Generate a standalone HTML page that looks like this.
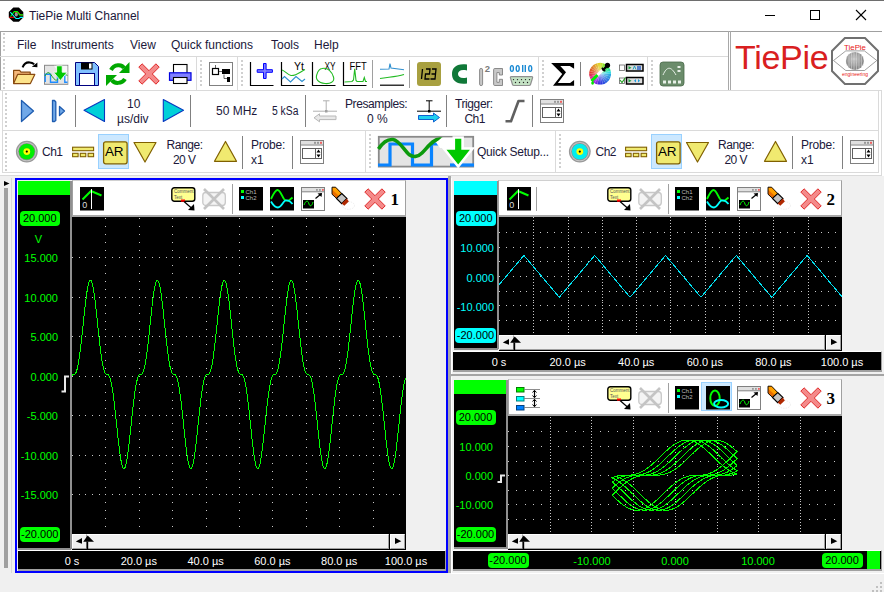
<!DOCTYPE html><html><head><meta charset="utf-8"><style>
*{margin:0;padding:0;box-sizing:border-box}
html,body{width:884px;height:592px;overflow:hidden;background:#f0f0f0;font-family:"Liberation Sans",sans-serif;position:relative}
.t{position:absolute;white-space:nowrap;line-height:1}
svg{position:absolute;overflow:visible}
</style></head><body>
<div style="position:absolute;left:0px;top:0px;width:884px;height:31px;background:#fff"></div>
<div style="position:absolute;left:0px;top:0px;width:884px;height:1px;background:#6e6e6e"></div>
<div class="t" style="left:29px;top:10px;font-size:12px;color:#20183a;">TiePie Multi Channel</div>
<svg style="left:0px;top:0px" width="884" height="592" viewBox="0 0 884 592"><polygon points="13.3,7.5 18.9,7.5 23.3,11.9 23.3,17.4 18.9,21.8 13.3,21.8 8.8,17.4 8.8,11.9" fill="#000"/><path d="M9.2,17.3 H15" stroke="#ff0000" stroke-width="1.1"/><path d="M15,12.5 H18.5 L20.5,15 H23" stroke="#ff0000" stroke-width="1.1" fill="none"/><path d="M10.5,16.5 L14.3,11.6 H17.3 L19.6,14.9 H23" stroke="#00ff00" stroke-width="1.1" fill="none"/><path d="M10.3,12.1 L16,18.5 H19 L20.5,17.4 H23" stroke="#00ffff" stroke-width="1.1" fill="none"/><ellipse cx="16.3" cy="14.5" rx="1.6" ry="2" fill="#999"/></svg>
<svg style="left:0px;top:0px" width="884" height="31" viewBox="0 0 884 31"><line x1="765" y1="15.5" x2="775" y2="15.5" stroke="#000" stroke-width="1"/><rect x="810.5" y="10.5" width="9" height="9" fill="none" stroke="#000" stroke-width="1"/><line x1="856" y1="10" x2="866" y2="20" stroke="#000" stroke-width="1.1"/><line x1="866" y1="10" x2="856" y2="20" stroke="#000" stroke-width="1.1"/></svg>
<div style="position:absolute;left:0px;top:31px;width:884px;height:145px;background:#fff"></div>
<div style="position:absolute;left:0px;top:31px;width:882px;height:1px;background:#a0a0a0"></div>
<div style="position:absolute;left:0px;top:31px;width:1px;height:59px;background:#a0a0a0"></div>
<div style="position:absolute;left:0px;top:56px;width:729px;height:1px;background:#dadada"></div>
<div style="position:absolute;left:0px;top:90px;width:882px;height:1px;background:#dadada"></div>
<div style="position:absolute;left:728px;top:31px;width:1px;height:59px;background:#a8a8a8"></div>
<div style="position:absolute;left:730px;top:31px;width:1px;height:59px;background:#a8a8a8"></div>
<div style="position:absolute;left:2px;top:90px;width:877px;height:1px;background:#dadada"></div>
<div style="position:absolute;left:2px;top:90px;width:1px;height:83px;background:#dadada"></div>
<div style="position:absolute;left:2px;top:130px;width:877px;height:1px;background:#dadada"></div>
<div style="position:absolute;left:2px;top:172px;width:877px;height:1px;background:#dadada"></div>
<div style="position:absolute;left:878px;top:90px;width:1px;height:83px;background:#dadada"></div>
<div style="position:absolute;left:0px;top:175px;width:882px;height:1px;background:#dadada"></div>
<div style="position:absolute;left:881px;top:90px;width:1px;height:86px;background:#dadada"></div>
<svg style="left:0px;top:0px" width="884" height="592" viewBox="0 0 884 592"><path d="M3,33h2v2h-2zM3,37h2v2h-2zM3,41h2v2h-2zM3,45h2v2h-2zM3,49h2v2h-2z" fill="#d0d0d0"/></svg>
<svg style="left:0px;top:0px" width="884" height="592" viewBox="0 0 884 592"><path d="M3,59h2v2h-2zM3,63h2v2h-2zM3,67h2v2h-2zM3,71h2v2h-2zM3,75h2v2h-2zM3,79h2v2h-2zM3,83h2v2h-2zM3,87h2v2h-2z" fill="#d0d0d0"/></svg>
<svg style="left:0px;top:0px" width="884" height="592" viewBox="0 0 884 592"><path d="M5,93h2v2h-2zM5,97h2v2h-2zM5,101h2v2h-2zM5,105h2v2h-2zM5,109h2v2h-2zM5,113h2v2h-2zM5,117h2v2h-2zM5,121h2v2h-2zM5,125h2v2h-2z" fill="#d0d0d0"/></svg>
<svg style="left:0px;top:0px" width="884" height="592" viewBox="0 0 884 592"><path d="M5,133h2v2h-2zM5,137h2v2h-2zM5,141h2v2h-2zM5,145h2v2h-2zM5,149h2v2h-2zM5,153h2v2h-2zM5,157h2v2h-2zM5,161h2v2h-2zM5,165h2v2h-2zM5,169h2v2h-2z" fill="#d0d0d0"/></svg>
<div style="position:absolute;left:196px;top:57px;width:1px;height:33px;background:#dadada"></div>
<div style="position:absolute;left:237px;top:57px;width:1px;height:33px;background:#dadada"></div>
<div style="position:absolute;left:538px;top:57px;width:1px;height:33px;background:#dadada"></div>
<div style="position:absolute;left:647px;top:57px;width:1px;height:33px;background:#dadada"></div>
<svg style="left:0px;top:0px" width="884" height="592" viewBox="0 0 884 592"><path d="M200,60h2v2h-2zM200,64h2v2h-2zM200,68h2v2h-2zM200,72h2v2h-2zM200,76h2v2h-2zM200,80h2v2h-2zM200,84h2v2h-2z" fill="#d0d0d0"/></svg>
<svg style="left:0px;top:0px" width="884" height="592" viewBox="0 0 884 592"><path d="M241,60h2v2h-2zM241,64h2v2h-2zM241,68h2v2h-2zM241,72h2v2h-2zM241,76h2v2h-2zM241,80h2v2h-2zM241,84h2v2h-2z" fill="#d0d0d0"/></svg>
<svg style="left:0px;top:0px" width="884" height="592" viewBox="0 0 884 592"><path d="M542,60h2v2h-2zM542,64h2v2h-2zM542,68h2v2h-2zM542,72h2v2h-2zM542,76h2v2h-2zM542,80h2v2h-2zM542,84h2v2h-2z" fill="#d0d0d0"/></svg>
<svg style="left:0px;top:0px" width="884" height="592" viewBox="0 0 884 592"><path d="M651,60h2v2h-2zM651,64h2v2h-2zM651,68h2v2h-2zM651,72h2v2h-2zM651,76h2v2h-2zM651,80h2v2h-2zM651,84h2v2h-2z" fill="#d0d0d0"/></svg>
<div style="position:absolute;left:365px;top:131px;width:1px;height:41px;background:#dadada"></div>
<svg style="left:0px;top:0px" width="884" height="592" viewBox="0 0 884 592"><path d="M369,134h2v2h-2zM369,138h2v2h-2zM369,142h2v2h-2zM369,146h2v2h-2zM369,150h2v2h-2zM369,154h2v2h-2zM369,158h2v2h-2zM369,162h2v2h-2zM369,166h2v2h-2z" fill="#d0d0d0"/></svg>
<div style="position:absolute;left:555px;top:131px;width:1px;height:41px;background:#dadada"></div>
<svg style="left:0px;top:0px" width="884" height="592" viewBox="0 0 884 592"><path d="M559,134h2v2h-2zM559,138h2v2h-2zM559,142h2v2h-2zM559,146h2v2h-2zM559,150h2v2h-2zM559,154h2v2h-2zM559,158h2v2h-2zM559,162h2v2h-2zM559,166h2v2h-2z" fill="#d0d0d0"/></svg>
<div class="t" style="left:17px;top:39px;font-size:12px;color:#20183a;">File</div>
<div class="t" style="left:51px;top:39px;font-size:12px;color:#20183a;">Instruments</div>
<div class="t" style="left:130px;top:39px;font-size:12px;color:#20183a;">View</div>
<div class="t" style="left:171px;top:39px;font-size:12px;color:#20183a;">Quick functions</div>
<div class="t" style="left:271px;top:39px;font-size:12px;color:#20183a;">Tools</div>
<div class="t" style="left:314px;top:39px;font-size:12px;color:#20183a;">Help</div>
<div class="t" style="left:735px;top:40px;font-size:34px;color:#d9201f;letter-spacing:-0.3px">TiePie</div>
<svg style="left:831px;top:37px" width="48" height="48" viewBox="0 0 48 48"><polygon points="13.9,1 34,1 47,14 47,34 34,47 13.9,47 1,34 1,14" fill="#fff" stroke="#707070" stroke-width="2"/><path d="M2.5,23.5 L14.8,13.9 H33.5 L45.8,23.5 L33.5,33.5 H14.8 Z" fill="none" stroke="#606060" stroke-width="0.6"/><defs><radialGradient id="glb" cx="0.45" cy="0.4"><stop offset="0" stop-color="#c8c8c8"/><stop offset="1" stop-color="#8a8a8a"/></radialGradient></defs><circle cx="23.9" cy="23.9" r="9" fill="url(#glb)"/><path d="M18,17v14M20.5,15.5v17M23,15v18M25.5,15v18M28,15.5v17M30.5,17v14" stroke="#e0e0e0" stroke-width="0.5"/><path d="M15.5,20h17M15,24h18M15.5,28h17" stroke="#b0b0b0" stroke-width="0.5"/><text x="24" y="12.6" font-size="8" fill="#e82020" text-anchor="middle" font-family="Liberation Sans" textLength="22" lengthAdjust="spacingAndGlyphs">TiePie</text><text x="24" y="39.4" font-size="5.5" fill="#e82020" text-anchor="middle" font-family="Liberation Sans" textLength="26" lengthAdjust="spacingAndGlyphs">engineering</text></svg>
<svg style="left:0px;top:0px" width="884" height="592" viewBox="0 0 884 592"><path d="M22.6,67.4 C24,63.5 27,62.2 29.7,62.4 C31.5,62.5 33,63.2 34.2,64.2" stroke="#000" stroke-width="2" fill="none"/><polygon points="31.8,66.8 37.4,62.4 37.4,67.2" fill="#000"/><path d="M13.6,83.6 V70.4 H19.6 L21,72.2 H30.2 V74.5" fill="#f6b87a" stroke="#8a4a10" stroke-width="1.2" stroke-linejoin="round"/><polygon points="13.6,83.6 17.6,74.4 34.8,74.4 30.4,83.6" fill="#fde48c" stroke="#8a4a10" stroke-width="1.2" stroke-linejoin="round"/></svg>
<svg style="left:0px;top:0px" width="884" height="592" viewBox="0 0 884 592"><rect x="44.5" y="65.3" width="23.3" height="19" fill="#e4e4e4" stroke="#8a8a8a" stroke-width="1"/><polygon points="54,65.8 67.3,65.8 67.3,83.8" fill="#f8f8f8"/><path d="M45.2,82 V74.2 H50.5 V82.3 H57.5 V74.2 H60 M64.8,74.2 V82.3 H67.5" stroke="#1e8cff" stroke-width="1.4" fill="none"/><path d="M45,76 C46,73.5 47.5,72.3 49,72.8 C51,73.5 53,79 55.5,80 C58,81 60,76 62,74.5 C64,73 66,74 67.5,76" stroke="#22aa22" stroke-width="1" fill="none"/><polygon points="56.6,65.8 62.2,65.8 62.2,72.2 67.2,72.2 60.4,80.5 53.6,72.2 56.6,72.2" fill="#00c800" stroke="#fff" stroke-width="0.8"/></svg>
<svg style="left:75px;top:62px" width="24" height="24" viewBox="0 0 24 24"><polygon points="0.5,0.5 19.5,0.5 23.5,4.5 23.5,23.5 0.5,23.5" fill="#80c0ff" stroke="#000080" stroke-width="1"/><rect x="6" y="0.5" width="11.5" height="7" fill="#000"/><rect x="14" y="1.5" width="2.5" height="5" fill="#fff"/><rect x="4.5" y="11.5" width="15" height="12" fill="#fff" stroke="#000080" stroke-width="1"/></svg>
<svg style="left:105px;top:62px" width="26" height="24" viewBox="0 0 26 24"><path d="M6,8 C9,2 17,2 19,6" stroke="#00a800" stroke-width="4" fill="none"/><polygon points="24.5,0 24.5,11 14,11" fill="#00a800"/><path d="M20,17 C17,22 9,22 7,18" stroke="#00a800" stroke-width="4" fill="none"/><polygon points="1,24 1,13 12,13" fill="#00a800"/></svg>
<svg style="left:138px;top:63px" width="22" height="22" viewBox="0 0 22 22"><g transform="scale(1.0)"><polygon points="0.8,4.1 4.1,0.8 11,7.7 17.9,0.8 21.2,4.1 14.3,11 21.2,17.9 17.9,21.2 11,14.3 4.1,21.2 0.8,17.9 7.7,11" fill="#f48a8a" stroke="#e02828" stroke-width="1" stroke-linejoin="round"/></g></svg>
<svg style="left:0px;top:0px" width="884" height="592" viewBox="0 0 884 592"><rect x="173.5" y="64.5" width="13.5" height="9" fill="#fff" stroke="#000" stroke-width="1.1"/><rect x="169.5" y="72.8" width="21.5" height="7.5" fill="#8080ff" stroke="#0000e0" stroke-width="1.2"/><rect x="173.5" y="77.5" width="13.5" height="6" fill="#fff" stroke="#000" stroke-width="1.1"/></svg>
<svg style="left:209px;top:62px" width="24" height="24" viewBox="0 0 24 24"><rect x="0.5" y="0.5" width="23" height="23" fill="#fff" stroke="#808080" stroke-width="1"/><path d="M6.5,3 v3.5 M10,9.5 h3 M15,12.5 v4 h3" stroke="#404040" stroke-width="0.8" fill="none"/><rect x="3.5" y="6.5" width="6" height="6" fill="#fff" stroke="#000" stroke-width="1.2"/><rect x="13" y="7" width="8" height="5" fill="#000"/><rect x="18" y="15" width="3" height="5" fill="#000"/></svg>
<svg style="left:0px;top:0px" width="884" height="592" viewBox="0 0 884 592"><path d="M250.5,62 V85.5 H273.5" stroke="#000" stroke-width="1.2" fill="none"/><path d="M263.5,63.5 h2.6 v6.2 h6.3 v2.6 h-6.3 v6.2 h-2.6 v-6.2 h-6.3 v-2.6 h6.3z" fill="#8080ff" stroke="#0000ff" stroke-width="1"/><path d="M281.5,62 V85.5 H304.5" stroke="#000" stroke-width="1.2" fill="none"/><text x="294" y="70" font-family="Liberation Sans" font-size="10.5" fill="#000">Yt</text><path d="M282,70 C285,71 288,75 291,75.5 C296,76 300,72 305,69.5" stroke="#22bb22" stroke-width="1.1" fill="none"/><path d="M282,79 L284.5,76.5 L290.5,82 L296,76.5 L302,81.5 L305,79" stroke="#3090d0" stroke-width="1.1" fill="none"/><path d="M312.5,62 V85.5 H335.5" stroke="#000" stroke-width="1.2" fill="none"/><text x="324.6" y="70" font-family="Liberation Sans" font-size="10.5" fill="#000" textLength="11" lengthAdjust="spacingAndGlyphs">XY</text><path d="M322,68.5 C328,67 332,72 333.5,77 C335,82 330,84 325,83.5 C318,83 315,79 317,74 C318,71 319,69 322,68.5z" stroke="#22bb22" stroke-width="1.1" fill="none"/><path d="M343.5,62 V85.5 H366.5" stroke="#000" stroke-width="1.2" fill="none"/><text x="349.6" y="70" font-family="Liberation Sans" font-size="10.5" fill="#000" textLength="17.2" lengthAdjust="spacingAndGlyphs">FFT</text><path d="M344.5,82 L352,81.5 L353.5,80 L354.7,68.7 L356,80.5 L357,81.5 L363,81.5 L364.3,77.5 L365.5,81.5 L367,81.5" stroke="#22bb22" stroke-width="1.1" fill="none"/><path d="M380,69.2 L389,69 L390,63.5 L391,68 L404,69.8" stroke="#3090d0" stroke-width="1.1" fill="none"/><path d="M380,78.5 C388,77 396,77 404,74.5" stroke="#22bb22" stroke-width="1.1" fill="none"/><path d="M380,85.2 H404" stroke="#000" stroke-width="1.2"/></svg>
<div style="position:absolute;left:372px;top:60px;width:1px;height:28px;background:#a0a0a0"></div>
<div style="position:absolute;left:409px;top:60px;width:1px;height:28px;background:#a0a0a0"></div>
<div style="position:absolute;left:580px;top:62px;width:1px;height:24px;background:#808080"></div>
<svg style="left:417px;top:62px" width="24" height="24" viewBox="0 0 24 24"><rect x="0" y="0" width="24" height="24" rx="3" fill="#a8a040"/><path d="M5.5,7 L4.5,17 M9,7 h4 l-0.5,5 h-4 l-0.5,5 h4.5 M15,7 h4 l-1,10 h-4.5 M14.5,12 h4" stroke="#000" stroke-width="1.3" fill="none"/></svg>
<svg style="left:451px;top:62px" width="17" height="24" viewBox="0 0 17 24"><path d="M16,2.5 C5,1 1,6 1,12 C1,18 5,23 16,21.5 V15.5 C10,17 7,15 7,12 C7,9 10,7 16,8.5 Z" fill="#107838"/></svg>
<svg style="left:0px;top:0px" width="884" height="592" viewBox="0 0 884 592"><rect x="479.6" y="68.4" width="3" height="17.2" rx="1.5" fill="#c8c8c8" stroke="#808080" stroke-width="0.9"/><text x="484.8" y="72" font-family="Liberation Sans" font-size="9.5" font-weight="bold" fill="#7a7a7a">2</text><path d="M494.8,68.5 H502.5 V75 H499.3 V72.6 H496.9 V82.3 H499.3 V79.3 H502.5 V85.5 H494.8 Q493.6,85.5 493.6,84.3 V69.7 Q493.6,68.5 494.8,68.5z" fill="#c8c8c8" stroke="#808080" stroke-width="0.9" stroke-linejoin="round"/><g fill="none" stroke="#1a8ad4" stroke-width="1.4"><ellipse cx="511.9" cy="68.5" rx="1.5" ry="2.9"/><ellipse cx="517.7" cy="68.5" rx="1.5" ry="2.9"/><ellipse cx="530.2" cy="68.5" rx="1.5" ry="2.9"/><path d="M522.7,65 V72 M525.3,65 V72"/></g><path d="M511.5,76.6 H531.5 Q533,76.6 532.5,78 L530.5,84.5 Q530.2,85.5 529,85.5 H514 Q512.8,85.5 512.5,84.5 L510.5,78 Q510,76.6 511.5,76.6z" fill="#c4e2c4" stroke="#909090" stroke-width="1.2"/><g fill="#222"><circle cx="513.5" cy="79.6" r="0.7"/><circle cx="517.5" cy="79.6" r="0.7"/><circle cx="521.5" cy="79.6" r="0.7"/><circle cx="525.5" cy="79.6" r="0.7"/><circle cx="529.5" cy="79.6" r="0.7"/><circle cx="515.5" cy="82.5" r="0.7"/><circle cx="519.5" cy="82.5" r="0.7"/><circle cx="523.5" cy="82.5" r="0.7"/><circle cx="527.5" cy="82.5" r="0.7"/></g></svg>
<svg style="left:0px;top:0px" width="884" height="592" viewBox="0 0 884 592"><polygon points="551.1,63.1 574.1,63.1 574.1,68.8 569.8,66.1 560.3,66.1 566,72.2 557.9,82.9 570.1,82.9 574.1,79.9 574.1,85.8 553,85.8 562.2,74" fill="#000"/></svg>
<svg style="left:0px;top:0px" width="884" height="592" viewBox="0 0 884 592"><defs><radialGradient id="cwg"><stop offset="0" stop-color="#fff" stop-opacity="0.55"/><stop offset="1" stop-color="#fff" stop-opacity="0"/></radialGradient></defs><path d="M600.1,73.7L600.10,62.80A10.9,10.9 0 0 1 602.92,63.17z" fill="hsl(70,75%,50%)"/><path d="M600.1,73.7L602.92,63.17A10.9,10.9 0 0 1 605.55,64.26z" fill="hsl(90,75%,50%)"/><path d="M600.1,73.7L605.55,64.26A10.9,10.9 0 0 1 607.81,65.99z" fill="hsl(110,75%,50%)"/><path d="M600.1,73.7L607.81,65.99A10.9,10.9 0 0 1 609.54,68.25z" fill="hsl(132,75%,50%)"/><path d="M600.1,73.7L609.54,68.25A10.9,10.9 0 0 1 610.63,70.88z" fill="hsl(158,75%,50%)"/><path d="M600.1,73.7L610.63,70.88A10.9,10.9 0 0 1 611.00,73.70z" fill="hsl(182,75%,50%)"/><path d="M600.1,73.7L611.00,73.70A10.9,10.9 0 0 1 610.63,76.52z" fill="hsl(199,75%,50%)"/><path d="M600.1,73.7L610.63,76.52A10.9,10.9 0 0 1 609.54,79.15z" fill="hsl(206,75%,50%)"/><path d="M600.1,73.7L609.54,79.15A10.9,10.9 0 0 1 607.81,81.41z" fill="hsl(214,75%,50%)"/><path d="M600.1,73.7L607.81,81.41A10.9,10.9 0 0 1 605.55,83.14z" fill="hsl(221,75%,50%)"/><path d="M600.1,73.7L605.55,83.14A10.9,10.9 0 0 1 602.92,84.23z" fill="hsl(229,75%,50%)"/><path d="M600.1,73.7L602.92,84.23A10.9,10.9 0 0 1 600.10,84.60z" fill="hsl(236,75%,50%)"/><path d="M600.1,73.7L600.10,84.60A10.9,10.9 0 0 1 597.28,84.23z" fill="hsl(248,75%,50%)"/><path d="M600.1,73.7L597.28,84.23A10.9,10.9 0 0 1 594.65,83.14z" fill="hsl(265,75%,50%)"/><path d="M600.1,73.7L594.65,83.14A10.9,10.9 0 0 1 592.39,81.41z" fill="hsl(282,75%,50%)"/><path d="M600.1,73.7L592.39,81.41A10.9,10.9 0 0 1 590.66,79.15z" fill="hsl(302,75%,50%)"/><path d="M600.1,73.7L590.66,79.15A10.9,10.9 0 0 1 589.57,76.52z" fill="hsl(325,75%,50%)"/><path d="M600.1,73.7L589.57,76.52A10.9,10.9 0 0 1 589.20,73.70z" fill="hsl(348,75%,50%)"/><path d="M600.1,73.7L589.20,73.70A10.9,10.9 0 0 1 589.57,70.88z" fill="hsl(5,75%,50%)"/><path d="M600.1,73.7L589.57,70.88A10.9,10.9 0 0 1 590.66,68.25z" fill="hsl(15,75%,50%)"/><path d="M600.1,73.7L590.66,68.25A10.9,10.9 0 0 1 592.39,65.99z" fill="hsl(25,75%,50%)"/><path d="M600.1,73.7L592.39,65.99A10.9,10.9 0 0 1 594.65,64.26z" fill="hsl(35,75%,50%)"/><path d="M600.1,73.7L594.65,64.26A10.9,10.9 0 0 1 597.28,63.17z" fill="hsl(45,75%,50%)"/><path d="M600.1,73.7L597.28,63.17A10.9,10.9 0 0 1 600.10,62.80z" fill="hsl(55,75%,50%)"/><circle cx="600.1" cy="73.7" r="10.9" fill="url(#cwg)"/><path d="M602.5,70 L596,76.5" stroke="#fff" stroke-width="3"/><path d="M597.5,75 L591.5,81" stroke="#00f000" stroke-width="3"/><ellipse cx="592.6" cy="83" rx="1.4" ry="1.8" fill="#00e000"/><circle cx="607.5" cy="65.3" r="2.6" fill="#000"/><path d="M606.5,66.5 L602.5,70.5" stroke="#000" stroke-width="2.4"/><path d="M601.8,67.8 L605.2,71.2" stroke="#000" stroke-width="1.6"/></svg>
<svg style="left:619px;top:63px" width="25" height="23" viewBox="0 0 25 23"><rect x="0.5" y="2" width="5" height="5.5" fill="#fff" stroke="#666" stroke-width="0.8"/><rect x="7.5" y="1.5" width="16.5" height="6.5" fill="#ddd" stroke="#000" stroke-width="1.5"/><path d="M9.5,3 l3,1.8 l-3,1.8z" fill="#20a040"/><path d="M14,6.5 l1.5,-3.5 l1.5,3.5" stroke="#20a0c0" fill="none"/><path d="M19,3v4M21,3v4" stroke="#0040c0" stroke-width="1.2"/><rect x="0.5" y="15" width="5" height="5.5" fill="#fff" stroke="#666" stroke-width="0.8"/><path d="M1,17 l2,2.5 l3.5,-5" stroke="#20a020" stroke-width="1.2" fill="none"/><rect x="7.5" y="14.5" width="16.5" height="6.5" fill="#ddd" stroke="#000" stroke-width="1.5"/><path d="M9.5,16 l3,1.8 l-3,1.8z" fill="#20a040"/><path d="M17,16 l-2,1.8 l2,1.8z M19,16 l2,1.8 l-2,1.8z" fill="#20a0e0"/></svg>
<svg style="left:660px;top:62px" width="24" height="24" viewBox="0 0 24 24"><rect x="0" y="0" width="24" height="24" rx="3" fill="#6b8c6b" stroke="#4a6a4a" stroke-width="0.8"/><path d="M3,13 C7,4 11,4 16,13" stroke="#e8f0e8" stroke-width="1" fill="none"/><rect x="17.5" y="4" width="3" height="2" fill="#e8f0e8"/><rect x="17.5" y="8" width="3" height="2" fill="#e8f0e8"/><path d="M3,18.5h3v3h-3zM8,18.5h3v3h-3zM13,18.5h3v3h-3zM18,18.5h3v3h-3z" fill="#e8f0e8"/></svg>
<svg style="left:0px;top:0px" width="884" height="592" viewBox="0 0 884 592"><polygon points="21.5,100.5 33.5,111 21.5,121.5" fill="#70a8e8" stroke="#1e5cb0" stroke-width="1.3" stroke-linejoin="round"/><polygon points="52.5,100.5 54.5,100.5 55.8,102 55.8,120.5 54.5,121.5 52.5,121.5" fill="#70a8e8" stroke="#1e5cb0" stroke-width="1.3" stroke-linejoin="round"/><polygon points="59.5,106.5 64.5,111 59.5,115.5" fill="#70a8e8" stroke="#1e5cb0" stroke-width="1.3" stroke-linejoin="round"/><polygon points="84,110.3 104.5,99.5 104.5,121.5" fill="#00d0d8" stroke="#0838c0" stroke-width="1.1" stroke-linejoin="round"/><polygon points="183.5,110.3 163.3,99.5 163.3,121.5" fill="#00d0d8" stroke="#0838c0" stroke-width="1.1" stroke-linejoin="round"/><path d="M323,100.8h6.5M326.2,100.8v10.4M313,111.2h24" stroke="#b0b0b0" stroke-width="1" fill="none"/><rect x="325" y="110" width="2.5" height="2.5" fill="#a0a0a0"/><polygon points="314,117.8 319.5,113.8 319.5,116 336,116 336,119.6 319.5,119.6 319.5,121.8" fill="#e8e8e8" stroke="#b8b8b8" stroke-width="1" stroke-linejoin="round"/><path d="M426,100.8h6.5M429.2,100.8v10.4M417,111.2h24" stroke="#000" stroke-width="1" fill="none"/><rect x="428" y="110" width="2.5" height="2.5" fill="#000"/><polygon points="439.5,117.5 433.5,113 433.5,115.5 418.5,115.5 418.5,119.5 433.5,119.5 433.5,122" fill="#20d0f0" stroke="#1060d0" stroke-width="1" stroke-linejoin="round"/><path d="M505.5,121.3 H511 L518.5,101 H524.5" stroke="#606060" stroke-width="2.6" fill="none" stroke-linejoin="round"/></svg>
<div style="position:absolute;left:75px;top:95px;width:1px;height:32px;background:#808080"></div>
<div style="position:absolute;left:190px;top:95px;width:1px;height:32px;background:#808080"></div>
<div style="position:absolute;left:305px;top:95px;width:1px;height:32px;background:#808080"></div>
<div style="position:absolute;left:446px;top:95px;width:1px;height:32px;background:#808080"></div>
<div style="position:absolute;left:532px;top:95px;width:1px;height:32px;background:#808080"></div>
<svg style="left:540px;top:99px" width="24" height="24" viewBox="0 0 24 24"><rect x="0.5" y="0.5" width="23" height="23" fill="#fff" stroke="#808080" stroke-width="1"/><rect x="1" y="1" width="22" height="3.5" fill="#e0e0e0"/><path d="M0.5,5 h23" stroke="#808080" stroke-width="1"/><rect x="14" y="1.8" width="2" height="2" fill="#999"/><rect x="17" y="1.8" width="2" height="2" fill="#999"/><rect x="20" y="1.8" width="2" height="2" fill="#f06060"/><rect x="2.5" y="8.5" width="19" height="10" fill="#fff" stroke="#606060" stroke-width="1"/><path d="M15.5,8.5 v10" stroke="#606060" stroke-width="1"/><path d="M16.5,12.5 l2,-3 l2,3z M16.5,14.5 l2,3 l2,-3z" fill="#000"/></svg>
<div class="t" style="left:127px;top:98px;font-size:12px;color:#20183a;">10</div>
<div class="t" style="left:117px;top:113px;font-size:12px;color:#20183a;">&#181;s/div</div>
<div class="t" style="left:216px;top:105px;font-size:12px;color:#20183a;">50 MHz</div>
<div class="t" style="left:272px;top:105px;font-size:12px;color:#20183a;transform:scaleX(0.86);transform-origin:0 0">5 kSa</div>
<div class="t" style="left:345px;top:98px;font-size:12px;color:#20183a;letter-spacing:-0.4px">Presamples:</div>
<div class="t" style="left:367px;top:113px;font-size:12px;color:#20183a;">0 %</div>
<div class="t" style="left:455px;top:98px;font-size:12px;color:#20183a;letter-spacing:-0.4px">Trigger:</div>
<div class="t" style="left:464.5px;top:113px;font-size:12px;color:#20183a;letter-spacing:-0.6px">Ch1</div>
<svg style="left:0px;top:0px" width="884" height="592" viewBox="0 0 884 592"><circle cx="26.8" cy="151.6" r="10.9" fill="#989898"/><circle cx="26.8" cy="151.6" r="9.6" fill="#c4c4c4"/><circle cx="26.8" cy="151.6" r="8.6" fill="#8c8c8c"/><circle cx="26.8" cy="151.6" r="7.9" fill="#00ee00"/><circle cx="26.8" cy="151.6" r="3.4" fill="#ffff00"/><circle cx="26.8" cy="151.6" r="1.1" fill="#000"/></svg>
<div class="t" style="left:42px;top:146px;font-size:12px;color:#20183a;letter-spacing:-0.5px">Ch1</div>
<svg style="left:72px;top:146px" width="23" height="12" viewBox="0 0 23 12"><rect x="0.6" y="1.2" width="21" height="3.5" fill="#f0ea70" stroke="#806000" stroke-width="1.1"/><rect x="0.6" y="7.3" width="5.5" height="3.4" fill="#f0ea70" stroke="#806000" stroke-width="1.1"/><rect x="8.3" y="7.3" width="5.5" height="3.4" fill="#f0ea70" stroke="#806000" stroke-width="1.1"/><rect x="16.1" y="7.3" width="5.5" height="3.4" fill="#f0ea70" stroke="#806000" stroke-width="1.1"/></svg>
<div style="position:absolute;left:98px;top:134px;width:31px;height:35px;background:#cce8ff;border:1px solid #99d1ff"></div>
<svg style="left:103px;top:141px" width="25" height="24" viewBox="0 0 25 24"><rect x="0.6" y="0.8" width="23.5" height="22" rx="2" fill="#f0ea70" stroke="#806000" stroke-width="1.3"/></svg>
<div class="t" style="left:105px;top:145px;font-size:13.5px;color:#000;letter-spacing:-0.3px">AR</div>
<svg style="left:0px;top:0px" width="884" height="592" viewBox="0 0 884 592"><polygon points="134.0,142.5 156.0,142.5 145.0,162" fill="#f0ea70" stroke="#806000" stroke-width="1.2" stroke-linejoin="round"/><polygon points="214.5,161.3 236.5,161.3 225.5,141.5" fill="#f0ea70" stroke="#806000" stroke-width="1.2" stroke-linejoin="round"/></svg>
<div class="t" style="left:166.5px;top:139px;font-size:12px;color:#20183a;letter-spacing:-0.4px">Range:</div>
<div class="t" style="left:173.0px;top:154px;font-size:12px;color:#20183a;letter-spacing:-0.6px">20 V</div>
<div style="position:absolute;left:242px;top:136px;width:1px;height:33px;background:#808080"></div>
<div class="t" style="left:251px;top:139px;font-size:12px;color:#20183a;letter-spacing:-0.2px">Probe:</div>
<div class="t" style="left:251px;top:154px;font-size:12px;color:#20183a;">x1</div>
<div style="position:absolute;left:292px;top:136px;width:1px;height:33px;background:#808080"></div>
<svg style="left:300px;top:140px" width="24" height="24" viewBox="0 0 24 24"><rect x="0.5" y="0.5" width="23" height="23" fill="#fff" stroke="#808080" stroke-width="1"/><rect x="1" y="1" width="22" height="3.5" fill="#e0e0e0"/><path d="M0.5,5 h23" stroke="#808080" stroke-width="1"/><rect x="14" y="1.8" width="2" height="2" fill="#999"/><rect x="17" y="1.8" width="2" height="2" fill="#999"/><rect x="20" y="1.8" width="2" height="2" fill="#f06060"/><rect x="2.5" y="8.5" width="19" height="10" fill="#fff" stroke="#606060" stroke-width="1"/><path d="M15.5,8.5 v10" stroke="#606060" stroke-width="1"/><path d="M16.5,12.5 l2,-3 l2,3z M16.5,14.5 l2,3 l2,-3z" fill="#000"/></svg>
<svg style="left:0px;top:0px" width="884" height="592" viewBox="0 0 884 592"><circle cx="579.8" cy="151.6" r="10.9" fill="#989898"/><circle cx="579.8" cy="151.6" r="9.6" fill="#c4c4c4"/><circle cx="579.8" cy="151.6" r="8.6" fill="#8c8c8c"/><circle cx="579.8" cy="151.6" r="7.9" fill="#00eeee"/><circle cx="579.8" cy="151.6" r="3.4" fill="#ffff00"/><circle cx="579.8" cy="151.6" r="1.1" fill="#000"/></svg>
<div class="t" style="left:595.5px;top:146px;font-size:12px;color:#20183a;letter-spacing:-0.5px">Ch2</div>
<svg style="left:624.5px;top:146px" width="23" height="12" viewBox="0 0 23 12"><rect x="0.6" y="1.2" width="21" height="3.5" fill="#f0ea70" stroke="#806000" stroke-width="1.1"/><rect x="0.6" y="7.3" width="5.5" height="3.4" fill="#f0ea70" stroke="#806000" stroke-width="1.1"/><rect x="8.3" y="7.3" width="5.5" height="3.4" fill="#f0ea70" stroke="#806000" stroke-width="1.1"/><rect x="16.1" y="7.3" width="5.5" height="3.4" fill="#f0ea70" stroke="#806000" stroke-width="1.1"/></svg>
<div style="position:absolute;left:651px;top:134px;width:31px;height:35px;background:#cce8ff;border:1px solid #99d1ff"></div>
<svg style="left:656px;top:141px" width="25" height="24" viewBox="0 0 25 24"><rect x="0.6" y="0.8" width="23.5" height="22" rx="2" fill="#f0ea70" stroke="#806000" stroke-width="1.3"/></svg>
<div class="t" style="left:658px;top:145px;font-size:13.5px;color:#000;letter-spacing:-0.3px">AR</div>
<svg style="left:0px;top:0px" width="884" height="592" viewBox="0 0 884 592"><polygon points="686.5,142.5 708.5,142.5 697.5,162" fill="#f0ea70" stroke="#806000" stroke-width="1.2" stroke-linejoin="round"/><polygon points="764.5,161.3 786.5,161.3 775.5,141.5" fill="#f0ea70" stroke="#806000" stroke-width="1.2" stroke-linejoin="round"/></svg>
<div class="t" style="left:718px;top:139px;font-size:12px;color:#20183a;letter-spacing:-0.4px">Range:</div>
<div class="t" style="left:724.5px;top:154px;font-size:12px;color:#20183a;letter-spacing:-0.6px">20 V</div>
<div style="position:absolute;left:792px;top:136px;width:1px;height:33px;background:#808080"></div>
<div class="t" style="left:801px;top:139px;font-size:12px;color:#20183a;letter-spacing:-0.2px">Probe:</div>
<div class="t" style="left:801px;top:154px;font-size:12px;color:#20183a;">x1</div>
<div style="position:absolute;left:842px;top:136px;width:1px;height:33px;background:#808080"></div>
<svg style="left:849.5px;top:140px" width="24" height="24" viewBox="0 0 24 24"><rect x="0.5" y="0.5" width="23" height="23" fill="#fff" stroke="#808080" stroke-width="1"/><rect x="1" y="1" width="22" height="3.5" fill="#e0e0e0"/><path d="M0.5,5 h23" stroke="#808080" stroke-width="1"/><rect x="14" y="1.8" width="2" height="2" fill="#999"/><rect x="17" y="1.8" width="2" height="2" fill="#999"/><rect x="20" y="1.8" width="2" height="2" fill="#f06060"/><rect x="2.5" y="8.5" width="19" height="10" fill="#fff" stroke="#606060" stroke-width="1"/><path d="M15.5,8.5 v10" stroke="#606060" stroke-width="1"/><path d="M16.5,12.5 l2,-3 l2,3z M16.5,14.5 l2,3 l2,-3z" fill="#000"/></svg>
<svg style="left:0px;top:0px" width="884" height="592" viewBox="0 0 884 592"><rect x="378.8" y="136.8" width="94.4" height="29.8" fill="#e4e4e4" stroke="#8a8a8a" stroke-width="1.8"/><path d="M378,165 H390 V144 H412.5 V165 H431.5 V144 H445" stroke="#0a84ff" stroke-width="3.2" fill="none"/><path d="M450,165 H474" stroke="#0a84ff" stroke-width="3.2"/><path d="M378.5,149 C383,142 388,139 393,139.5 C399,140 404,150 409,154.5 C413,157.5 418,157 422,153 C428,147 433,139 440,139 C444,139 447,142 449,144" stroke="#0c9a0c" stroke-width="3.6" fill="none"/><polygon points="436,142.5 442,137.6 454,137.6 454,148 440,148" fill="#fff"/><polygon points="453.8,137.5 462.6,137.5 462.6,148.5 472.5,148.5 458.2,166.5 443.9,148.5 453.8,148.5" fill="#00c800" stroke="#fff" stroke-width="2.6" stroke-linejoin="miter"/></svg>
<div class="t" style="left:477px;top:146px;font-size:12px;color:#20183a;letter-spacing:-0.25px">Quick Setup...</div>
<div style="position:absolute;left:0px;top:176px;width:884px;height:416px;background:#f0f0f0"></div>
<div style="position:absolute;left:4px;top:188px;width:4px;height:380px;background:#a0a0a0"></div>
<svg style="left:0px;top:0px" width="884" height="592" viewBox="0 0 884 592"><polygon points="4,181 9.5,183.5 4,186" fill="#000"/></svg>
<div style="position:absolute;left:11px;top:178px;width:1px;height:395px;background:#d8d8d8"></div>
<div style="position:absolute;left:15px;top:178px;width:433px;height:395px;border:2px solid #0000ff;background:#f0f0f0"></div>
<div style="position:absolute;left:18px;top:181px;width:52px;height:367px;background:#000"></div>
<div style="position:absolute;left:18px;top:181px;width:52px;height:14px;background:#00ff00"></div>
<div style="position:absolute;left:70px;top:181px;width:2px;height:368px;background:#909090"></div>
<div style="position:absolute;left:18px;top:548px;width:53px;height:2px;background:#909090"></div>
<div class="t" style="left:19.5px;top:210.5px;width:40.5px;height:15px;background:#00ff00;border-radius:4px;color:#000;font-size:11px;line-height:15px;text-align:center">20.000</div>
<div class="t" style="left:19.5px;top:526.5px;width:40.5px;height:15px;background:#00ff00;border-radius:4px;color:#000;font-size:11px;line-height:15px;text-align:center">-20.000</div>
<div class="t" style="left:-1.5px;top:233.5px;width:80px;text-align:center;font-size:11px;color:#00ff00">V</div>
<div class="t" style="left:-2px;top:253.0px;width:60px;text-align:right;font-size:11px;color:#00ff00">15.000</div>
<div class="t" style="left:-2px;top:292.5px;width:60px;text-align:right;font-size:11px;color:#00ff00">10.000</div>
<div class="t" style="left:-2px;top:332.0px;width:60px;text-align:right;font-size:11px;color:#00ff00">5.000</div>
<div class="t" style="left:-2px;top:371.5px;width:60px;text-align:right;font-size:11px;color:#00ff00">0.000</div>
<div class="t" style="left:-2px;top:411.0px;width:60px;text-align:right;font-size:11px;color:#00ff00">-5.000</div>
<div class="t" style="left:-2px;top:450.5px;width:60px;text-align:right;font-size:11px;color:#00ff00">-10.000</div>
<div class="t" style="left:-2px;top:490.0px;width:60px;text-align:right;font-size:11px;color:#00ff00">-15.000</div>
<div style="position:absolute;left:72px;top:180px;width:334px;height:37px;background:#fff;border-top:1px solid #d0d0d0;border-left:1px solid #a0a0a0;border-right:1px solid #a0a0a0;border-bottom:2px solid #a8a8a8"></div>
<svg style="left:80px;top:187px" width="24" height="24" viewBox="0 0 24 24"><rect x="0" y="0" width="24" height="23.5" fill="#000"/><path d="M2.5,12.5 L11,4 L21.5,8.5" stroke="#00ff00" stroke-width="2" fill="none"/><path d="M11.5,2 V22" stroke="#fff" stroke-width="1"/><text x="2.3" y="21" font-family="Liberation Sans" font-size="9" fill="#ddd">0</text></svg>
<svg style="left:171px;top:187px" width="25" height="24" viewBox="0 0 25 24"><rect x="0.8" y="0.8" width="23" height="13.5" rx="2.5" fill="#ffff90" stroke="#000" stroke-width="1.4"/><text x="3" y="6" font-family="Liberation Sans" font-size="4.5" fill="#555">Comment</text><text x="3" y="11.5" font-family="Liberation Sans" font-size="4.5" fill="#555">Text</text><rect x="10" y="12.5" width="4" height="2.2" fill="#ff0000"/><path d="M13,14.5 L21,21.5" stroke="#000" stroke-width="1.2"/><polygon points="23.5,23.5 17,23 23,17" fill="#000"/></svg>
<svg style="left:202px;top:188px" width="24" height="22" viewBox="0 0 24 22"><rect x="0.8" y="4.5" width="22.5" height="13" rx="3" fill="#f4f4f4" stroke="#c8c8c8" stroke-width="1.3"/><path d="M2,1 L22,21 M22,1 L2,21" stroke="#c4c4c4" stroke-width="2.6"/></svg>
<div style="position:absolute;left:231.5px;top:184px;width:1px;height:30px;background:#a0a0a0"></div>
<svg style="left:239px;top:187px" width="24" height="24" viewBox="0 0 24 24"><rect x="0" y="0" width="24" height="23.5" fill="#000"/><rect x="2" y="3" width="3" height="3" fill="#00ff00"/><rect x="2" y="9" width="3" height="3" fill="#00ffff"/><text x="6.5" y="7" font-family="Liberation Sans" font-size="6" fill="#bbb">Ch1</text><text x="6.5" y="12.8" font-family="Liberation Sans" font-size="6" fill="#bbb">Ch2</text></svg>
<svg style="left:270px;top:187px" width="24" height="24" viewBox="0 0 24 24"><rect x="0" y="0" width="24" height="23.5" fill="#000"/><path d="M1,12 C3,8 5,3 7.5,3 C10,3 12,9 14,12 C15.5,14 18,14 19.5,13 L22.5,10.5" stroke="#00ff00" stroke-width="1.8" fill="none"/><path d="M1,14.5 C3,18 5,20.5 8,20.5 C11,20.5 13,15 15,13.8 C17,12.8 20,14 22.5,17" stroke="#00ffff" stroke-width="1.8" fill="none"/></svg>
<svg style="left:301px;top:187px" width="24" height="24" viewBox="0 0 24 24"><rect x="0.5" y="0.5" width="23" height="23" fill="#fff" stroke="#808080" stroke-width="1"/><rect x="1" y="1" width="22" height="3.5" fill="#e0e0e0"/><path d="M0.5,4.8 h23" stroke="#808080" stroke-width="1"/><rect x="15" y="2" width="1.8" height="1.8" fill="#999"/><rect x="18" y="2" width="1.8" height="1.8" fill="#999"/><rect x="21" y="2" width="1.8" height="1.8" fill="#f06060"/><rect x="2" y="13" width="11" height="8.5" fill="#000"/><path d="M3,18 C5,13 7,13 8,17 C9,20 11,19 12,15" stroke="#00ff00" stroke-width="1" fill="none"/><path d="M14.5,11.5 L20,7" stroke="#000" stroke-width="1.2"/><polygon points="21,6 16.5,6.5 20.5,10" fill="#000"/></svg>
<svg style="left:332px;top:187px" width="24" height="24" viewBox="0 0 24 24"><ellipse cx="16.5" cy="18.5" rx="6" ry="3.8" fill="none" stroke="#e8e8e8" stroke-width="0.8" stroke-dasharray="1.5 1"/><polygon points="0,0.2 3.6,0.2 9.7,6.5 4.5,11.4 0,7.2" fill="#e86c00"/><polygon points="0,0.2 3.6,0.2 9.7,6.5 7,9 0.5,3" fill="#ffa000"/><polygon points="0,0.2 3.6,0.2 9.7,6.5 4.5,11.4 0,7.2" fill="none" stroke="#000" stroke-width="0.9"/><polygon points="9.7,6.5 14.9,11.4 9.7,16.6 4.5,11.4" fill="#c4c4c4" stroke="#000" stroke-width="1.2"/><polygon points="14.9,11.4 16.8,14.5 12.3,18.8 9.7,16.6" fill="#b02800"/></svg>
<svg style="left:364px;top:188px" width="22" height="22" viewBox="0 0 22 22"><polygon points="0.8,4.1 4.1,0.8 11,7.7 17.9,0.8 21.2,4.1 14.3,11 21.2,17.9 17.9,21.2 11,14.3 4.1,21.2 0.8,17.9 7.7,11" fill="#f48a8a" stroke="#e02828" stroke-width="1" stroke-linejoin="round"/></svg>
<div class="t" style="left:390.5px;top:191px;font-family:'Liberation Serif',serif;font-weight:bold;font-size:17px;color:#000">1</div>
<div style="position:absolute;left:72px;top:217px;width:334px;height:317px;background:#000"></div>
<svg style="left:0px;top:0px" width="884" height="592" viewBox="0 0 884 592"><path d="M72,257h1v1h-1zM79,257h1v1h-1zM85,257h1v1h-1zM92,257h1v1h-1zM99,257h1v1h-1zM105,257h1v1h-1zM112,257h1v1h-1zM119,257h1v1h-1zM125,257h1v1h-1zM132,257h1v1h-1zM139,257h1v1h-1zM145,257h1v1h-1zM152,257h1v1h-1zM159,257h1v1h-1zM166,257h1v1h-1zM172,257h1v1h-1zM179,257h1v1h-1zM186,257h1v1h-1zM192,257h1v1h-1zM199,257h1v1h-1zM206,257h1v1h-1zM212,257h1v1h-1zM219,257h1v1h-1zM226,257h1v1h-1zM232,257h1v1h-1zM239,257h1v1h-1zM246,257h1v1h-1zM252,257h1v1h-1zM259,257h1v1h-1zM266,257h1v1h-1zM272,257h1v1h-1zM279,257h1v1h-1zM286,257h1v1h-1zM292,257h1v1h-1zM299,257h1v1h-1zM306,257h1v1h-1zM312,257h1v1h-1zM319,257h1v1h-1zM326,257h1v1h-1zM333,257h1v1h-1zM339,257h1v1h-1zM346,257h1v1h-1zM353,257h1v1h-1zM359,257h1v1h-1zM366,257h1v1h-1zM373,257h1v1h-1zM379,257h1v1h-1zM386,257h1v1h-1zM393,257h1v1h-1zM399,257h1v1h-1zM72,297h1v1h-1zM79,297h1v1h-1zM85,297h1v1h-1zM92,297h1v1h-1zM99,297h1v1h-1zM105,297h1v1h-1zM112,297h1v1h-1zM119,297h1v1h-1zM125,297h1v1h-1zM132,297h1v1h-1zM139,297h1v1h-1zM145,297h1v1h-1zM152,297h1v1h-1zM159,297h1v1h-1zM166,297h1v1h-1zM172,297h1v1h-1zM179,297h1v1h-1zM186,297h1v1h-1zM192,297h1v1h-1zM199,297h1v1h-1zM206,297h1v1h-1zM212,297h1v1h-1zM219,297h1v1h-1zM226,297h1v1h-1zM232,297h1v1h-1zM239,297h1v1h-1zM246,297h1v1h-1zM252,297h1v1h-1zM259,297h1v1h-1zM266,297h1v1h-1zM272,297h1v1h-1zM279,297h1v1h-1zM286,297h1v1h-1zM292,297h1v1h-1zM299,297h1v1h-1zM306,297h1v1h-1zM312,297h1v1h-1zM319,297h1v1h-1zM326,297h1v1h-1zM333,297h1v1h-1zM339,297h1v1h-1zM346,297h1v1h-1zM353,297h1v1h-1zM359,297h1v1h-1zM366,297h1v1h-1zM373,297h1v1h-1zM379,297h1v1h-1zM386,297h1v1h-1zM393,297h1v1h-1zM399,297h1v1h-1zM72,336h1v1h-1zM79,336h1v1h-1zM85,336h1v1h-1zM92,336h1v1h-1zM99,336h1v1h-1zM105,336h1v1h-1zM112,336h1v1h-1zM119,336h1v1h-1zM125,336h1v1h-1zM132,336h1v1h-1zM139,336h1v1h-1zM145,336h1v1h-1zM152,336h1v1h-1zM159,336h1v1h-1zM166,336h1v1h-1zM172,336h1v1h-1zM179,336h1v1h-1zM186,336h1v1h-1zM192,336h1v1h-1zM199,336h1v1h-1zM206,336h1v1h-1zM212,336h1v1h-1zM219,336h1v1h-1zM226,336h1v1h-1zM232,336h1v1h-1zM239,336h1v1h-1zM246,336h1v1h-1zM252,336h1v1h-1zM259,336h1v1h-1zM266,336h1v1h-1zM272,336h1v1h-1zM279,336h1v1h-1zM286,336h1v1h-1zM292,336h1v1h-1zM299,336h1v1h-1zM306,336h1v1h-1zM312,336h1v1h-1zM319,336h1v1h-1zM326,336h1v1h-1zM333,336h1v1h-1zM339,336h1v1h-1zM346,336h1v1h-1zM353,336h1v1h-1zM359,336h1v1h-1zM366,336h1v1h-1zM373,336h1v1h-1zM379,336h1v1h-1zM386,336h1v1h-1zM393,336h1v1h-1zM399,336h1v1h-1zM72,376h1v1h-1zM79,376h1v1h-1zM85,376h1v1h-1zM92,376h1v1h-1zM99,376h1v1h-1zM105,376h1v1h-1zM112,376h1v1h-1zM119,376h1v1h-1zM125,376h1v1h-1zM132,376h1v1h-1zM139,376h1v1h-1zM145,376h1v1h-1zM152,376h1v1h-1zM159,376h1v1h-1zM166,376h1v1h-1zM172,376h1v1h-1zM179,376h1v1h-1zM186,376h1v1h-1zM192,376h1v1h-1zM199,376h1v1h-1zM206,376h1v1h-1zM212,376h1v1h-1zM219,376h1v1h-1zM226,376h1v1h-1zM232,376h1v1h-1zM239,376h1v1h-1zM246,376h1v1h-1zM252,376h1v1h-1zM259,376h1v1h-1zM266,376h1v1h-1zM272,376h1v1h-1zM279,376h1v1h-1zM286,376h1v1h-1zM292,376h1v1h-1zM299,376h1v1h-1zM306,376h1v1h-1zM312,376h1v1h-1zM319,376h1v1h-1zM326,376h1v1h-1zM333,376h1v1h-1zM339,376h1v1h-1zM346,376h1v1h-1zM353,376h1v1h-1zM359,376h1v1h-1zM366,376h1v1h-1zM373,376h1v1h-1zM379,376h1v1h-1zM386,376h1v1h-1zM393,376h1v1h-1zM399,376h1v1h-1zM72,415h1v1h-1zM79,415h1v1h-1zM85,415h1v1h-1zM92,415h1v1h-1zM99,415h1v1h-1zM105,415h1v1h-1zM112,415h1v1h-1zM119,415h1v1h-1zM125,415h1v1h-1zM132,415h1v1h-1zM139,415h1v1h-1zM145,415h1v1h-1zM152,415h1v1h-1zM159,415h1v1h-1zM166,415h1v1h-1zM172,415h1v1h-1zM179,415h1v1h-1zM186,415h1v1h-1zM192,415h1v1h-1zM199,415h1v1h-1zM206,415h1v1h-1zM212,415h1v1h-1zM219,415h1v1h-1zM226,415h1v1h-1zM232,415h1v1h-1zM239,415h1v1h-1zM246,415h1v1h-1zM252,415h1v1h-1zM259,415h1v1h-1zM266,415h1v1h-1zM272,415h1v1h-1zM279,415h1v1h-1zM286,415h1v1h-1zM292,415h1v1h-1zM299,415h1v1h-1zM306,415h1v1h-1zM312,415h1v1h-1zM319,415h1v1h-1zM326,415h1v1h-1zM333,415h1v1h-1zM339,415h1v1h-1zM346,415h1v1h-1zM353,415h1v1h-1zM359,415h1v1h-1zM366,415h1v1h-1zM373,415h1v1h-1zM379,415h1v1h-1zM386,415h1v1h-1zM393,415h1v1h-1zM399,415h1v1h-1zM72,455h1v1h-1zM79,455h1v1h-1zM85,455h1v1h-1zM92,455h1v1h-1zM99,455h1v1h-1zM105,455h1v1h-1zM112,455h1v1h-1zM119,455h1v1h-1zM125,455h1v1h-1zM132,455h1v1h-1zM139,455h1v1h-1zM145,455h1v1h-1zM152,455h1v1h-1zM159,455h1v1h-1zM166,455h1v1h-1zM172,455h1v1h-1zM179,455h1v1h-1zM186,455h1v1h-1zM192,455h1v1h-1zM199,455h1v1h-1zM206,455h1v1h-1zM212,455h1v1h-1zM219,455h1v1h-1zM226,455h1v1h-1zM232,455h1v1h-1zM239,455h1v1h-1zM246,455h1v1h-1zM252,455h1v1h-1zM259,455h1v1h-1zM266,455h1v1h-1zM272,455h1v1h-1zM279,455h1v1h-1zM286,455h1v1h-1zM292,455h1v1h-1zM299,455h1v1h-1zM306,455h1v1h-1zM312,455h1v1h-1zM319,455h1v1h-1zM326,455h1v1h-1zM333,455h1v1h-1zM339,455h1v1h-1zM346,455h1v1h-1zM353,455h1v1h-1zM359,455h1v1h-1zM366,455h1v1h-1zM373,455h1v1h-1zM379,455h1v1h-1zM386,455h1v1h-1zM393,455h1v1h-1zM399,455h1v1h-1zM72,494h1v1h-1zM79,494h1v1h-1zM85,494h1v1h-1zM92,494h1v1h-1zM99,494h1v1h-1zM105,494h1v1h-1zM112,494h1v1h-1zM119,494h1v1h-1zM125,494h1v1h-1zM132,494h1v1h-1zM139,494h1v1h-1zM145,494h1v1h-1zM152,494h1v1h-1zM159,494h1v1h-1zM166,494h1v1h-1zM172,494h1v1h-1zM179,494h1v1h-1zM186,494h1v1h-1zM192,494h1v1h-1zM199,494h1v1h-1zM206,494h1v1h-1zM212,494h1v1h-1zM219,494h1v1h-1zM226,494h1v1h-1zM232,494h1v1h-1zM239,494h1v1h-1zM246,494h1v1h-1zM252,494h1v1h-1zM259,494h1v1h-1zM266,494h1v1h-1zM272,494h1v1h-1zM279,494h1v1h-1zM286,494h1v1h-1zM292,494h1v1h-1zM299,494h1v1h-1zM306,494h1v1h-1zM312,494h1v1h-1zM319,494h1v1h-1zM326,494h1v1h-1zM333,494h1v1h-1zM339,494h1v1h-1zM346,494h1v1h-1zM353,494h1v1h-1zM359,494h1v1h-1zM366,494h1v1h-1zM373,494h1v1h-1zM379,494h1v1h-1zM386,494h1v1h-1zM393,494h1v1h-1zM399,494h1v1h-1zM105,218h1v1h-1zM105,226h1v1h-1zM105,234h1v1h-1zM105,242h1v1h-1zM105,250h1v1h-1zM105,257h1v1h-1zM105,265h1v1h-1zM105,273h1v1h-1zM105,281h1v1h-1zM105,289h1v1h-1zM105,297h1v1h-1zM105,305h1v1h-1zM105,313h1v1h-1zM105,321h1v1h-1zM105,329h1v1h-1zM105,336h1v1h-1zM105,344h1v1h-1zM105,352h1v1h-1zM105,360h1v1h-1zM105,368h1v1h-1zM105,376h1v1h-1zM105,384h1v1h-1zM105,392h1v1h-1zM105,400h1v1h-1zM105,408h1v1h-1zM105,415h1v1h-1zM105,423h1v1h-1zM105,431h1v1h-1zM105,439h1v1h-1zM105,447h1v1h-1zM105,455h1v1h-1zM105,463h1v1h-1zM105,471h1v1h-1zM105,479h1v1h-1zM105,487h1v1h-1zM105,494h1v1h-1zM105,502h1v1h-1zM105,510h1v1h-1zM105,518h1v1h-1zM105,526h1v1h-1zM139,218h1v1h-1zM139,226h1v1h-1zM139,234h1v1h-1zM139,242h1v1h-1zM139,250h1v1h-1zM139,257h1v1h-1zM139,265h1v1h-1zM139,273h1v1h-1zM139,281h1v1h-1zM139,289h1v1h-1zM139,297h1v1h-1zM139,305h1v1h-1zM139,313h1v1h-1zM139,321h1v1h-1zM139,329h1v1h-1zM139,336h1v1h-1zM139,344h1v1h-1zM139,352h1v1h-1zM139,360h1v1h-1zM139,368h1v1h-1zM139,376h1v1h-1zM139,384h1v1h-1zM139,392h1v1h-1zM139,400h1v1h-1zM139,408h1v1h-1zM139,415h1v1h-1zM139,423h1v1h-1zM139,431h1v1h-1zM139,439h1v1h-1zM139,447h1v1h-1zM139,455h1v1h-1zM139,463h1v1h-1zM139,471h1v1h-1zM139,479h1v1h-1zM139,487h1v1h-1zM139,494h1v1h-1zM139,502h1v1h-1zM139,510h1v1h-1zM139,518h1v1h-1zM139,526h1v1h-1zM172,218h1v1h-1zM172,226h1v1h-1zM172,234h1v1h-1zM172,242h1v1h-1zM172,250h1v1h-1zM172,257h1v1h-1zM172,265h1v1h-1zM172,273h1v1h-1zM172,281h1v1h-1zM172,289h1v1h-1zM172,297h1v1h-1zM172,305h1v1h-1zM172,313h1v1h-1zM172,321h1v1h-1zM172,329h1v1h-1zM172,336h1v1h-1zM172,344h1v1h-1zM172,352h1v1h-1zM172,360h1v1h-1zM172,368h1v1h-1zM172,376h1v1h-1zM172,384h1v1h-1zM172,392h1v1h-1zM172,400h1v1h-1zM172,408h1v1h-1zM172,415h1v1h-1zM172,423h1v1h-1zM172,431h1v1h-1zM172,439h1v1h-1zM172,447h1v1h-1zM172,455h1v1h-1zM172,463h1v1h-1zM172,471h1v1h-1zM172,479h1v1h-1zM172,487h1v1h-1zM172,494h1v1h-1zM172,502h1v1h-1zM172,510h1v1h-1zM172,518h1v1h-1zM172,526h1v1h-1zM206,218h1v1h-1zM206,226h1v1h-1zM206,234h1v1h-1zM206,242h1v1h-1zM206,250h1v1h-1zM206,257h1v1h-1zM206,265h1v1h-1zM206,273h1v1h-1zM206,281h1v1h-1zM206,289h1v1h-1zM206,297h1v1h-1zM206,305h1v1h-1zM206,313h1v1h-1zM206,321h1v1h-1zM206,329h1v1h-1zM206,336h1v1h-1zM206,344h1v1h-1zM206,352h1v1h-1zM206,360h1v1h-1zM206,368h1v1h-1zM206,376h1v1h-1zM206,384h1v1h-1zM206,392h1v1h-1zM206,400h1v1h-1zM206,408h1v1h-1zM206,415h1v1h-1zM206,423h1v1h-1zM206,431h1v1h-1zM206,439h1v1h-1zM206,447h1v1h-1zM206,455h1v1h-1zM206,463h1v1h-1zM206,471h1v1h-1zM206,479h1v1h-1zM206,487h1v1h-1zM206,494h1v1h-1zM206,502h1v1h-1zM206,510h1v1h-1zM206,518h1v1h-1zM206,526h1v1h-1zM239,218h1v1h-1zM239,226h1v1h-1zM239,234h1v1h-1zM239,242h1v1h-1zM239,250h1v1h-1zM239,257h1v1h-1zM239,265h1v1h-1zM239,273h1v1h-1zM239,281h1v1h-1zM239,289h1v1h-1zM239,297h1v1h-1zM239,305h1v1h-1zM239,313h1v1h-1zM239,321h1v1h-1zM239,329h1v1h-1zM239,336h1v1h-1zM239,344h1v1h-1zM239,352h1v1h-1zM239,360h1v1h-1zM239,368h1v1h-1zM239,376h1v1h-1zM239,384h1v1h-1zM239,392h1v1h-1zM239,400h1v1h-1zM239,408h1v1h-1zM239,415h1v1h-1zM239,423h1v1h-1zM239,431h1v1h-1zM239,439h1v1h-1zM239,447h1v1h-1zM239,455h1v1h-1zM239,463h1v1h-1zM239,471h1v1h-1zM239,479h1v1h-1zM239,487h1v1h-1zM239,494h1v1h-1zM239,502h1v1h-1zM239,510h1v1h-1zM239,518h1v1h-1zM239,526h1v1h-1zM272,218h1v1h-1zM272,226h1v1h-1zM272,234h1v1h-1zM272,242h1v1h-1zM272,250h1v1h-1zM272,257h1v1h-1zM272,265h1v1h-1zM272,273h1v1h-1zM272,281h1v1h-1zM272,289h1v1h-1zM272,297h1v1h-1zM272,305h1v1h-1zM272,313h1v1h-1zM272,321h1v1h-1zM272,329h1v1h-1zM272,336h1v1h-1zM272,344h1v1h-1zM272,352h1v1h-1zM272,360h1v1h-1zM272,368h1v1h-1zM272,376h1v1h-1zM272,384h1v1h-1zM272,392h1v1h-1zM272,400h1v1h-1zM272,408h1v1h-1zM272,415h1v1h-1zM272,423h1v1h-1zM272,431h1v1h-1zM272,439h1v1h-1zM272,447h1v1h-1zM272,455h1v1h-1zM272,463h1v1h-1zM272,471h1v1h-1zM272,479h1v1h-1zM272,487h1v1h-1zM272,494h1v1h-1zM272,502h1v1h-1zM272,510h1v1h-1zM272,518h1v1h-1zM272,526h1v1h-1zM306,218h1v1h-1zM306,226h1v1h-1zM306,234h1v1h-1zM306,242h1v1h-1zM306,250h1v1h-1zM306,257h1v1h-1zM306,265h1v1h-1zM306,273h1v1h-1zM306,281h1v1h-1zM306,289h1v1h-1zM306,297h1v1h-1zM306,305h1v1h-1zM306,313h1v1h-1zM306,321h1v1h-1zM306,329h1v1h-1zM306,336h1v1h-1zM306,344h1v1h-1zM306,352h1v1h-1zM306,360h1v1h-1zM306,368h1v1h-1zM306,376h1v1h-1zM306,384h1v1h-1zM306,392h1v1h-1zM306,400h1v1h-1zM306,408h1v1h-1zM306,415h1v1h-1zM306,423h1v1h-1zM306,431h1v1h-1zM306,439h1v1h-1zM306,447h1v1h-1zM306,455h1v1h-1zM306,463h1v1h-1zM306,471h1v1h-1zM306,479h1v1h-1zM306,487h1v1h-1zM306,494h1v1h-1zM306,502h1v1h-1zM306,510h1v1h-1zM306,518h1v1h-1zM306,526h1v1h-1zM339,218h1v1h-1zM339,226h1v1h-1zM339,234h1v1h-1zM339,242h1v1h-1zM339,250h1v1h-1zM339,257h1v1h-1zM339,265h1v1h-1zM339,273h1v1h-1zM339,281h1v1h-1zM339,289h1v1h-1zM339,297h1v1h-1zM339,305h1v1h-1zM339,313h1v1h-1zM339,321h1v1h-1zM339,329h1v1h-1zM339,336h1v1h-1zM339,344h1v1h-1zM339,352h1v1h-1zM339,360h1v1h-1zM339,368h1v1h-1zM339,376h1v1h-1zM339,384h1v1h-1zM339,392h1v1h-1zM339,400h1v1h-1zM339,408h1v1h-1zM339,415h1v1h-1zM339,423h1v1h-1zM339,431h1v1h-1zM339,439h1v1h-1zM339,447h1v1h-1zM339,455h1v1h-1zM339,463h1v1h-1zM339,471h1v1h-1zM339,479h1v1h-1zM339,487h1v1h-1zM339,494h1v1h-1zM339,502h1v1h-1zM339,510h1v1h-1zM339,518h1v1h-1zM339,526h1v1h-1zM373,218h1v1h-1zM373,226h1v1h-1zM373,234h1v1h-1zM373,242h1v1h-1zM373,250h1v1h-1zM373,257h1v1h-1zM373,265h1v1h-1zM373,273h1v1h-1zM373,281h1v1h-1zM373,289h1v1h-1zM373,297h1v1h-1zM373,305h1v1h-1zM373,313h1v1h-1zM373,321h1v1h-1zM373,329h1v1h-1zM373,336h1v1h-1zM373,344h1v1h-1zM373,352h1v1h-1zM373,360h1v1h-1zM373,368h1v1h-1zM373,376h1v1h-1zM373,384h1v1h-1zM373,392h1v1h-1zM373,400h1v1h-1zM373,408h1v1h-1zM373,415h1v1h-1zM373,423h1v1h-1zM373,431h1v1h-1zM373,439h1v1h-1zM373,447h1v1h-1zM373,455h1v1h-1zM373,463h1v1h-1zM373,471h1v1h-1zM373,479h1v1h-1zM373,487h1v1h-1zM373,494h1v1h-1zM373,502h1v1h-1zM373,510h1v1h-1zM373,518h1v1h-1zM373,526h1v1h-1z" fill="#c8c8c8"/><polyline points="72.00,375.40 72.25,375.10 72.50,374.87 72.75,374.70 73.00,374.59 73.25,374.53 73.50,374.50 73.75,374.50 74.00,374.48 74.25,374.43 74.50,374.34 74.75,374.19 75.00,373.98 75.25,373.70 75.50,373.35 75.75,372.92 76.00,372.42 76.25,371.83 76.50,371.15 76.75,370.39 77.00,369.53 77.25,368.58 77.50,367.55 77.75,366.42 78.00,365.20 78.25,363.89 78.50,362.49 78.75,361.00 79.00,359.43 79.25,357.77 79.50,356.04 79.75,354.22 80.00,352.34 80.25,350.38 80.50,348.36 80.75,346.28 81.00,344.14 81.25,341.96 81.50,339.72 81.75,337.45 82.00,335.14 82.25,332.81 82.50,330.45 82.75,328.08 83.00,325.70 83.25,323.31 83.50,320.93 83.75,318.56 84.00,316.21 84.25,313.88 84.50,311.58 84.75,309.32 85.00,307.10 85.25,304.93 85.50,302.82 85.75,300.77 86.00,298.78 86.25,296.88 86.50,295.05 86.75,293.31 87.00,291.65 87.25,290.10 87.50,288.64 87.75,287.29 88.00,286.04 88.25,284.91 88.50,283.89 88.75,283.00 89.00,282.22 89.25,281.57 89.50,281.04 89.75,280.64 90.00,280.37 90.25,280.22 90.50,280.21 90.75,280.33 91.00,280.57 91.25,280.95 91.50,281.45 91.75,282.08 92.00,282.83 92.25,283.70 92.50,284.70 92.75,285.81 93.00,287.03 93.25,288.36 93.50,289.80 93.75,291.33 94.00,292.97 94.25,294.69 94.50,296.50 94.75,298.40 95.00,300.36 95.25,302.40 95.50,304.50 95.75,306.66 96.00,308.87 96.25,311.12 96.50,313.41 96.75,315.74 97.00,318.09 97.25,320.46 97.50,322.83 97.75,325.22 98.00,327.60 98.25,329.98 98.50,332.34 98.75,334.68 99.00,336.99 99.25,339.27 99.50,341.51 99.75,343.71 100.00,345.86 100.25,347.95 100.50,349.98 100.75,351.95 101.00,353.85 101.25,355.68 101.50,357.43 101.75,359.10 102.00,360.69 102.25,362.20 102.50,363.62 102.75,364.94 103.00,366.18 103.25,367.33 103.50,368.38 103.75,369.35 104.00,370.22 104.25,371.00 104.50,371.70 104.75,372.31 105.00,372.83 105.25,373.27 105.50,373.64 105.75,373.93 106.00,374.15 106.25,374.31 106.50,374.42 106.75,374.48 107.00,374.50 107.25,374.50 107.50,374.52 107.75,374.57 108.00,374.68 108.25,374.83 108.50,375.05 108.75,375.33 109.00,375.69 109.25,376.12 109.50,376.64 109.75,377.24 110.00,377.92 110.25,378.70 110.50,379.56 110.75,380.51 111.00,381.56 111.25,382.70 111.50,383.93 111.75,385.25 112.00,386.66 112.25,388.15 112.50,389.73 112.75,391.40 113.00,393.14 113.25,394.96 113.50,396.85 113.75,398.82 114.00,400.84 114.25,402.93 114.50,405.07 114.75,407.27 115.00,409.50 115.25,411.78 115.50,414.09 115.75,416.43 116.00,418.79 116.25,421.16 116.50,423.54 116.75,425.93 117.00,428.31 117.25,430.68 117.50,433.03 117.75,435.35 118.00,437.65 118.25,439.91 118.50,442.12 118.75,444.29 119.00,446.39 119.25,448.44 119.50,450.41 119.75,452.31 120.00,454.13 120.25,455.86 120.50,457.51 120.75,459.05 121.00,460.50 121.25,461.84 121.50,463.08 121.75,464.20 122.00,465.20 122.25,466.09 122.50,466.85 122.75,467.49 123.00,468.01 123.25,468.40 123.50,468.65 123.75,468.78 124.00,468.78 124.25,468.65 124.50,468.40 124.75,468.01 125.00,467.49 125.25,466.85 125.50,466.09 125.75,465.20 126.00,464.20 126.25,463.08 126.50,461.84 126.75,460.50 127.00,459.05 127.25,457.51 127.50,455.86 127.75,454.13 128.00,452.31 128.25,450.41 128.50,448.44 128.75,446.39 129.00,444.29 129.25,442.12 129.50,439.91 129.75,437.65 130.00,435.35 130.25,433.03 130.50,430.68 130.75,428.31 131.00,425.93 131.25,423.54 131.50,421.16 131.75,418.79 132.00,416.43 132.25,414.09 132.50,411.78 132.75,409.50 133.00,407.27 133.25,405.07 133.50,402.93 133.75,400.84 134.00,398.82 134.25,396.85 134.50,394.96 134.75,393.14 135.00,391.40 135.25,389.73 135.50,388.15 135.75,386.66 136.00,385.25 136.25,383.93 136.50,382.70 136.75,381.56 137.00,380.51 137.25,379.56 137.50,378.70 137.75,377.92 138.00,377.24 138.25,376.64 138.50,376.12 138.75,375.69 139.00,375.33 139.25,375.05 139.50,374.83 139.75,374.68 140.00,374.57 140.25,374.52 140.50,374.50 140.75,374.50 141.00,374.48 141.25,374.42 141.50,374.31 141.75,374.15 142.00,373.93 142.25,373.64 142.50,373.27 142.75,372.83 143.00,372.31 143.25,371.70 143.50,371.00 143.75,370.22 144.00,369.35 144.25,368.38 144.50,367.33 144.75,366.18 145.00,364.94 145.25,363.62 145.50,362.20 145.75,360.69 146.00,359.10 146.25,357.43 146.50,355.68 146.75,353.85 147.00,351.95 147.25,349.98 147.50,347.95 147.75,345.86 148.00,343.71 148.25,341.51 148.50,339.27 148.75,336.99 149.00,334.68 149.25,332.34 149.50,329.98 149.75,327.60 150.00,325.22 150.25,322.83 150.50,320.46 150.75,318.09 151.00,315.74 151.25,313.41 151.50,311.12 151.75,308.87 152.00,306.66 152.25,304.50 152.50,302.40 152.75,300.36 153.00,298.40 153.25,296.50 153.50,294.69 153.75,292.97 154.00,291.33 154.25,289.80 154.50,288.36 154.75,287.03 155.00,285.81 155.25,284.70 155.50,283.70 155.75,282.83 156.00,282.08 156.25,281.45 156.50,280.95 156.75,280.57 157.00,280.33 157.25,280.21 157.50,280.22 157.75,280.37 158.00,280.64 158.25,281.04 158.50,281.57 158.75,282.22 159.00,283.00 159.25,283.89 159.50,284.91 159.75,286.04 160.00,287.29 160.25,288.64 160.50,290.10 160.75,291.65 161.00,293.31 161.25,295.05 161.50,296.88 161.75,298.78 162.00,300.77 162.25,302.82 162.50,304.93 162.75,307.10 163.00,309.32 163.25,311.58 163.50,313.88 163.75,316.21 164.00,318.56 164.25,320.93 164.50,323.31 164.75,325.70 165.00,328.08 165.25,330.45 165.50,332.81 165.75,335.14 166.00,337.45 166.25,339.72 166.50,341.96 166.75,344.14 167.00,346.28 167.25,348.36 167.50,350.38 167.75,352.34 168.00,354.22 168.25,356.04 168.50,357.77 168.75,359.43 169.00,361.00 169.25,362.49 169.50,363.89 169.75,365.20 170.00,366.42 170.25,367.55 170.50,368.58 170.75,369.53 171.00,370.39 171.25,371.15 171.50,371.83 171.75,372.42 172.00,372.92 172.25,373.35 172.50,373.70 172.75,373.98 173.00,374.19 173.25,374.34 173.50,374.43 173.75,374.48 174.00,374.50 174.25,374.50 174.50,374.53 174.75,374.59 175.00,374.70 175.25,374.87 175.50,375.10 175.75,375.40 176.00,375.77 176.25,376.22 176.50,376.75 176.75,377.37 177.00,378.07 177.25,378.86 177.50,379.74 177.75,380.72 178.00,381.78 178.25,382.94 178.50,384.18 178.75,385.52 179.00,386.95 179.25,388.46 179.50,390.06 179.75,391.74 180.00,393.50 180.25,395.33 180.50,397.24 180.75,399.22 181.00,401.26 181.25,403.35 181.50,405.51 181.75,407.71 182.00,409.96 182.25,412.24 182.50,414.56 182.75,416.90 183.00,419.26 183.25,421.64 183.50,424.02 183.75,426.40 184.00,428.78 184.25,431.15 184.50,433.49 184.75,435.82 185.00,438.10 185.25,440.35 185.50,442.56 185.75,444.71 186.00,446.81 186.25,448.84 186.50,450.80 186.75,452.68 187.00,454.48 187.25,456.20 187.50,457.82 187.75,459.35 188.00,460.78 188.25,462.10 188.50,463.31 188.75,464.41 189.00,465.39 189.25,466.25 189.50,466.99 189.75,467.61 190.00,468.10 190.25,468.46 190.50,468.69 190.75,468.79 191.00,468.77 191.25,468.61 191.50,468.33 191.75,467.91 192.00,467.37 192.25,466.71 192.50,465.92 192.75,465.01 193.00,463.98 193.25,462.84 193.50,461.58 193.75,460.22 194.00,458.75 194.25,457.19 194.50,455.52 194.75,453.77 195.00,451.94 195.25,450.02 195.50,448.03 195.75,445.98 196.00,443.86 196.25,441.68 196.50,439.46 196.75,437.19 197.00,434.89 197.25,432.56 197.50,430.20 197.75,427.83 198.00,425.45 198.25,423.07 198.50,420.68 198.75,418.31 199.00,415.96 199.25,413.63 199.50,411.32 199.75,409.05 200.00,406.82 200.25,404.64 200.50,402.51 200.75,400.43 201.00,398.42 201.25,396.47 201.50,394.59 201.75,392.79 202.00,391.06 202.25,389.41 202.50,387.85 202.75,386.37 203.00,384.98 203.25,383.67 203.50,382.46 203.75,381.34 204.00,380.32 204.25,379.38 204.50,378.53 204.75,377.78 205.00,377.11 205.25,376.53 205.50,376.03 205.75,375.61 206.00,375.27 206.25,375.00 206.50,374.79 206.75,374.65 207.00,374.56 207.25,374.51 207.50,374.50 207.75,374.50 208.00,374.47 208.25,374.40 208.50,374.28 208.75,374.11 209.00,373.87 209.25,373.57 209.50,373.19 209.75,372.73 210.00,372.19 210.25,371.57 210.50,370.85 210.75,370.05 211.00,369.16 211.25,368.18 211.50,367.11 211.75,365.94 212.00,364.69 212.25,363.34 212.50,361.90 212.75,360.38 213.00,358.78 213.25,357.09 213.50,355.32 213.75,353.48 214.00,351.56 214.25,349.58 214.50,347.54 214.75,345.43 215.00,343.27 215.25,341.07 215.50,338.82 215.75,336.53 216.00,334.21 216.25,331.87 216.50,329.50 216.75,327.13 217.00,324.74 217.25,322.36 217.50,319.98 217.75,317.62 218.00,315.27 218.25,312.95 218.50,310.67 218.75,308.42 219.00,306.22 219.25,304.08 219.50,301.99 219.75,299.96 220.00,298.01 220.25,296.14 220.50,294.34 220.75,292.63 221.00,291.02 221.25,289.50 221.50,288.09 221.75,286.78 222.00,285.58 222.25,284.49 222.50,283.52 222.75,282.67 223.00,281.94 223.25,281.34 223.50,280.86 223.75,280.51 224.00,280.29 224.25,280.20 224.50,280.24 224.75,280.41 225.00,280.71 225.25,281.13 225.50,281.69 225.75,282.36 226.00,283.17 226.25,284.09 226.50,285.13 226.75,286.28 227.00,287.55 227.25,288.92 227.50,290.40 227.75,291.98 228.00,293.65 228.25,295.41 228.50,297.25 228.75,299.17 229.00,301.17 229.25,303.23 229.50,305.36 229.75,307.54 230.00,309.77 230.25,312.04 230.50,314.34 230.75,316.68 231.00,319.03 231.25,321.41 231.50,323.79 231.75,326.17 232.00,328.55 232.25,330.92 232.50,333.28 232.75,335.61 233.00,337.91 233.25,340.17 233.50,342.40 233.75,344.58 234.00,346.70 234.25,348.77 234.50,350.78 234.75,352.72 235.00,354.59 235.25,356.39 235.50,358.11 235.75,359.75 236.00,361.31 236.25,362.78 236.50,364.16 236.75,365.45 237.00,366.65 237.25,367.76 237.50,368.78 237.75,369.71 238.00,370.55 238.25,371.29 238.50,371.95 238.75,372.52 239.00,373.02 239.25,373.43 239.50,373.76 239.75,374.02 240.00,374.22 240.25,374.36 240.50,374.45 240.75,374.49 241.00,374.50 241.25,374.51 241.50,374.54 241.75,374.61 242.00,374.73 242.25,374.91 242.50,375.15 242.75,375.47 243.00,375.85 243.25,376.32 243.50,376.87 243.75,377.50 244.00,378.22 244.25,379.03 244.50,379.93 244.75,380.92 245.00,382.01 245.25,383.18 245.50,384.44 245.75,385.80 246.00,387.24 246.25,388.77 246.50,390.39 246.75,392.08 247.00,393.86 247.25,395.71 247.50,397.63 247.75,399.62 248.00,401.67 248.25,403.78 248.50,405.94 248.75,408.16 249.00,410.41 249.25,412.70 249.50,415.02 249.75,417.37 250.00,419.73 250.25,422.11 250.50,424.50 250.75,426.88 251.00,429.26 251.25,431.62 251.50,433.96 251.75,436.28 252.00,438.56 252.25,440.80 252.50,442.99 252.75,445.13 253.00,447.22 253.25,449.23 253.50,451.18 253.75,453.05 254.00,454.83 254.25,456.53 254.50,458.14 254.75,459.64 255.00,461.05 255.25,462.35 255.50,463.54 255.75,464.61 256.00,465.57 256.25,466.41 256.50,467.12 256.75,467.71 257.00,468.18 257.25,468.51 257.50,468.72 257.75,468.80 258.00,468.75 258.25,468.57 258.50,468.26 258.75,467.82 259.00,467.25 259.25,466.56 259.50,465.75 259.75,464.81 260.00,463.76 260.25,462.60 260.50,461.32 260.75,459.93 261.00,458.45 261.25,456.86 261.50,455.18 261.75,453.41 262.00,451.56 262.25,449.63 262.50,447.63 262.75,445.56 263.00,443.43 263.25,441.24 263.50,439.01 263.75,436.74 264.00,434.43 264.25,432.09 264.50,429.73 264.75,427.36 265.00,424.97 265.25,422.59 265.50,420.21 265.75,417.84 266.00,415.49 266.25,413.16 266.50,410.86 266.75,408.60 267.00,406.38 267.25,404.21 267.50,402.09 267.75,400.02 268.00,398.02 268.25,396.09 268.50,394.22 268.75,392.43 269.00,390.72 269.25,389.09 269.50,387.54 269.75,386.08 270.00,384.71 270.25,383.43 270.50,382.23 270.75,381.13 271.00,380.12 271.25,379.20 271.50,378.38 271.75,377.64 272.00,376.99 272.25,376.42 272.50,375.94 272.75,375.54 273.00,375.21 273.25,374.95 273.50,374.76 273.75,374.63 274.00,374.55 274.25,374.51 274.50,374.50 274.75,374.49 275.00,374.46 275.25,374.38 275.50,374.25 275.75,374.07 276.00,373.82 276.25,373.50 276.50,373.10 276.75,372.63 277.00,372.07 277.25,371.43 277.50,370.70 277.75,369.88 278.00,368.97 278.25,367.97 278.50,366.88 278.75,365.70 279.00,364.42 279.25,363.06 279.50,361.61 279.75,360.07 280.00,358.45 280.25,356.74 280.50,354.96 280.75,353.10 281.00,351.17 281.25,349.18 281.50,347.12 281.75,345.00 282.00,342.84 282.25,340.62 282.50,338.36 282.75,336.07 283.00,333.74 283.25,331.40 283.50,329.03 283.75,326.65 284.00,324.26 284.25,321.88 284.50,319.51 284.75,317.15 285.00,314.81 285.25,312.49 285.50,310.22 285.75,307.98 286.00,305.79 286.25,303.65 286.50,301.58 286.75,299.57 287.00,297.63 287.25,295.77 287.50,293.99 287.75,292.30 288.00,290.71 288.25,289.21 288.50,287.82 288.75,286.53 289.00,285.35 289.25,284.29 289.50,283.34 289.75,282.51 290.00,281.81 290.25,281.23 290.50,280.78 290.75,280.46 291.00,280.26 291.25,280.20 291.50,280.26 291.75,280.46 292.00,280.78 292.25,281.23 292.50,281.81 292.75,282.51 293.00,283.34 293.25,284.29 293.50,285.35 293.75,286.53 294.00,287.82 294.25,289.21 294.50,290.71 294.75,292.30 295.00,293.99 295.25,295.77 295.50,297.63 295.75,299.57 296.00,301.58 296.25,303.65 296.50,305.79 296.75,307.98 297.00,310.22 297.25,312.49 297.50,314.81 297.75,317.15 298.00,319.51 298.25,321.88 298.50,324.26 298.75,326.65 299.00,329.03 299.25,331.40 299.50,333.74 299.75,336.07 300.00,338.36 300.25,340.62 300.50,342.84 300.75,345.00 301.00,347.12 301.25,349.18 301.50,351.17 301.75,353.10 302.00,354.96 302.25,356.74 302.50,358.45 302.75,360.07 303.00,361.61 303.25,363.06 303.50,364.42 303.75,365.70 304.00,366.88 304.25,367.97 304.50,368.97 304.75,369.88 305.00,370.70 305.25,371.43 305.50,372.07 305.75,372.63 306.00,373.10 306.25,373.50 306.50,373.82 306.75,374.07 307.00,374.25 307.25,374.38 307.50,374.46 307.75,374.49 308.00,374.50 308.25,374.51 308.50,374.55 308.75,374.63 309.00,374.76 309.25,374.95 309.50,375.21 309.75,375.54 310.00,375.94 310.25,376.42 310.50,376.99 310.75,377.64 311.00,378.38 311.25,379.20 311.50,380.12 311.75,381.13 312.00,382.23 312.25,383.43 312.50,384.71 312.75,386.08 313.00,387.54 313.25,389.09 313.50,390.72 313.75,392.43 314.00,394.22 314.25,396.09 314.50,398.02 314.75,400.02 315.00,402.09 315.25,404.21 315.50,406.38 315.75,408.60 316.00,410.86 316.25,413.16 316.50,415.49 316.75,417.84 317.00,420.21 317.25,422.59 317.50,424.97 317.75,427.36 318.00,429.73 318.25,432.09 318.50,434.43 318.75,436.74 319.00,439.01 319.25,441.24 319.50,443.43 319.75,445.56 320.00,447.63 320.25,449.63 320.50,451.56 320.75,453.41 321.00,455.18 321.25,456.86 321.50,458.45 321.75,459.93 322.00,461.32 322.25,462.60 322.50,463.76 322.75,464.81 323.00,465.75 323.25,466.56 323.50,467.25 323.75,467.82 324.00,468.26 324.25,468.57 324.50,468.75 324.75,468.80 325.00,468.72 325.25,468.51 325.50,468.18 325.75,467.71 326.00,467.12 326.25,466.41 326.50,465.57 326.75,464.61 327.00,463.54 327.25,462.35 327.50,461.05 327.75,459.64 328.00,458.14 328.25,456.53 328.50,454.83 328.75,453.05 329.00,451.18 329.25,449.23 329.50,447.22 329.75,445.13 330.00,442.99 330.25,440.80 330.50,438.56 330.75,436.28 331.00,433.96 331.25,431.62 331.50,429.26 331.75,426.88 332.00,424.50 332.25,422.11 332.50,419.73 332.75,417.37 333.00,415.02 333.25,412.70 333.50,410.41 333.75,408.16 334.00,405.94 334.25,403.78 334.50,401.67 334.75,399.62 335.00,397.63 335.25,395.71 335.50,393.86 335.75,392.08 336.00,390.39 336.25,388.77 336.50,387.24 336.75,385.80 337.00,384.44 337.25,383.18 337.50,382.01 337.75,380.92 338.00,379.93 338.25,379.03 338.50,378.22 338.75,377.50 339.00,376.87 339.25,376.32 339.50,375.85 339.75,375.47 340.00,375.15 340.25,374.91 340.50,374.73 340.75,374.61 341.00,374.54 341.25,374.51 341.50,374.50 341.75,374.49 342.00,374.45 342.25,374.36 342.50,374.22 342.75,374.02 343.00,373.76 343.25,373.43 343.50,373.02 343.75,372.52 344.00,371.95 344.25,371.29 344.50,370.55 344.75,369.71 345.00,368.78 345.25,367.76 345.50,366.65 345.75,365.45 346.00,364.16 346.25,362.78 346.50,361.31 346.75,359.75 347.00,358.11 347.25,356.39 347.50,354.59 347.75,352.72 348.00,350.78 348.25,348.77 348.50,346.70 348.75,344.58 349.00,342.40 349.25,340.17 349.50,337.91 349.75,335.61 350.00,333.28 350.25,330.92 350.50,328.55 350.75,326.17 351.00,323.79 351.25,321.41 351.50,319.03 351.75,316.68 352.00,314.34 352.25,312.04 352.50,309.77 352.75,307.54 353.00,305.36 353.25,303.23 353.50,301.17 353.75,299.17 354.00,297.25 354.25,295.41 354.50,293.65 354.75,291.98 355.00,290.40 355.25,288.92 355.50,287.55 355.75,286.28 356.00,285.13 356.25,284.09 356.50,283.17 356.75,282.36 357.00,281.69 357.25,281.13 357.50,280.71 357.75,280.41 358.00,280.24 358.25,280.20 358.50,280.29 358.75,280.51 359.00,280.86 359.25,281.34 359.50,281.94 359.75,282.67 360.00,283.52 360.25,284.49 360.50,285.58 360.75,286.78 361.00,288.09 361.25,289.50 361.50,291.02 361.75,292.63 362.00,294.34 362.25,296.14 362.50,298.01 362.75,299.96 363.00,301.99 363.25,304.08 363.50,306.22 363.75,308.42 364.00,310.67 364.25,312.95 364.50,315.27 364.75,317.62 365.00,319.98 365.25,322.36 365.50,324.74 365.75,327.13 366.00,329.50 366.25,331.87 366.50,334.21 366.75,336.53 367.00,338.82 367.25,341.07 367.50,343.27 367.75,345.43 368.00,347.54 368.25,349.58 368.50,351.56 368.75,353.48 369.00,355.32 369.25,357.09 369.50,358.78 369.75,360.38 370.00,361.90 370.25,363.34 370.50,364.69 370.75,365.94 371.00,367.11 371.25,368.18 371.50,369.16 371.75,370.05 372.00,370.85 372.25,371.57 372.50,372.19 372.75,372.73 373.00,373.19 373.25,373.57 373.50,373.87 373.75,374.11 374.00,374.28 374.25,374.40 374.50,374.47 374.75,374.50 375.00,374.50 375.25,374.51 375.50,374.56 375.75,374.65 376.00,374.79 376.25,375.00 376.50,375.27 376.75,375.61 377.00,376.03 377.25,376.53 377.50,377.11 377.75,377.78 378.00,378.53 378.25,379.38 378.50,380.32 378.75,381.34 379.00,382.46 379.25,383.67 379.50,384.98 379.75,386.37 380.00,387.85 380.25,389.41 380.50,391.06 380.75,392.79 381.00,394.59 381.25,396.47 381.50,398.42 381.75,400.43 382.00,402.51 382.25,404.64 382.50,406.82 382.75,409.05 383.00,411.32 383.25,413.63 383.50,415.96 383.75,418.31 384.00,420.68 384.25,423.07 384.50,425.45 384.75,427.83 385.00,430.20 385.25,432.56 385.50,434.89 385.75,437.19 386.00,439.46 386.25,441.68 386.50,443.86 386.75,445.98 387.00,448.03 387.25,450.02 387.50,451.94 387.75,453.77 388.00,455.52 388.25,457.19 388.50,458.75 388.75,460.22 389.00,461.58 389.25,462.84 389.50,463.98 389.75,465.01 390.00,465.92 390.25,466.71 390.50,467.37 390.75,467.91 391.00,468.33 391.25,468.61 391.50,468.77 391.75,468.79 392.00,468.69 392.25,468.46 392.50,468.10 392.75,467.61 393.00,466.99 393.25,466.25 393.50,465.39 393.75,464.41 394.00,463.31 394.25,462.10 394.50,460.78 394.75,459.35 395.00,457.82 395.25,456.20 395.50,454.48 395.75,452.68 396.00,450.80 396.25,448.84 396.50,446.81 396.75,444.71 397.00,442.56 397.25,440.35 397.50,438.10 397.75,435.82 398.00,433.49 398.25,431.15 398.50,428.78 398.75,426.40 399.00,424.02 399.25,421.64 399.50,419.26 399.75,416.90 400.00,414.56 400.25,412.24 400.50,409.96 400.75,407.71 401.00,405.51 401.25,403.35 401.50,401.26 401.75,399.22 402.00,397.24 402.25,395.33 402.50,393.50 402.75,391.74 403.00,390.06 403.25,388.46 403.50,386.95 403.75,385.52 404.00,384.18 404.25,382.94 404.50,381.78 404.75,380.72 405.00,379.74 405.25,378.86 405.50,378.07" fill="none" stroke="#00ff00" stroke-width="1" shape-rendering="crispEdges"/></svg>
<svg style="left:0px;top:0px" width="884" height="592" viewBox="0 0 884 592"><path d="M61.5,391.5 H65 V376.5 H69" stroke="#e8e8e8" stroke-width="2" fill="none"/></svg>
<div style="position:absolute;left:72px;top:534px;width:334px;height:16px;background:#000"></div>
<div style="position:absolute;left:72px;top:534px;width:15px;height:15px;background:#f0f0f0;border-top:1px solid #fff;border-left:1px solid #fff;border-right:1px solid #a0a0a0;border-bottom:1px solid #a0a0a0"></div>
<div style="position:absolute;left:87px;top:534px;width:302px;height:15px;background:#f0f0f0;border-top:1px solid #fff;border-left:1px solid #fff;border-right:1px solid #a0a0a0;border-bottom:1px solid #a0a0a0"></div>
<div style="position:absolute;left:390px;top:534px;width:15px;height:15px;background:#f0f0f0;border-top:1px solid #fff;border-left:1px solid #fff;border-right:1px solid #a0a0a0;border-bottom:1px solid #a0a0a0"></div>
<svg style="left:0px;top:0px" width="884" height="592" viewBox="0 0 884 592"><polygon points="395,537.7 401.3,541.2 395,544" fill="#000"/><polygon points="75.8,541.5 82,537.9 82,543.8" fill="#000"/><polygon points="83.2,541.7 87.65,535.6 94,541.7" fill="#000"/><rect x="86.6" y="541.5" width="1.6" height="8" fill="#000"/></svg>
<div style="position:absolute;left:18px;top:550px;width:428px;height:21px;background:#000;border-top:1px solid #fff;border-bottom:2px solid #a0a0a0;border-right:1px solid #a0a0a0"></div>
<div class="t" style="left:32.0px;top:555.5px;width:80px;text-align:center;font-size:11px;color:#fff">0 s</div>
<div class="t" style="left:98.80000000000001px;top:555.5px;width:80px;text-align:center;font-size:11px;color:#fff">20.0 &#181;s</div>
<div class="t" style="left:165.6px;top:555.5px;width:80px;text-align:center;font-size:11px;color:#fff">40.0 &#181;s</div>
<div class="t" style="left:232.39999999999998px;top:555.5px;width:80px;text-align:center;font-size:11px;color:#fff">60.0 &#181;s</div>
<div class="t" style="left:299.2px;top:555.5px;width:80px;text-align:center;font-size:11px;color:#fff">80.0 &#181;s</div>
<div class="t" style="left:366.0px;top:555.5px;width:80px;text-align:center;font-size:11px;color:#fff">100.0 &#181;s</div>
<div style="position:absolute;left:448px;top:176px;width:3px;height:397px;background:#a8a8a8"></div>
<div style="position:absolute;left:451px;top:178px;width:431px;height:196px;background:#f0f0f0;border-left:1px solid #fff"></div>
<div style="position:absolute;left:454px;top:181px;width:43px;height:167px;background:#000"></div>
<div style="position:absolute;left:454px;top:181px;width:43px;height:14px;background:#00ffff"></div>
<div style="position:absolute;left:497px;top:181px;width:2px;height:168px;background:#909090"></div>
<div style="position:absolute;left:454px;top:348px;width:44px;height:2px;background:#909090"></div>
<div class="t" style="left:455.5px;top:210.5px;width:40.5px;height:15px;background:#00ffff;border-radius:4px;color:#000;font-size:11px;line-height:15px;text-align:center">20.000</div>
<div class="t" style="left:455px;top:327.5px;width:41px;height:15px;background:#00ffff;border-radius:4px;color:#000;font-size:11px;line-height:15px;text-align:center">-20.000</div>
<div class="t" style="left:434px;top:243.0px;width:60px;text-align:right;font-size:11px;color:#00ffff">10.000</div>
<div class="t" style="left:434px;top:272.5px;width:60px;text-align:right;font-size:11px;color:#00ffff">0.000</div>
<div class="t" style="left:434px;top:302.0px;width:60px;text-align:right;font-size:11px;color:#00ffff">-10.000</div>
<div style="position:absolute;left:498px;top:180px;width:344px;height:37px;background:#fff;border-top:1px solid #d0d0d0;border-left:1px solid #a0a0a0;border-right:1px solid #a0a0a0;border-bottom:2px solid #a8a8a8"></div>
<svg style="left:507px;top:187px" width="24" height="24" viewBox="0 0 24 24"><rect x="0" y="0" width="24" height="23.5" fill="#000"/><path d="M2.5,12.5 L11,4 L21.5,8.5" stroke="#00ff00" stroke-width="2" fill="none"/><path d="M11.5,2 V22" stroke="#fff" stroke-width="1"/><text x="2.3" y="21" font-family="Liberation Sans" font-size="9" fill="#ddd">0</text></svg>
<div style="position:absolute;left:536px;top:187px;width:1px;height:24px;background:#a0a0a0"></div>
<svg style="left:607px;top:187px" width="25" height="24" viewBox="0 0 25 24"><rect x="0.8" y="0.8" width="23" height="13.5" rx="2.5" fill="#ffff90" stroke="#000" stroke-width="1.4"/><text x="3" y="6" font-family="Liberation Sans" font-size="4.5" fill="#555">Comment</text><text x="3" y="11.5" font-family="Liberation Sans" font-size="4.5" fill="#555">Text</text><rect x="10" y="12.5" width="4" height="2.2" fill="#ff0000"/><path d="M13,14.5 L21,21.5" stroke="#000" stroke-width="1.2"/><polygon points="23.5,23.5 17,23 23,17" fill="#000"/></svg>
<svg style="left:638px;top:188px" width="24" height="22" viewBox="0 0 24 22"><rect x="0.8" y="4.5" width="22.5" height="13" rx="3" fill="#f4f4f4" stroke="#c8c8c8" stroke-width="1.3"/><path d="M2,1 L22,21 M22,1 L2,21" stroke="#c4c4c4" stroke-width="2.6"/></svg>
<div style="position:absolute;left:667.5px;top:184px;width:1px;height:30px;background:#a0a0a0"></div>
<svg style="left:675px;top:187px" width="24" height="24" viewBox="0 0 24 24"><rect x="0" y="0" width="24" height="23.5" fill="#000"/><rect x="2" y="3" width="3" height="3" fill="#00ff00"/><rect x="2" y="9" width="3" height="3" fill="#00ffff"/><text x="6.5" y="7" font-family="Liberation Sans" font-size="6" fill="#bbb">Ch1</text><text x="6.5" y="12.8" font-family="Liberation Sans" font-size="6" fill="#bbb">Ch2</text></svg>
<svg style="left:706px;top:187px" width="24" height="24" viewBox="0 0 24 24"><rect x="0" y="0" width="24" height="23.5" fill="#000"/><path d="M1,12 C3,8 5,3 7.5,3 C10,3 12,9 14,12 C15.5,14 18,14 19.5,13 L22.5,10.5" stroke="#00ff00" stroke-width="1.8" fill="none"/><path d="M1,14.5 C3,18 5,20.5 8,20.5 C11,20.5 13,15 15,13.8 C17,12.8 20,14 22.5,17" stroke="#00ffff" stroke-width="1.8" fill="none"/></svg>
<svg style="left:737px;top:187px" width="24" height="24" viewBox="0 0 24 24"><rect x="0.5" y="0.5" width="23" height="23" fill="#fff" stroke="#808080" stroke-width="1"/><rect x="1" y="1" width="22" height="3.5" fill="#e0e0e0"/><path d="M0.5,4.8 h23" stroke="#808080" stroke-width="1"/><rect x="15" y="2" width="1.8" height="1.8" fill="#999"/><rect x="18" y="2" width="1.8" height="1.8" fill="#999"/><rect x="21" y="2" width="1.8" height="1.8" fill="#f06060"/><rect x="2" y="13" width="11" height="8.5" fill="#000"/><path d="M3,18 C5,13 7,13 8,17 C9,20 11,19 12,15" stroke="#00ff00" stroke-width="1" fill="none"/><path d="M14.5,11.5 L20,7" stroke="#000" stroke-width="1.2"/><polygon points="21,6 16.5,6.5 20.5,10" fill="#000"/></svg>
<svg style="left:768px;top:187px" width="24" height="24" viewBox="0 0 24 24"><ellipse cx="16.5" cy="18.5" rx="6" ry="3.8" fill="none" stroke="#e8e8e8" stroke-width="0.8" stroke-dasharray="1.5 1"/><polygon points="0,0.2 3.6,0.2 9.7,6.5 4.5,11.4 0,7.2" fill="#e86c00"/><polygon points="0,0.2 3.6,0.2 9.7,6.5 7,9 0.5,3" fill="#ffa000"/><polygon points="0,0.2 3.6,0.2 9.7,6.5 4.5,11.4 0,7.2" fill="none" stroke="#000" stroke-width="0.9"/><polygon points="9.7,6.5 14.9,11.4 9.7,16.6 4.5,11.4" fill="#c4c4c4" stroke="#000" stroke-width="1.2"/><polygon points="14.9,11.4 16.8,14.5 12.3,18.8 9.7,16.6" fill="#b02800"/></svg>
<svg style="left:800px;top:188px" width="22" height="22" viewBox="0 0 22 22"><polygon points="0.8,4.1 4.1,0.8 11,7.7 17.9,0.8 21.2,4.1 14.3,11 21.2,17.9 17.9,21.2 11,14.3 4.1,21.2 0.8,17.9 7.7,11" fill="#f48a8a" stroke="#e02828" stroke-width="1" stroke-linejoin="round"/></svg>
<div class="t" style="left:826.5px;top:191px;font-family:'Liberation Serif',serif;font-weight:bold;font-size:17px;color:#000">2</div>
<div style="position:absolute;left:499px;top:217px;width:343px;height:118px;background:#000"></div>
<svg style="left:0px;top:0px" width="884" height="592" viewBox="0 0 884 592"><path d="M499,232h1v1h-1zM506,232h1v1h-1zM513,232h1v1h-1zM520,232h1v1h-1zM526,232h1v1h-1zM533,232h1v1h-1zM540,232h1v1h-1zM547,232h1v1h-1zM554,232h1v1h-1zM561,232h1v1h-1zM568,232h1v1h-1zM574,232h1v1h-1zM581,232h1v1h-1zM588,232h1v1h-1zM595,232h1v1h-1zM602,232h1v1h-1zM609,232h1v1h-1zM616,232h1v1h-1zM622,232h1v1h-1zM629,232h1v1h-1zM636,232h1v1h-1zM643,232h1v1h-1zM650,232h1v1h-1zM657,232h1v1h-1zM664,232h1v1h-1zM670,232h1v1h-1zM677,232h1v1h-1zM684,232h1v1h-1zM691,232h1v1h-1zM698,232h1v1h-1zM705,232h1v1h-1zM712,232h1v1h-1zM719,232h1v1h-1zM725,232h1v1h-1zM732,232h1v1h-1zM739,232h1v1h-1zM746,232h1v1h-1zM753,232h1v1h-1zM760,232h1v1h-1zM767,232h1v1h-1zM773,232h1v1h-1zM780,232h1v1h-1zM787,232h1v1h-1zM794,232h1v1h-1zM801,232h1v1h-1zM808,232h1v1h-1zM815,232h1v1h-1zM821,232h1v1h-1zM828,232h1v1h-1zM835,232h1v1h-1zM499,247h1v1h-1zM506,247h1v1h-1zM513,247h1v1h-1zM520,247h1v1h-1zM526,247h1v1h-1zM533,247h1v1h-1zM540,247h1v1h-1zM547,247h1v1h-1zM554,247h1v1h-1zM561,247h1v1h-1zM568,247h1v1h-1zM574,247h1v1h-1zM581,247h1v1h-1zM588,247h1v1h-1zM595,247h1v1h-1zM602,247h1v1h-1zM609,247h1v1h-1zM616,247h1v1h-1zM622,247h1v1h-1zM629,247h1v1h-1zM636,247h1v1h-1zM643,247h1v1h-1zM650,247h1v1h-1zM657,247h1v1h-1zM664,247h1v1h-1zM670,247h1v1h-1zM677,247h1v1h-1zM684,247h1v1h-1zM691,247h1v1h-1zM698,247h1v1h-1zM705,247h1v1h-1zM712,247h1v1h-1zM719,247h1v1h-1zM725,247h1v1h-1zM732,247h1v1h-1zM739,247h1v1h-1zM746,247h1v1h-1zM753,247h1v1h-1zM760,247h1v1h-1zM767,247h1v1h-1zM773,247h1v1h-1zM780,247h1v1h-1zM787,247h1v1h-1zM794,247h1v1h-1zM801,247h1v1h-1zM808,247h1v1h-1zM815,247h1v1h-1zM821,247h1v1h-1zM828,247h1v1h-1zM835,247h1v1h-1zM499,261h1v1h-1zM506,261h1v1h-1zM513,261h1v1h-1zM520,261h1v1h-1zM526,261h1v1h-1zM533,261h1v1h-1zM540,261h1v1h-1zM547,261h1v1h-1zM554,261h1v1h-1zM561,261h1v1h-1zM568,261h1v1h-1zM574,261h1v1h-1zM581,261h1v1h-1zM588,261h1v1h-1zM595,261h1v1h-1zM602,261h1v1h-1zM609,261h1v1h-1zM616,261h1v1h-1zM622,261h1v1h-1zM629,261h1v1h-1zM636,261h1v1h-1zM643,261h1v1h-1zM650,261h1v1h-1zM657,261h1v1h-1zM664,261h1v1h-1zM670,261h1v1h-1zM677,261h1v1h-1zM684,261h1v1h-1zM691,261h1v1h-1zM698,261h1v1h-1zM705,261h1v1h-1zM712,261h1v1h-1zM719,261h1v1h-1zM725,261h1v1h-1zM732,261h1v1h-1zM739,261h1v1h-1zM746,261h1v1h-1zM753,261h1v1h-1zM760,261h1v1h-1zM767,261h1v1h-1zM773,261h1v1h-1zM780,261h1v1h-1zM787,261h1v1h-1zM794,261h1v1h-1zM801,261h1v1h-1zM808,261h1v1h-1zM815,261h1v1h-1zM821,261h1v1h-1zM828,261h1v1h-1zM835,261h1v1h-1zM499,276h1v1h-1zM506,276h1v1h-1zM513,276h1v1h-1zM520,276h1v1h-1zM526,276h1v1h-1zM533,276h1v1h-1zM540,276h1v1h-1zM547,276h1v1h-1zM554,276h1v1h-1zM561,276h1v1h-1zM568,276h1v1h-1zM574,276h1v1h-1zM581,276h1v1h-1zM588,276h1v1h-1zM595,276h1v1h-1zM602,276h1v1h-1zM609,276h1v1h-1zM616,276h1v1h-1zM622,276h1v1h-1zM629,276h1v1h-1zM636,276h1v1h-1zM643,276h1v1h-1zM650,276h1v1h-1zM657,276h1v1h-1zM664,276h1v1h-1zM670,276h1v1h-1zM677,276h1v1h-1zM684,276h1v1h-1zM691,276h1v1h-1zM698,276h1v1h-1zM705,276h1v1h-1zM712,276h1v1h-1zM719,276h1v1h-1zM725,276h1v1h-1zM732,276h1v1h-1zM739,276h1v1h-1zM746,276h1v1h-1zM753,276h1v1h-1zM760,276h1v1h-1zM767,276h1v1h-1zM773,276h1v1h-1zM780,276h1v1h-1zM787,276h1v1h-1zM794,276h1v1h-1zM801,276h1v1h-1zM808,276h1v1h-1zM815,276h1v1h-1zM821,276h1v1h-1zM828,276h1v1h-1zM835,276h1v1h-1zM499,291h1v1h-1zM506,291h1v1h-1zM513,291h1v1h-1zM520,291h1v1h-1zM526,291h1v1h-1zM533,291h1v1h-1zM540,291h1v1h-1zM547,291h1v1h-1zM554,291h1v1h-1zM561,291h1v1h-1zM568,291h1v1h-1zM574,291h1v1h-1zM581,291h1v1h-1zM588,291h1v1h-1zM595,291h1v1h-1zM602,291h1v1h-1zM609,291h1v1h-1zM616,291h1v1h-1zM622,291h1v1h-1zM629,291h1v1h-1zM636,291h1v1h-1zM643,291h1v1h-1zM650,291h1v1h-1zM657,291h1v1h-1zM664,291h1v1h-1zM670,291h1v1h-1zM677,291h1v1h-1zM684,291h1v1h-1zM691,291h1v1h-1zM698,291h1v1h-1zM705,291h1v1h-1zM712,291h1v1h-1zM719,291h1v1h-1zM725,291h1v1h-1zM732,291h1v1h-1zM739,291h1v1h-1zM746,291h1v1h-1zM753,291h1v1h-1zM760,291h1v1h-1zM767,291h1v1h-1zM773,291h1v1h-1zM780,291h1v1h-1zM787,291h1v1h-1zM794,291h1v1h-1zM801,291h1v1h-1zM808,291h1v1h-1zM815,291h1v1h-1zM821,291h1v1h-1zM828,291h1v1h-1zM835,291h1v1h-1zM499,305h1v1h-1zM506,305h1v1h-1zM513,305h1v1h-1zM520,305h1v1h-1zM526,305h1v1h-1zM533,305h1v1h-1zM540,305h1v1h-1zM547,305h1v1h-1zM554,305h1v1h-1zM561,305h1v1h-1zM568,305h1v1h-1zM574,305h1v1h-1zM581,305h1v1h-1zM588,305h1v1h-1zM595,305h1v1h-1zM602,305h1v1h-1zM609,305h1v1h-1zM616,305h1v1h-1zM622,305h1v1h-1zM629,305h1v1h-1zM636,305h1v1h-1zM643,305h1v1h-1zM650,305h1v1h-1zM657,305h1v1h-1zM664,305h1v1h-1zM670,305h1v1h-1zM677,305h1v1h-1zM684,305h1v1h-1zM691,305h1v1h-1zM698,305h1v1h-1zM705,305h1v1h-1zM712,305h1v1h-1zM719,305h1v1h-1zM725,305h1v1h-1zM732,305h1v1h-1zM739,305h1v1h-1zM746,305h1v1h-1zM753,305h1v1h-1zM760,305h1v1h-1zM767,305h1v1h-1zM773,305h1v1h-1zM780,305h1v1h-1zM787,305h1v1h-1zM794,305h1v1h-1zM801,305h1v1h-1zM808,305h1v1h-1zM815,305h1v1h-1zM821,305h1v1h-1zM828,305h1v1h-1zM835,305h1v1h-1zM499,320h1v1h-1zM506,320h1v1h-1zM513,320h1v1h-1zM520,320h1v1h-1zM526,320h1v1h-1zM533,320h1v1h-1zM540,320h1v1h-1zM547,320h1v1h-1zM554,320h1v1h-1zM561,320h1v1h-1zM568,320h1v1h-1zM574,320h1v1h-1zM581,320h1v1h-1zM588,320h1v1h-1zM595,320h1v1h-1zM602,320h1v1h-1zM609,320h1v1h-1zM616,320h1v1h-1zM622,320h1v1h-1zM629,320h1v1h-1zM636,320h1v1h-1zM643,320h1v1h-1zM650,320h1v1h-1zM657,320h1v1h-1zM664,320h1v1h-1zM670,320h1v1h-1zM677,320h1v1h-1zM684,320h1v1h-1zM691,320h1v1h-1zM698,320h1v1h-1zM705,320h1v1h-1zM712,320h1v1h-1zM719,320h1v1h-1zM725,320h1v1h-1zM732,320h1v1h-1zM739,320h1v1h-1zM746,320h1v1h-1zM753,320h1v1h-1zM760,320h1v1h-1zM767,320h1v1h-1zM773,320h1v1h-1zM780,320h1v1h-1zM787,320h1v1h-1zM794,320h1v1h-1zM801,320h1v1h-1zM808,320h1v1h-1zM815,320h1v1h-1zM821,320h1v1h-1zM828,320h1v1h-1zM835,320h1v1h-1zM533,217h1v1h-1zM533,220h1v1h-1zM533,223h1v1h-1zM533,226h1v1h-1zM533,229h1v1h-1zM533,232h1v1h-1zM533,235h1v1h-1zM533,238h1v1h-1zM533,241h1v1h-1zM533,244h1v1h-1zM533,247h1v1h-1zM533,250h1v1h-1zM533,253h1v1h-1zM533,256h1v1h-1zM533,259h1v1h-1zM533,261h1v1h-1zM533,264h1v1h-1zM533,267h1v1h-1zM533,270h1v1h-1zM533,273h1v1h-1zM533,276h1v1h-1zM533,279h1v1h-1zM533,282h1v1h-1zM533,285h1v1h-1zM533,288h1v1h-1zM533,291h1v1h-1zM533,294h1v1h-1zM533,297h1v1h-1zM533,300h1v1h-1zM533,302h1v1h-1zM533,305h1v1h-1zM533,308h1v1h-1zM533,311h1v1h-1zM533,314h1v1h-1zM533,317h1v1h-1zM533,320h1v1h-1zM533,323h1v1h-1zM533,326h1v1h-1zM533,329h1v1h-1zM533,332h1v1h-1zM568,217h1v1h-1zM568,220h1v1h-1zM568,223h1v1h-1zM568,226h1v1h-1zM568,229h1v1h-1zM568,232h1v1h-1zM568,235h1v1h-1zM568,238h1v1h-1zM568,241h1v1h-1zM568,244h1v1h-1zM568,247h1v1h-1zM568,250h1v1h-1zM568,253h1v1h-1zM568,256h1v1h-1zM568,259h1v1h-1zM568,261h1v1h-1zM568,264h1v1h-1zM568,267h1v1h-1zM568,270h1v1h-1zM568,273h1v1h-1zM568,276h1v1h-1zM568,279h1v1h-1zM568,282h1v1h-1zM568,285h1v1h-1zM568,288h1v1h-1zM568,291h1v1h-1zM568,294h1v1h-1zM568,297h1v1h-1zM568,300h1v1h-1zM568,302h1v1h-1zM568,305h1v1h-1zM568,308h1v1h-1zM568,311h1v1h-1zM568,314h1v1h-1zM568,317h1v1h-1zM568,320h1v1h-1zM568,323h1v1h-1zM568,326h1v1h-1zM568,329h1v1h-1zM568,332h1v1h-1zM602,217h1v1h-1zM602,220h1v1h-1zM602,223h1v1h-1zM602,226h1v1h-1zM602,229h1v1h-1zM602,232h1v1h-1zM602,235h1v1h-1zM602,238h1v1h-1zM602,241h1v1h-1zM602,244h1v1h-1zM602,247h1v1h-1zM602,250h1v1h-1zM602,253h1v1h-1zM602,256h1v1h-1zM602,259h1v1h-1zM602,261h1v1h-1zM602,264h1v1h-1zM602,267h1v1h-1zM602,270h1v1h-1zM602,273h1v1h-1zM602,276h1v1h-1zM602,279h1v1h-1zM602,282h1v1h-1zM602,285h1v1h-1zM602,288h1v1h-1zM602,291h1v1h-1zM602,294h1v1h-1zM602,297h1v1h-1zM602,300h1v1h-1zM602,302h1v1h-1zM602,305h1v1h-1zM602,308h1v1h-1zM602,311h1v1h-1zM602,314h1v1h-1zM602,317h1v1h-1zM602,320h1v1h-1zM602,323h1v1h-1zM602,326h1v1h-1zM602,329h1v1h-1zM602,332h1v1h-1zM636,217h1v1h-1zM636,220h1v1h-1zM636,223h1v1h-1zM636,226h1v1h-1zM636,229h1v1h-1zM636,232h1v1h-1zM636,235h1v1h-1zM636,238h1v1h-1zM636,241h1v1h-1zM636,244h1v1h-1zM636,247h1v1h-1zM636,250h1v1h-1zM636,253h1v1h-1zM636,256h1v1h-1zM636,259h1v1h-1zM636,261h1v1h-1zM636,264h1v1h-1zM636,267h1v1h-1zM636,270h1v1h-1zM636,273h1v1h-1zM636,276h1v1h-1zM636,279h1v1h-1zM636,282h1v1h-1zM636,285h1v1h-1zM636,288h1v1h-1zM636,291h1v1h-1zM636,294h1v1h-1zM636,297h1v1h-1zM636,300h1v1h-1zM636,302h1v1h-1zM636,305h1v1h-1zM636,308h1v1h-1zM636,311h1v1h-1zM636,314h1v1h-1zM636,317h1v1h-1zM636,320h1v1h-1zM636,323h1v1h-1zM636,326h1v1h-1zM636,329h1v1h-1zM636,332h1v1h-1zM670,217h1v1h-1zM670,220h1v1h-1zM670,223h1v1h-1zM670,226h1v1h-1zM670,229h1v1h-1zM670,232h1v1h-1zM670,235h1v1h-1zM670,238h1v1h-1zM670,241h1v1h-1zM670,244h1v1h-1zM670,247h1v1h-1zM670,250h1v1h-1zM670,253h1v1h-1zM670,256h1v1h-1zM670,259h1v1h-1zM670,261h1v1h-1zM670,264h1v1h-1zM670,267h1v1h-1zM670,270h1v1h-1zM670,273h1v1h-1zM670,276h1v1h-1zM670,279h1v1h-1zM670,282h1v1h-1zM670,285h1v1h-1zM670,288h1v1h-1zM670,291h1v1h-1zM670,294h1v1h-1zM670,297h1v1h-1zM670,300h1v1h-1zM670,302h1v1h-1zM670,305h1v1h-1zM670,308h1v1h-1zM670,311h1v1h-1zM670,314h1v1h-1zM670,317h1v1h-1zM670,320h1v1h-1zM670,323h1v1h-1zM670,326h1v1h-1zM670,329h1v1h-1zM670,332h1v1h-1zM705,217h1v1h-1zM705,220h1v1h-1zM705,223h1v1h-1zM705,226h1v1h-1zM705,229h1v1h-1zM705,232h1v1h-1zM705,235h1v1h-1zM705,238h1v1h-1zM705,241h1v1h-1zM705,244h1v1h-1zM705,247h1v1h-1zM705,250h1v1h-1zM705,253h1v1h-1zM705,256h1v1h-1zM705,259h1v1h-1zM705,261h1v1h-1zM705,264h1v1h-1zM705,267h1v1h-1zM705,270h1v1h-1zM705,273h1v1h-1zM705,276h1v1h-1zM705,279h1v1h-1zM705,282h1v1h-1zM705,285h1v1h-1zM705,288h1v1h-1zM705,291h1v1h-1zM705,294h1v1h-1zM705,297h1v1h-1zM705,300h1v1h-1zM705,302h1v1h-1zM705,305h1v1h-1zM705,308h1v1h-1zM705,311h1v1h-1zM705,314h1v1h-1zM705,317h1v1h-1zM705,320h1v1h-1zM705,323h1v1h-1zM705,326h1v1h-1zM705,329h1v1h-1zM705,332h1v1h-1zM739,217h1v1h-1zM739,220h1v1h-1zM739,223h1v1h-1zM739,226h1v1h-1zM739,229h1v1h-1zM739,232h1v1h-1zM739,235h1v1h-1zM739,238h1v1h-1zM739,241h1v1h-1zM739,244h1v1h-1zM739,247h1v1h-1zM739,250h1v1h-1zM739,253h1v1h-1zM739,256h1v1h-1zM739,259h1v1h-1zM739,261h1v1h-1zM739,264h1v1h-1zM739,267h1v1h-1zM739,270h1v1h-1zM739,273h1v1h-1zM739,276h1v1h-1zM739,279h1v1h-1zM739,282h1v1h-1zM739,285h1v1h-1zM739,288h1v1h-1zM739,291h1v1h-1zM739,294h1v1h-1zM739,297h1v1h-1zM739,300h1v1h-1zM739,302h1v1h-1zM739,305h1v1h-1zM739,308h1v1h-1zM739,311h1v1h-1zM739,314h1v1h-1zM739,317h1v1h-1zM739,320h1v1h-1zM739,323h1v1h-1zM739,326h1v1h-1zM739,329h1v1h-1zM739,332h1v1h-1zM773,217h1v1h-1zM773,220h1v1h-1zM773,223h1v1h-1zM773,226h1v1h-1zM773,229h1v1h-1zM773,232h1v1h-1zM773,235h1v1h-1zM773,238h1v1h-1zM773,241h1v1h-1zM773,244h1v1h-1zM773,247h1v1h-1zM773,250h1v1h-1zM773,253h1v1h-1zM773,256h1v1h-1zM773,259h1v1h-1zM773,261h1v1h-1zM773,264h1v1h-1zM773,267h1v1h-1zM773,270h1v1h-1zM773,273h1v1h-1zM773,276h1v1h-1zM773,279h1v1h-1zM773,282h1v1h-1zM773,285h1v1h-1zM773,288h1v1h-1zM773,291h1v1h-1zM773,294h1v1h-1zM773,297h1v1h-1zM773,300h1v1h-1zM773,302h1v1h-1zM773,305h1v1h-1zM773,308h1v1h-1zM773,311h1v1h-1zM773,314h1v1h-1zM773,317h1v1h-1zM773,320h1v1h-1zM773,323h1v1h-1zM773,326h1v1h-1zM773,329h1v1h-1zM773,332h1v1h-1zM808,217h1v1h-1zM808,220h1v1h-1zM808,223h1v1h-1zM808,226h1v1h-1zM808,229h1v1h-1zM808,232h1v1h-1zM808,235h1v1h-1zM808,238h1v1h-1zM808,241h1v1h-1zM808,244h1v1h-1zM808,247h1v1h-1zM808,250h1v1h-1zM808,253h1v1h-1zM808,256h1v1h-1zM808,259h1v1h-1zM808,261h1v1h-1zM808,264h1v1h-1zM808,267h1v1h-1zM808,270h1v1h-1zM808,273h1v1h-1zM808,276h1v1h-1zM808,279h1v1h-1zM808,282h1v1h-1zM808,285h1v1h-1zM808,288h1v1h-1zM808,291h1v1h-1zM808,294h1v1h-1zM808,297h1v1h-1zM808,300h1v1h-1zM808,302h1v1h-1zM808,305h1v1h-1zM808,308h1v1h-1zM808,311h1v1h-1zM808,314h1v1h-1zM808,317h1v1h-1zM808,320h1v1h-1zM808,323h1v1h-1zM808,326h1v1h-1zM808,329h1v1h-1zM808,332h1v1h-1z" fill="#c8c8c8"/><polyline points="499.0,284.87 499.5,284.28 500.0,283.69 500.5,283.10 501.0,282.50 501.5,281.91 502.0,281.32 502.5,280.73 503.0,280.14 503.5,279.55 504.0,278.95 504.5,278.36 505.0,277.77 505.5,277.18 506.0,276.59 506.5,275.99 507.0,275.40 507.5,274.81 508.0,274.22 508.5,273.63 509.0,273.04 509.5,272.44 510.0,271.85 510.5,271.26 511.0,270.67 511.5,270.08 512.0,269.49 512.5,268.89 513.0,268.30 513.5,267.71 514.0,267.12 514.5,266.53 515.0,265.93 515.5,265.34 516.0,264.75 516.5,264.16 517.0,263.57 517.5,262.98 518.0,262.38 518.5,261.79 519.0,261.20 519.5,260.61 520.0,260.02 520.5,259.42 521.0,258.83 521.5,258.24 522.0,257.65 522.5,257.06 523.0,256.47 523.5,255.87 524.0,255.52 524.5,256.11 525.0,256.70 525.5,257.29 526.0,257.89 526.5,258.48 527.0,259.07 527.5,259.66 528.0,260.25 528.5,260.84 529.0,261.44 529.5,262.03 530.0,262.62 530.5,263.21 531.0,263.80 531.5,264.40 532.0,264.99 532.5,265.58 533.0,266.17 533.5,266.76 534.0,267.35 534.5,267.95 535.0,268.54 535.5,269.13 536.0,269.72 536.5,270.31 537.0,270.91 537.5,271.50 538.0,272.09 538.5,272.68 539.0,273.27 539.5,273.86 540.0,274.46 540.5,275.05 541.0,275.64 541.5,276.23 542.0,276.82 542.5,277.42 543.0,278.01 543.5,278.60 544.0,279.19 544.5,279.78 545.0,280.37 545.5,280.97 546.0,281.56 546.5,282.15 547.0,282.74 547.5,283.33 548.0,283.93 548.5,284.52 549.0,285.11 549.5,285.70 550.0,286.29 550.5,286.88 551.0,287.48 551.5,288.07 552.0,288.66 552.5,289.25 553.0,289.84 553.5,290.44 554.0,291.03 554.5,291.62 555.0,292.21 555.5,292.80 556.0,293.39 556.5,293.99 557.0,294.58 557.5,295.17 558.0,295.76 558.5,296.35 559.0,296.94 559.5,297.06 560.0,296.47 560.5,295.88 561.0,295.29 561.5,294.70 562.0,294.10 562.5,293.51 563.0,292.92 563.5,292.33 564.0,291.74 564.5,291.15 565.0,290.55 565.5,289.96 566.0,289.37 566.5,288.78 567.0,288.19 567.5,287.59 568.0,287.00 568.5,286.41 569.0,285.82 569.5,285.23 570.0,284.64 570.5,284.04 571.0,283.45 571.5,282.86 572.0,282.27 572.5,281.68 573.0,281.08 573.5,280.49 574.0,279.90 574.5,279.31 575.0,278.72 575.5,278.13 576.0,277.53 576.5,276.94 577.0,276.35 577.5,275.76 578.0,275.17 578.5,274.57 579.0,273.98 579.5,273.39 580.0,272.80 580.5,272.21 581.0,271.62 581.5,271.02 582.0,270.43 582.5,269.84 583.0,269.25 583.5,268.66 584.0,268.06 584.5,267.47 585.0,266.88 585.5,266.29 586.0,265.70 586.5,265.11 587.0,264.51 587.5,263.92 588.0,263.33 588.5,262.74 589.0,262.15 589.5,261.55 590.0,260.96 590.5,260.37 591.0,259.78 591.5,259.19 592.0,258.60 592.5,258.00 593.0,257.41 593.5,256.82 594.0,256.23 594.5,255.64 595.0,255.76 595.5,256.35 596.0,256.94 596.5,257.53 597.0,258.12 597.5,258.71 598.0,259.31 598.5,259.90 599.0,260.49 599.5,261.08 600.0,261.67 600.5,262.26 601.0,262.86 601.5,263.45 602.0,264.04 602.5,264.63 603.0,265.22 603.5,265.82 604.0,266.41 604.5,267.00 605.0,267.59 605.5,268.18 606.0,268.77 606.5,269.37 607.0,269.96 607.5,270.55 608.0,271.14 608.5,271.73 609.0,272.33 609.5,272.92 610.0,273.51 610.5,274.10 611.0,274.69 611.5,275.28 612.0,275.88 612.5,276.47 613.0,277.06 613.5,277.65 614.0,278.24 614.5,278.84 615.0,279.43 615.5,280.02 616.0,280.61 616.5,281.20 617.0,281.79 617.5,282.39 618.0,282.98 618.5,283.57 619.0,284.16 619.5,284.75 620.0,285.35 620.5,285.94 621.0,286.53 621.5,287.12 622.0,287.71 622.5,288.30 623.0,288.90 623.5,289.49 624.0,290.08 624.5,290.67 625.0,291.26 625.5,291.86 626.0,292.45 626.5,293.04 627.0,293.63 627.5,294.22 628.0,294.81 628.5,295.41 629.0,296.00 629.5,296.59 630.0,297.18 630.5,296.83 631.0,296.23 631.5,295.64 632.0,295.05 632.5,294.46 633.0,293.87 633.5,293.28 634.0,292.68 634.5,292.09 635.0,291.50 635.5,290.91 636.0,290.32 636.5,289.72 637.0,289.13 637.5,288.54 638.0,287.95 638.5,287.36 639.0,286.77 639.5,286.17 640.0,285.58 640.5,284.99 641.0,284.40 641.5,283.81 642.0,283.21 642.5,282.62 643.0,282.03 643.5,281.44 644.0,280.85 644.5,280.26 645.0,279.66 645.5,279.07 646.0,278.48 646.5,277.89 647.0,277.30 647.5,276.71 648.0,276.11 648.5,275.52 649.0,274.93 649.5,274.34 650.0,273.75 650.5,273.15 651.0,272.56 651.5,271.97 652.0,271.38 652.5,270.79 653.0,270.20 653.5,269.60 654.0,269.01 654.5,268.42 655.0,267.83 655.5,267.24 656.0,266.64 656.5,266.05 657.0,265.46 657.5,264.87 658.0,264.28 658.5,263.69 659.0,263.09 659.5,262.50 660.0,261.91 660.5,261.32 661.0,260.73 661.5,260.13 662.0,259.54 662.5,258.95 663.0,258.36 663.5,257.77 664.0,257.18 664.5,256.58 665.0,255.99 665.5,255.40 666.0,255.99 666.5,256.58 667.0,257.18 667.5,257.77 668.0,258.36 668.5,258.95 669.0,259.54 669.5,260.13 670.0,260.73 670.5,261.32 671.0,261.91 671.5,262.50 672.0,263.09 672.5,263.69 673.0,264.28 673.5,264.87 674.0,265.46 674.5,266.05 675.0,266.64 675.5,267.24 676.0,267.83 676.5,268.42 677.0,269.01 677.5,269.60 678.0,270.20 678.5,270.79 679.0,271.38 679.5,271.97 680.0,272.56 680.5,273.15 681.0,273.75 681.5,274.34 682.0,274.93 682.5,275.52 683.0,276.11 683.5,276.71 684.0,277.30 684.5,277.89 685.0,278.48 685.5,279.07 686.0,279.66 686.5,280.26 687.0,280.85 687.5,281.44 688.0,282.03 688.5,282.62 689.0,283.21 689.5,283.81 690.0,284.40 690.5,284.99 691.0,285.58 691.5,286.17 692.0,286.77 692.5,287.36 693.0,287.95 693.5,288.54 694.0,289.13 694.5,289.72 695.0,290.32 695.5,290.91 696.0,291.50 696.5,292.09 697.0,292.68 697.5,293.28 698.0,293.87 698.5,294.46 699.0,295.05 699.5,295.64 700.0,296.23 700.5,296.83 701.0,297.18 701.5,296.59 702.0,296.00 702.5,295.41 703.0,294.81 703.5,294.22 704.0,293.63 704.5,293.04 705.0,292.45 705.5,291.86 706.0,291.26 706.5,290.67 707.0,290.08 707.5,289.49 708.0,288.90 708.5,288.30 709.0,287.71 709.5,287.12 710.0,286.53 710.5,285.94 711.0,285.35 711.5,284.75 712.0,284.16 712.5,283.57 713.0,282.98 713.5,282.39 714.0,281.79 714.5,281.20 715.0,280.61 715.5,280.02 716.0,279.43 716.5,278.84 717.0,278.24 717.5,277.65 718.0,277.06 718.5,276.47 719.0,275.88 719.5,275.28 720.0,274.69 720.5,274.10 721.0,273.51 721.5,272.92 722.0,272.33 722.5,271.73 723.0,271.14 723.5,270.55 724.0,269.96 724.5,269.37 725.0,268.77 725.5,268.18 726.0,267.59 726.5,267.00 727.0,266.41 727.5,265.82 728.0,265.22 728.5,264.63 729.0,264.04 729.5,263.45 730.0,262.86 730.5,262.26 731.0,261.67 731.5,261.08 732.0,260.49 732.5,259.90 733.0,259.31 733.5,258.71 734.0,258.12 734.5,257.53 735.0,256.94 735.5,256.35 736.0,255.76 736.5,255.64 737.0,256.23 737.5,256.82 738.0,257.41 738.5,258.00 739.0,258.60 739.5,259.19 740.0,259.78 740.5,260.37 741.0,260.96 741.5,261.55 742.0,262.15 742.5,262.74 743.0,263.33 743.5,263.92 744.0,264.51 744.5,265.11 745.0,265.70 745.5,266.29 746.0,266.88 746.5,267.47 747.0,268.06 747.5,268.66 748.0,269.25 748.5,269.84 749.0,270.43 749.5,271.02 750.0,271.62 750.5,272.21 751.0,272.80 751.5,273.39 752.0,273.98 752.5,274.57 753.0,275.17 753.5,275.76 754.0,276.35 754.5,276.94 755.0,277.53 755.5,278.13 756.0,278.72 756.5,279.31 757.0,279.90 757.5,280.49 758.0,281.08 758.5,281.68 759.0,282.27 759.5,282.86 760.0,283.45 760.5,284.04 761.0,284.64 761.5,285.23 762.0,285.82 762.5,286.41 763.0,287.00 763.5,287.59 764.0,288.19 764.5,288.78 765.0,289.37 765.5,289.96 766.0,290.55 766.5,291.15 767.0,291.74 767.5,292.33 768.0,292.92 768.5,293.51 769.0,294.10 769.5,294.70 770.0,295.29 770.5,295.88 771.0,296.47 771.5,297.06 772.0,296.94 772.5,296.35 773.0,295.76 773.5,295.17 774.0,294.58 774.5,293.99 775.0,293.39 775.5,292.80 776.0,292.21 776.5,291.62 777.0,291.03 777.5,290.44 778.0,289.84 778.5,289.25 779.0,288.66 779.5,288.07 780.0,287.48 780.5,286.88 781.0,286.29 781.5,285.70 782.0,285.11 782.5,284.52 783.0,283.93 783.5,283.33 784.0,282.74 784.5,282.15 785.0,281.56 785.5,280.97 786.0,280.37 786.5,279.78 787.0,279.19 787.5,278.60 788.0,278.01 788.5,277.42 789.0,276.82 789.5,276.23 790.0,275.64 790.5,275.05 791.0,274.46 791.5,273.86 792.0,273.27 792.5,272.68 793.0,272.09 793.5,271.50 794.0,270.91 794.5,270.31 795.0,269.72 795.5,269.13 796.0,268.54 796.5,267.95 797.0,267.35 797.5,266.76 798.0,266.17 798.5,265.58 799.0,264.99 799.5,264.40 800.0,263.80 800.5,263.21 801.0,262.62 801.5,262.03 802.0,261.44 802.5,260.84 803.0,260.25 803.5,259.66 804.0,259.07 804.5,258.48 805.0,257.89 805.5,257.29 806.0,256.70 806.5,256.11 807.0,255.52 807.5,255.87 808.0,256.47 808.5,257.06 809.0,257.65 809.5,258.24 810.0,258.83 810.5,259.42 811.0,260.02 811.5,260.61 812.0,261.20 812.5,261.79 813.0,262.38 813.5,262.98 814.0,263.57 814.5,264.16 815.0,264.75 815.5,265.34 816.0,265.93 816.5,266.53 817.0,267.12 817.5,267.71 818.0,268.30 818.5,268.89 819.0,269.49 819.5,270.08 820.0,270.67 820.5,271.26 821.0,271.85 821.5,272.44 822.0,273.04 822.5,273.63 823.0,274.22 823.5,274.81 824.0,275.40 824.5,275.99 825.0,276.59 825.5,277.18 826.0,277.77 826.5,278.36 827.0,278.95 827.5,279.55 828.0,280.14 828.5,280.73 829.0,281.32 829.5,281.91 830.0,282.50 830.5,283.10 831.0,283.69 831.5,284.28 832.0,284.87 832.5,285.46 833.0,286.06 833.5,286.65 834.0,287.24 834.5,287.83 835.0,288.42 835.5,289.01 836.0,289.61 836.5,290.20 837.0,290.79 837.5,291.38 838.0,291.97 838.5,292.57 839.0,293.16 839.5,293.75 840.0,294.34 840.5,294.93 841.0,295.52 841.5,296.12 842.0,296.71" fill="none" stroke="#00e0f0" stroke-width="1" shape-rendering="crispEdges"/></svg>
<div style="position:absolute;left:499px;top:335px;width:343px;height:16px;background:#000"></div>
<div style="position:absolute;left:499px;top:335px;width:15px;height:15px;background:#f0f0f0;border-top:1px solid #fff;border-left:1px solid #fff;border-right:1px solid #a0a0a0;border-bottom:1px solid #a0a0a0"></div>
<div style="position:absolute;left:514px;top:335px;width:311px;height:15px;background:#f0f0f0;border-top:1px solid #fff;border-left:1px solid #fff;border-right:1px solid #a0a0a0;border-bottom:1px solid #a0a0a0"></div>
<div style="position:absolute;left:826px;top:335px;width:15px;height:15px;background:#f0f0f0;border-top:1px solid #fff;border-left:1px solid #fff;border-right:1px solid #a0a0a0;border-bottom:1px solid #a0a0a0"></div>
<svg style="left:0px;top:0px" width="884" height="592" viewBox="0 0 884 592"><polygon points="831,338.7 837.3,342.2 831,345" fill="#000"/><polygon points="502.8,342.5 509,338.9 509,344.8" fill="#000"/><polygon points="510.2,342.7 514.65,336.6 521,342.7" fill="#000"/><rect x="513.6" y="342.5" width="1.6" height="8" fill="#000"/></svg>
<div style="position:absolute;left:453px;top:351px;width:429px;height:21px;background:#000;border-top:1px solid #fff;border-bottom:2px solid #a0a0a0;border-right:1px solid #a0a0a0"></div>
<div class="t" style="left:459.0px;top:356.5px;width:80px;text-align:center;font-size:11px;color:#fff">0 s</div>
<div class="t" style="left:527.6px;top:356.5px;width:80px;text-align:center;font-size:11px;color:#fff">20.0 &#181;s</div>
<div class="t" style="left:596.2px;top:356.5px;width:80px;text-align:center;font-size:11px;color:#fff">40.0 &#181;s</div>
<div class="t" style="left:664.8px;top:356.5px;width:80px;text-align:center;font-size:11px;color:#fff">60.0 &#181;s</div>
<div class="t" style="left:733.4px;top:356.5px;width:80px;text-align:center;font-size:11px;color:#fff">80.0 &#181;s</div>
<div class="t" style="left:802.0px;top:356.5px;width:80px;text-align:center;font-size:11px;color:#fff">100.0 &#181;s</div>
<div style="position:absolute;left:451px;top:374px;width:433px;height:2px;background:#a4a4a4"></div>
<div style="position:absolute;left:451px;top:377px;width:431px;height:196px;background:#f0f0f0;border-left:1px solid #fff"></div>
<div style="position:absolute;left:454px;top:380px;width:52px;height:168px;background:#000"></div>
<div style="position:absolute;left:454px;top:380px;width:52px;height:14px;background:#00ff00"></div>
<div style="position:absolute;left:506px;top:380px;width:2px;height:169px;background:#909090"></div>
<div style="position:absolute;left:454px;top:547px;width:53px;height:2px;background:#909090"></div>
<div class="t" style="left:455.5px;top:409.5px;width:40px;height:15px;background:#00ff00;border-radius:4px;color:#000;font-size:11px;line-height:15px;text-align:center">20.000</div>
<div class="t" style="left:455.5px;top:526.5px;width:40px;height:15px;background:#00ff00;border-radius:4px;color:#000;font-size:11px;line-height:15px;text-align:center">-20.000</div>
<div class="t" style="left:433px;top:441.75px;width:60px;text-align:right;font-size:11px;color:#00ff00">10.000</div>
<div class="t" style="left:433px;top:471.0px;width:60px;text-align:right;font-size:11px;color:#00ff00">0.000</div>
<div class="t" style="left:433px;top:500.25px;width:60px;text-align:right;font-size:11px;color:#00ff00">-10.000</div>
<div style="position:absolute;left:508px;top:379px;width:334px;height:37px;background:#fff;border-top:1px solid #d0d0d0;border-left:1px solid #a0a0a0;border-right:1px solid #a0a0a0;border-bottom:2px solid #a8a8a8"></div>
<svg style="left:515px;top:386px" width="26" height="25" viewBox="0 0 26 25"><rect x="1.5" y="1.5" width="7.5" height="4.5" fill="#00ff00" stroke="#008000" stroke-width="1"/><rect x="1.5" y="10.5" width="7.5" height="4.5" fill="#00ffff" stroke="#008080" stroke-width="1"/><rect x="1.5" y="19.5" width="7.5" height="4.5" fill="#0080ff" stroke="#004080" stroke-width="1"/><path d="M9,3.5 H25 M9,12.5 H25 M9,21.5 H25" stroke="#808080" stroke-width="0.9"/><path d="M19.5,4.5 V11.5 M19.5,13.5 V20.5" stroke="#000" stroke-width="1.2"/><path d="M17.5,6.5 l2,-2.2 l2,2.2 M17.5,9.5 l2,2.2 l2,-2.2 M17.5,15.5 l2,-2.2 l2,2.2 M17.5,18.5 l2,2.2 l2,-2.2" stroke="#000" stroke-width="1" fill="none"/></svg>
<svg style="left:607px;top:386px" width="25" height="24" viewBox="0 0 25 24"><rect x="0.8" y="0.8" width="23" height="13.5" rx="2.5" fill="#ffff90" stroke="#000" stroke-width="1.4"/><text x="3" y="6" font-family="Liberation Sans" font-size="4.5" fill="#555">Comment</text><text x="3" y="11.5" font-family="Liberation Sans" font-size="4.5" fill="#555">Text</text><rect x="10" y="12.5" width="4" height="2.2" fill="#ff0000"/><path d="M13,14.5 L21,21.5" stroke="#000" stroke-width="1.2"/><polygon points="23.5,23.5 17,23 23,17" fill="#000"/></svg>
<svg style="left:638px;top:387px" width="24" height="22" viewBox="0 0 24 22"><rect x="0.8" y="4.5" width="22.5" height="13" rx="3" fill="#f4f4f4" stroke="#c8c8c8" stroke-width="1.3"/><path d="M2,1 L22,21 M22,1 L2,21" stroke="#c4c4c4" stroke-width="2.6"/></svg>
<div style="position:absolute;left:667.5px;top:383px;width:1px;height:30px;background:#a0a0a0"></div>
<svg style="left:675px;top:386px" width="24" height="24" viewBox="0 0 24 24"><rect x="0" y="0" width="24" height="23.5" fill="#000"/><rect x="2" y="3" width="3" height="3" fill="#00ff00"/><rect x="2" y="9" width="3" height="3" fill="#00ffff"/><text x="6.5" y="7" font-family="Liberation Sans" font-size="6" fill="#bbb">Ch1</text><text x="6.5" y="12.8" font-family="Liberation Sans" font-size="6" fill="#bbb">Ch2</text></svg>
<div style="position:absolute;left:701px;top:382px;width:31px;height:29px;background:#cce8ff;border:1px solid #99d1ff"></div>
<svg style="left:706px;top:386px" width="24" height="24" viewBox="0 0 24 24"><rect x="0" y="0" width="24" height="23.5" fill="#000"/><ellipse cx="9" cy="12.2" rx="4.7" ry="7.8" fill="none" stroke="#00ff00" stroke-width="2"/><ellipse cx="15.1" cy="17.8" rx="7" ry="3.8" fill="none" stroke="#00ffff" stroke-width="2"/></svg>
<svg style="left:737px;top:386px" width="24" height="24" viewBox="0 0 24 24"><rect x="0.5" y="0.5" width="23" height="23" fill="#fff" stroke="#808080" stroke-width="1"/><rect x="1" y="1" width="22" height="3.5" fill="#e0e0e0"/><path d="M0.5,4.8 h23" stroke="#808080" stroke-width="1"/><rect x="15" y="2" width="1.8" height="1.8" fill="#999"/><rect x="18" y="2" width="1.8" height="1.8" fill="#999"/><rect x="21" y="2" width="1.8" height="1.8" fill="#f06060"/><rect x="2" y="13" width="11" height="8.5" fill="#000"/><path d="M3,18 C5,13 7,13 8,17 C9,20 11,19 12,15" stroke="#00ff00" stroke-width="1" fill="none"/><path d="M14.5,11.5 L20,7" stroke="#000" stroke-width="1.2"/><polygon points="21,6 16.5,6.5 20.5,10" fill="#000"/></svg>
<svg style="left:768px;top:386px" width="24" height="24" viewBox="0 0 24 24"><ellipse cx="16.5" cy="18.5" rx="6" ry="3.8" fill="none" stroke="#e8e8e8" stroke-width="0.8" stroke-dasharray="1.5 1"/><polygon points="0,0.2 3.6,0.2 9.7,6.5 4.5,11.4 0,7.2" fill="#e86c00"/><polygon points="0,0.2 3.6,0.2 9.7,6.5 7,9 0.5,3" fill="#ffa000"/><polygon points="0,0.2 3.6,0.2 9.7,6.5 4.5,11.4 0,7.2" fill="none" stroke="#000" stroke-width="0.9"/><polygon points="9.7,6.5 14.9,11.4 9.7,16.6 4.5,11.4" fill="#c4c4c4" stroke="#000" stroke-width="1.2"/><polygon points="14.9,11.4 16.8,14.5 12.3,18.8 9.7,16.6" fill="#b02800"/></svg>
<svg style="left:800px;top:387px" width="22" height="22" viewBox="0 0 22 22"><polygon points="0.8,4.1 4.1,0.8 11,7.7 17.9,0.8 21.2,4.1 14.3,11 21.2,17.9 17.9,21.2 11,14.3 4.1,21.2 0.8,17.9 7.7,11" fill="#f48a8a" stroke="#e02828" stroke-width="1" stroke-linejoin="round"/></svg>
<div class="t" style="left:826.5px;top:390px;font-family:'Liberation Serif',serif;font-weight:bold;font-size:17px;color:#000">3</div>
<div style="position:absolute;left:508px;top:416px;width:334px;height:118px;background:#000"></div>
<svg style="left:0px;top:0px" width="884" height="592" viewBox="0 0 884 592"><path d="M508,431h1v1h-1zM516,431h1v1h-1zM525,431h1v1h-1zM533,431h1v1h-1zM541,431h1v1h-1zM550,431h1v1h-1zM558,431h1v1h-1zM566,431h1v1h-1zM575,431h1v1h-1zM583,431h1v1h-1zM591,431h1v1h-1zM600,431h1v1h-1zM608,431h1v1h-1zM617,431h1v1h-1zM625,431h1v1h-1zM633,431h1v1h-1zM642,431h1v1h-1zM650,431h1v1h-1zM658,431h1v1h-1zM667,431h1v1h-1zM675,431h1v1h-1zM683,431h1v1h-1zM692,431h1v1h-1zM700,431h1v1h-1zM708,431h1v1h-1zM717,431h1v1h-1zM725,431h1v1h-1zM733,431h1v1h-1zM742,431h1v1h-1zM750,431h1v1h-1zM758,431h1v1h-1zM767,431h1v1h-1zM775,431h1v1h-1zM784,431h1v1h-1zM792,431h1v1h-1zM800,431h1v1h-1zM809,431h1v1h-1zM817,431h1v1h-1zM825,431h1v1h-1zM834,431h1v1h-1zM508,446h1v1h-1zM516,446h1v1h-1zM525,446h1v1h-1zM533,446h1v1h-1zM541,446h1v1h-1zM550,446h1v1h-1zM558,446h1v1h-1zM566,446h1v1h-1zM575,446h1v1h-1zM583,446h1v1h-1zM591,446h1v1h-1zM600,446h1v1h-1zM608,446h1v1h-1zM617,446h1v1h-1zM625,446h1v1h-1zM633,446h1v1h-1zM642,446h1v1h-1zM650,446h1v1h-1zM658,446h1v1h-1zM667,446h1v1h-1zM675,446h1v1h-1zM683,446h1v1h-1zM692,446h1v1h-1zM700,446h1v1h-1zM708,446h1v1h-1zM717,446h1v1h-1zM725,446h1v1h-1zM733,446h1v1h-1zM742,446h1v1h-1zM750,446h1v1h-1zM758,446h1v1h-1zM767,446h1v1h-1zM775,446h1v1h-1zM784,446h1v1h-1zM792,446h1v1h-1zM800,446h1v1h-1zM809,446h1v1h-1zM817,446h1v1h-1zM825,446h1v1h-1zM834,446h1v1h-1zM508,461h1v1h-1zM516,461h1v1h-1zM525,461h1v1h-1zM533,461h1v1h-1zM541,461h1v1h-1zM550,461h1v1h-1zM558,461h1v1h-1zM566,461h1v1h-1zM575,461h1v1h-1zM583,461h1v1h-1zM591,461h1v1h-1zM600,461h1v1h-1zM608,461h1v1h-1zM617,461h1v1h-1zM625,461h1v1h-1zM633,461h1v1h-1zM642,461h1v1h-1zM650,461h1v1h-1zM658,461h1v1h-1zM667,461h1v1h-1zM675,461h1v1h-1zM683,461h1v1h-1zM692,461h1v1h-1zM700,461h1v1h-1zM708,461h1v1h-1zM717,461h1v1h-1zM725,461h1v1h-1zM733,461h1v1h-1zM742,461h1v1h-1zM750,461h1v1h-1zM758,461h1v1h-1zM767,461h1v1h-1zM775,461h1v1h-1zM784,461h1v1h-1zM792,461h1v1h-1zM800,461h1v1h-1zM809,461h1v1h-1zM817,461h1v1h-1zM825,461h1v1h-1zM834,461h1v1h-1zM508,475h1v1h-1zM516,475h1v1h-1zM525,475h1v1h-1zM533,475h1v1h-1zM541,475h1v1h-1zM550,475h1v1h-1zM558,475h1v1h-1zM566,475h1v1h-1zM575,475h1v1h-1zM583,475h1v1h-1zM591,475h1v1h-1zM600,475h1v1h-1zM608,475h1v1h-1zM617,475h1v1h-1zM625,475h1v1h-1zM633,475h1v1h-1zM642,475h1v1h-1zM650,475h1v1h-1zM658,475h1v1h-1zM667,475h1v1h-1zM675,475h1v1h-1zM683,475h1v1h-1zM692,475h1v1h-1zM700,475h1v1h-1zM708,475h1v1h-1zM717,475h1v1h-1zM725,475h1v1h-1zM733,475h1v1h-1zM742,475h1v1h-1zM750,475h1v1h-1zM758,475h1v1h-1zM767,475h1v1h-1zM775,475h1v1h-1zM784,475h1v1h-1zM792,475h1v1h-1zM800,475h1v1h-1zM809,475h1v1h-1zM817,475h1v1h-1zM825,475h1v1h-1zM834,475h1v1h-1zM508,490h1v1h-1zM516,490h1v1h-1zM525,490h1v1h-1zM533,490h1v1h-1zM541,490h1v1h-1zM550,490h1v1h-1zM558,490h1v1h-1zM566,490h1v1h-1zM575,490h1v1h-1zM583,490h1v1h-1zM591,490h1v1h-1zM600,490h1v1h-1zM608,490h1v1h-1zM617,490h1v1h-1zM625,490h1v1h-1zM633,490h1v1h-1zM642,490h1v1h-1zM650,490h1v1h-1zM658,490h1v1h-1zM667,490h1v1h-1zM675,490h1v1h-1zM683,490h1v1h-1zM692,490h1v1h-1zM700,490h1v1h-1zM708,490h1v1h-1zM717,490h1v1h-1zM725,490h1v1h-1zM733,490h1v1h-1zM742,490h1v1h-1zM750,490h1v1h-1zM758,490h1v1h-1zM767,490h1v1h-1zM775,490h1v1h-1zM784,490h1v1h-1zM792,490h1v1h-1zM800,490h1v1h-1zM809,490h1v1h-1zM817,490h1v1h-1zM825,490h1v1h-1zM834,490h1v1h-1zM508,504h1v1h-1zM516,504h1v1h-1zM525,504h1v1h-1zM533,504h1v1h-1zM541,504h1v1h-1zM550,504h1v1h-1zM558,504h1v1h-1zM566,504h1v1h-1zM575,504h1v1h-1zM583,504h1v1h-1zM591,504h1v1h-1zM600,504h1v1h-1zM608,504h1v1h-1zM617,504h1v1h-1zM625,504h1v1h-1zM633,504h1v1h-1zM642,504h1v1h-1zM650,504h1v1h-1zM658,504h1v1h-1zM667,504h1v1h-1zM675,504h1v1h-1zM683,504h1v1h-1zM692,504h1v1h-1zM700,504h1v1h-1zM708,504h1v1h-1zM717,504h1v1h-1zM725,504h1v1h-1zM733,504h1v1h-1zM742,504h1v1h-1zM750,504h1v1h-1zM758,504h1v1h-1zM767,504h1v1h-1zM775,504h1v1h-1zM784,504h1v1h-1zM792,504h1v1h-1zM800,504h1v1h-1zM809,504h1v1h-1zM817,504h1v1h-1zM825,504h1v1h-1zM834,504h1v1h-1zM508,519h1v1h-1zM516,519h1v1h-1zM525,519h1v1h-1zM533,519h1v1h-1zM541,519h1v1h-1zM550,519h1v1h-1zM558,519h1v1h-1zM566,519h1v1h-1zM575,519h1v1h-1zM583,519h1v1h-1zM591,519h1v1h-1zM600,519h1v1h-1zM608,519h1v1h-1zM617,519h1v1h-1zM625,519h1v1h-1zM633,519h1v1h-1zM642,519h1v1h-1zM650,519h1v1h-1zM658,519h1v1h-1zM667,519h1v1h-1zM675,519h1v1h-1zM683,519h1v1h-1zM692,519h1v1h-1zM700,519h1v1h-1zM708,519h1v1h-1zM717,519h1v1h-1zM725,519h1v1h-1zM733,519h1v1h-1zM742,519h1v1h-1zM750,519h1v1h-1zM758,519h1v1h-1zM767,519h1v1h-1zM775,519h1v1h-1zM784,519h1v1h-1zM792,519h1v1h-1zM800,519h1v1h-1zM809,519h1v1h-1zM817,519h1v1h-1zM825,519h1v1h-1zM834,519h1v1h-1zM550,417h1v1h-1zM550,420h1v1h-1zM550,423h1v1h-1zM550,426h1v1h-1zM550,428h1v1h-1zM550,431h1v1h-1zM550,434h1v1h-1zM550,437h1v1h-1zM550,440h1v1h-1zM550,443h1v1h-1zM550,446h1v1h-1zM550,449h1v1h-1zM550,452h1v1h-1zM550,455h1v1h-1zM550,458h1v1h-1zM550,461h1v1h-1zM550,464h1v1h-1zM550,466h1v1h-1zM550,469h1v1h-1zM550,472h1v1h-1zM550,475h1v1h-1zM550,478h1v1h-1zM550,481h1v1h-1zM550,484h1v1h-1zM550,487h1v1h-1zM550,490h1v1h-1zM550,493h1v1h-1zM550,496h1v1h-1zM550,499h1v1h-1zM550,501h1v1h-1zM550,504h1v1h-1zM550,507h1v1h-1zM550,510h1v1h-1zM550,513h1v1h-1zM550,516h1v1h-1zM550,519h1v1h-1zM550,522h1v1h-1zM550,525h1v1h-1zM550,528h1v1h-1zM550,531h1v1h-1zM591,417h1v1h-1zM591,420h1v1h-1zM591,423h1v1h-1zM591,426h1v1h-1zM591,428h1v1h-1zM591,431h1v1h-1zM591,434h1v1h-1zM591,437h1v1h-1zM591,440h1v1h-1zM591,443h1v1h-1zM591,446h1v1h-1zM591,449h1v1h-1zM591,452h1v1h-1zM591,455h1v1h-1zM591,458h1v1h-1zM591,461h1v1h-1zM591,464h1v1h-1zM591,466h1v1h-1zM591,469h1v1h-1zM591,472h1v1h-1zM591,475h1v1h-1zM591,478h1v1h-1zM591,481h1v1h-1zM591,484h1v1h-1zM591,487h1v1h-1zM591,490h1v1h-1zM591,493h1v1h-1zM591,496h1v1h-1zM591,499h1v1h-1zM591,501h1v1h-1zM591,504h1v1h-1zM591,507h1v1h-1zM591,510h1v1h-1zM591,513h1v1h-1zM591,516h1v1h-1zM591,519h1v1h-1zM591,522h1v1h-1zM591,525h1v1h-1zM591,528h1v1h-1zM591,531h1v1h-1zM633,417h1v1h-1zM633,420h1v1h-1zM633,423h1v1h-1zM633,426h1v1h-1zM633,428h1v1h-1zM633,431h1v1h-1zM633,434h1v1h-1zM633,437h1v1h-1zM633,440h1v1h-1zM633,443h1v1h-1zM633,446h1v1h-1zM633,449h1v1h-1zM633,452h1v1h-1zM633,455h1v1h-1zM633,458h1v1h-1zM633,461h1v1h-1zM633,464h1v1h-1zM633,466h1v1h-1zM633,469h1v1h-1zM633,472h1v1h-1zM633,475h1v1h-1zM633,478h1v1h-1zM633,481h1v1h-1zM633,484h1v1h-1zM633,487h1v1h-1zM633,490h1v1h-1zM633,493h1v1h-1zM633,496h1v1h-1zM633,499h1v1h-1zM633,501h1v1h-1zM633,504h1v1h-1zM633,507h1v1h-1zM633,510h1v1h-1zM633,513h1v1h-1zM633,516h1v1h-1zM633,519h1v1h-1zM633,522h1v1h-1zM633,525h1v1h-1zM633,528h1v1h-1zM633,531h1v1h-1zM675,417h1v1h-1zM675,420h1v1h-1zM675,423h1v1h-1zM675,426h1v1h-1zM675,428h1v1h-1zM675,431h1v1h-1zM675,434h1v1h-1zM675,437h1v1h-1zM675,440h1v1h-1zM675,443h1v1h-1zM675,446h1v1h-1zM675,449h1v1h-1zM675,452h1v1h-1zM675,455h1v1h-1zM675,458h1v1h-1zM675,461h1v1h-1zM675,464h1v1h-1zM675,466h1v1h-1zM675,469h1v1h-1zM675,472h1v1h-1zM675,475h1v1h-1zM675,478h1v1h-1zM675,481h1v1h-1zM675,484h1v1h-1zM675,487h1v1h-1zM675,490h1v1h-1zM675,493h1v1h-1zM675,496h1v1h-1zM675,499h1v1h-1zM675,501h1v1h-1zM675,504h1v1h-1zM675,507h1v1h-1zM675,510h1v1h-1zM675,513h1v1h-1zM675,516h1v1h-1zM675,519h1v1h-1zM675,522h1v1h-1zM675,525h1v1h-1zM675,528h1v1h-1zM675,531h1v1h-1zM717,417h1v1h-1zM717,420h1v1h-1zM717,423h1v1h-1zM717,426h1v1h-1zM717,428h1v1h-1zM717,431h1v1h-1zM717,434h1v1h-1zM717,437h1v1h-1zM717,440h1v1h-1zM717,443h1v1h-1zM717,446h1v1h-1zM717,449h1v1h-1zM717,452h1v1h-1zM717,455h1v1h-1zM717,458h1v1h-1zM717,461h1v1h-1zM717,464h1v1h-1zM717,466h1v1h-1zM717,469h1v1h-1zM717,472h1v1h-1zM717,475h1v1h-1zM717,478h1v1h-1zM717,481h1v1h-1zM717,484h1v1h-1zM717,487h1v1h-1zM717,490h1v1h-1zM717,493h1v1h-1zM717,496h1v1h-1zM717,499h1v1h-1zM717,501h1v1h-1zM717,504h1v1h-1zM717,507h1v1h-1zM717,510h1v1h-1zM717,513h1v1h-1zM717,516h1v1h-1zM717,519h1v1h-1zM717,522h1v1h-1zM717,525h1v1h-1zM717,528h1v1h-1zM717,531h1v1h-1zM758,417h1v1h-1zM758,420h1v1h-1zM758,423h1v1h-1zM758,426h1v1h-1zM758,428h1v1h-1zM758,431h1v1h-1zM758,434h1v1h-1zM758,437h1v1h-1zM758,440h1v1h-1zM758,443h1v1h-1zM758,446h1v1h-1zM758,449h1v1h-1zM758,452h1v1h-1zM758,455h1v1h-1zM758,458h1v1h-1zM758,461h1v1h-1zM758,464h1v1h-1zM758,466h1v1h-1zM758,469h1v1h-1zM758,472h1v1h-1zM758,475h1v1h-1zM758,478h1v1h-1zM758,481h1v1h-1zM758,484h1v1h-1zM758,487h1v1h-1zM758,490h1v1h-1zM758,493h1v1h-1zM758,496h1v1h-1zM758,499h1v1h-1zM758,501h1v1h-1zM758,504h1v1h-1zM758,507h1v1h-1zM758,510h1v1h-1zM758,513h1v1h-1zM758,516h1v1h-1zM758,519h1v1h-1zM758,522h1v1h-1zM758,525h1v1h-1zM758,528h1v1h-1zM758,531h1v1h-1zM800,417h1v1h-1zM800,420h1v1h-1zM800,423h1v1h-1zM800,426h1v1h-1zM800,428h1v1h-1zM800,431h1v1h-1zM800,434h1v1h-1zM800,437h1v1h-1zM800,440h1v1h-1zM800,443h1v1h-1zM800,446h1v1h-1zM800,449h1v1h-1zM800,452h1v1h-1zM800,455h1v1h-1zM800,458h1v1h-1zM800,461h1v1h-1zM800,464h1v1h-1zM800,466h1v1h-1zM800,469h1v1h-1zM800,472h1v1h-1zM800,475h1v1h-1zM800,478h1v1h-1zM800,481h1v1h-1zM800,484h1v1h-1zM800,487h1v1h-1zM800,490h1v1h-1zM800,493h1v1h-1zM800,496h1v1h-1zM800,499h1v1h-1zM800,501h1v1h-1zM800,504h1v1h-1zM800,507h1v1h-1zM800,510h1v1h-1zM800,513h1v1h-1zM800,516h1v1h-1zM800,519h1v1h-1zM800,522h1v1h-1zM800,525h1v1h-1zM800,528h1v1h-1zM800,531h1v1h-1z" fill="#c8c8c8"/><polyline points="649.2,475.5 649.5,475.5 649.8,475.5 650.1,475.4 650.4,475.4 650.7,475.4 651.0,475.3 651.3,475.3 651.6,475.3 651.9,475.3 652.2,475.3 652.5,475.2 652.8,475.2 653.1,475.2 653.4,475.2 653.7,475.2 654.0,475.2 654.3,475.2 654.6,475.2 654.9,475.2 655.2,475.2 655.5,475.2 655.8,475.2 656.1,475.2 656.4,475.2 656.7,475.2 657.0,475.2 657.3,475.2 657.7,475.2 658.0,475.2 658.3,475.1 658.6,475.1 658.9,475.1 659.2,475.1 659.5,475.1 659.8,475.0 660.1,475.0 660.4,475.0 660.7,474.9 661.0,474.9 661.3,474.9 661.6,474.8 661.9,474.8 662.2,474.7 662.5,474.7 662.8,474.6 663.1,474.5 663.4,474.5 663.7,474.4 664.0,474.4 664.3,474.3 664.6,474.2 664.9,474.1 665.2,474.0 665.5,473.9 665.8,473.9 666.1,473.8 666.4,473.7 666.7,473.6 667.0,473.5 667.3,473.3 667.6,473.2 667.9,473.1 668.2,473.0 668.5,472.9 668.9,472.7 669.2,472.6 669.5,472.5 669.8,472.3 670.1,472.2 670.4,472.0 670.7,471.9 671.0,471.7 671.3,471.6 671.6,471.4 671.9,471.2 672.2,471.1 672.5,470.9 672.8,470.7 673.1,470.5 673.4,470.3 673.7,470.2 674.0,470.0 674.3,469.8 674.6,469.6 674.9,469.4 675.2,469.2 675.5,469.0 675.8,468.7 676.1,468.5 676.4,468.3 676.7,468.1 677.0,467.9 677.3,467.6 677.6,467.4 677.9,467.2 678.2,466.9 678.5,466.7 678.8,466.4 679.1,466.2 679.4,466.0 679.7,465.7 680.1,465.4 680.4,465.2 680.7,464.9 681.0,464.7 681.3,464.4 681.6,464.1 681.9,463.9 682.2,463.6 682.5,463.3 682.8,463.1 683.1,462.8 683.4,462.5 683.7,462.2 684.0,461.9 684.3,461.7 684.6,461.4 684.9,461.1 685.2,460.8 685.5,460.5 685.8,460.2 686.1,459.9 686.4,459.7 686.7,459.4 687.0,459.1 687.3,458.8 687.6,458.5 687.9,458.2 688.2,457.9 688.5,457.6 688.8,457.3 689.1,457.0 689.4,456.7 689.7,456.4 690.0,456.1 690.3,455.8 690.6,455.5 690.9,455.2 691.3,454.9 691.6,454.6 691.9,454.4 692.2,454.1 692.5,453.8 692.8,453.5 693.1,453.2 693.4,452.9 693.7,452.6 694.0,452.3 694.3,452.0 694.6,451.8 694.9,451.5 695.2,451.2 695.5,450.9 695.8,450.6 696.1,450.4 696.4,450.1 696.7,449.8 697.0,449.6 697.3,449.3 697.6,449.0 697.9,448.8 698.2,448.5 698.5,448.3 698.8,448.0 699.1,447.8 699.4,447.5 699.7,447.3 700.0,447.0 700.3,446.8 700.6,446.5 700.9,446.3 701.2,446.1 701.5,445.9 701.8,445.6 702.1,445.4 702.5,445.2 702.8,445.0 703.1,444.8 703.4,444.6 703.7,444.4 704.0,444.2 704.3,444.0 704.6,443.8 704.9,443.6 705.2,443.4 705.5,443.3 705.8,443.1 706.1,442.9 706.4,442.8 706.7,442.6 707.0,442.5 707.3,442.3 707.6,442.2 707.9,442.0 708.2,441.9 708.5,441.8 708.8,441.6 709.1,441.5 709.4,441.4 709.7,441.3 710.0,441.2 710.3,441.1 710.6,441.0 710.9,440.9 711.2,440.8 711.5,440.8 711.8,440.7 712.1,440.6 712.4,440.5 712.7,440.5 713.0,440.4 713.3,440.4 713.7,440.3 714.0,440.3 714.3,440.3 714.6,440.3 714.9,440.2 715.2,440.2 715.5,440.2 715.8,440.2 716.1,440.2 716.4,440.2 716.7,440.2 717.0,440.2 717.3,440.3 717.6,440.3 717.9,440.3 718.2,440.4 718.5,440.4 718.8,440.4 719.1,440.5 719.4,440.6 719.7,440.6 720.0,440.7 720.3,440.8 720.6,440.9 720.9,440.9 721.2,441.0 721.5,441.1 721.8,441.2 722.1,441.3 722.4,441.4 722.7,441.6 723.0,441.7 723.3,441.8 723.6,441.9 723.9,442.1 724.2,442.2 724.5,442.4 724.9,442.5 725.2,442.7 725.5,442.8 725.8,443.0 726.1,443.1 726.4,443.3 726.7,443.5 727.0,443.7 727.3,443.9 727.6,444.0 727.9,444.2 728.2,444.4 728.5,444.6 728.8,444.8 729.1,445.0 729.4,445.3 729.7,445.5 730.0,445.7 730.3,445.9 730.6,446.1 730.9,446.4 731.2,446.6 731.5,446.8 731.8,447.1 732.1,447.3 732.4,447.6 732.7,447.8 733.0,448.1 733.3,448.3 733.6,448.6 733.9,448.8 734.2,449.1 734.5,449.4 734.8,449.6 735.1,449.9 735.4,450.2 735.7,450.4 736.1,450.7 736.4,451.0 736.7,451.3 737.0,451.6 736.9,451.8 736.6,452.1 736.3,452.4 736.0,452.7 735.7,453.0 735.4,453.3 735.1,453.6 734.8,453.9 734.5,454.1 734.2,454.4 733.9,454.7 733.6,455.0 733.3,455.3 733.0,455.6 732.7,455.9 732.4,456.2 732.1,456.5 731.8,456.8 731.5,457.1 731.2,457.4 730.9,457.7 730.6,458.0 730.3,458.3 730.0,458.6 729.7,458.9 729.4,459.2 729.1,459.4 728.8,459.7 728.5,460.0 728.2,460.3 727.9,460.6 727.6,460.9 727.3,461.2 726.9,461.5 726.6,461.7 726.3,462.0 726.0,462.3 725.7,462.6 725.4,462.9 725.1,463.1 724.8,463.4 724.5,463.7 724.2,464.0 723.9,464.2 723.6,464.5 723.3,464.7 723.0,465.0 722.7,465.3 722.4,465.5 722.1,465.8 721.8,466.0 721.5,466.3 721.2,466.5 720.9,466.8 720.6,467.0 720.3,467.2 720.0,467.5 719.7,467.7 719.4,467.9 719.1,468.1 718.8,468.4 718.5,468.6 718.2,468.8 717.9,469.0 717.6,469.2 717.3,469.4 717.0,469.6 716.7,469.8 716.4,470.0 716.1,470.2 715.7,470.4 715.4,470.6 715.1,470.8 714.8,470.9 714.5,471.1 714.2,471.3 713.9,471.4 713.6,471.6 713.3,471.8 713.0,471.9 712.7,472.1 712.4,472.2 712.1,472.4 711.8,472.5 711.5,472.6 711.2,472.8 710.9,472.9 710.6,473.0 710.3,473.1 710.0,473.3 709.7,473.4 709.4,473.5 709.1,473.6 708.8,473.7 708.5,473.8 708.2,473.9 707.9,474.0 707.6,474.1 707.3,474.1 707.0,474.2 706.7,474.3 706.4,474.4 706.1,474.4 705.8,474.5 705.5,474.6 705.2,474.6 704.9,474.7 704.5,474.7 704.2,474.8 703.9,474.8 703.6,474.9 703.3,474.9 703.0,474.9 702.7,475.0 702.4,475.0 702.1,475.0 701.8,475.1 701.5,475.1 701.2,475.1 700.9,475.1 700.6,475.1 700.3,475.2 700.0,475.2 699.7,475.2 699.4,475.2 699.1,475.2 698.8,475.2 698.5,475.2 698.2,475.2 697.9,475.2 697.6,475.2 697.3,475.2 697.0,475.2 696.7,475.2 696.4,475.2 696.1,475.2 695.8,475.2 695.5,475.2 695.2,475.2 694.9,475.2 694.6,475.3 694.3,475.3 694.0,475.3 693.7,475.3 693.3,475.3 693.0,475.4 692.7,475.4 692.4,475.4 692.1,475.5 691.8,475.5 691.5,475.5 691.2,475.6 690.9,475.6 690.6,475.7 690.3,475.7 690.0,475.8 689.7,475.9 689.4,475.9 689.1,476.0 688.8,476.1 688.5,476.1 688.2,476.2 687.9,476.3 687.6,476.4 687.3,476.5 687.0,476.6 686.7,476.6 686.4,476.7 686.1,476.9 685.8,477.0 685.5,477.1 685.2,477.2 684.9,477.3 684.6,477.4 684.3,477.5 684.0,477.7 683.7,477.8 683.4,477.9 683.1,478.1 682.8,478.2 682.5,478.4 682.1,478.5 681.8,478.7 681.5,478.9 681.2,479.0 680.9,479.2 680.6,479.4 680.3,479.5 680.0,479.7 679.7,479.9 679.4,480.1 679.1,480.3 678.8,480.5 678.5,480.6 678.2,480.8 677.9,481.1 677.6,481.3 677.3,481.5 677.0,481.7 676.7,481.9 676.4,482.1 676.1,482.3 675.8,482.6 675.5,482.8 675.2,483.0 674.9,483.3 674.6,483.5 674.3,483.7 674.0,484.0 673.7,484.2 673.4,484.5 673.1,484.7 672.8,485.0 672.5,485.2 672.2,485.5 671.9,485.8 671.6,486.0 671.3,486.3 670.9,486.6 670.6,486.8 670.3,487.1 670.0,487.4 669.7,487.6 669.4,487.9 669.1,488.2 668.8,488.5 668.5,488.8 668.2,489.0 667.9,489.3 667.6,489.6 667.3,489.9 667.0,490.2 666.7,490.5 666.4,490.8 666.1,491.1 665.8,491.4 665.5,491.7 665.2,491.9 664.9,492.2 664.6,492.5 664.3,492.8 664.0,493.1 663.7,493.4 663.4,493.7 663.1,494.0 662.8,494.3 662.5,494.6 662.2,494.9 661.9,495.2 661.6,495.5 661.3,495.8 661.0,496.1 660.7,496.4 660.4,496.7 660.1,496.9 659.7,497.2 659.4,497.5 659.1,497.8 658.8,498.1 658.5,498.4 658.2,498.7 657.9,498.9 657.6,499.2 657.3,499.5 657.0,499.8 656.7,500.1 656.4,500.3 656.1,500.6 655.8,500.9 655.5,501.1 655.2,501.4 654.9,501.7 654.6,501.9 654.3,502.2 654.0,502.4 653.7,502.7 653.4,502.9 653.1,503.2 652.8,503.4 652.5,503.6 652.2,503.9 651.9,504.1 651.6,504.3 651.3,504.6 651.0,504.8 650.7,505.0 650.4,505.2 650.1,505.4 649.8,505.6 649.5,505.8 649.2,506.0 648.9,506.2 648.5,506.4 648.2,506.6 647.9,506.8 647.6,507.0 647.3,507.1 647.0,507.3 646.7,507.5 646.4,507.6 646.1,507.8 645.8,508.0 645.5,508.1 645.2,508.2 644.9,508.4 644.6,508.5 644.3,508.6 644.0,508.8 643.7,508.9 643.4,509.0 643.1,509.1 642.8,509.2 642.5,509.3 642.2,509.4 641.9,509.5 641.6,509.6 641.3,509.7 641.0,509.7 640.7,509.8 640.4,509.9 640.1,509.9 639.8,510.0 639.5,510.0 639.2,510.1 638.9,510.1 638.6,510.1 638.3,510.2 638.0,510.2 637.7,510.2 637.3,510.2 637.0,510.2 636.7,510.2 636.4,510.2 636.1,510.2 635.8,510.2 635.5,510.1 635.2,510.1 634.9,510.1 634.6,510.0 634.3,510.0 634.0,509.9 633.7,509.9 633.4,509.8 633.1,509.8 632.8,509.7 632.5,509.6 632.2,509.5 631.9,509.5 631.6,509.4 631.3,509.3 631.0,509.2 630.7,509.1 630.4,508.9 630.1,508.8 629.8,508.7 629.5,508.6 629.2,508.5 628.9,508.3 628.6,508.2 628.3,508.0 628.0,507.9 627.7,507.7 627.4,507.6 627.1,507.4 626.8,507.2 626.5,507.1 626.1,506.9 625.8,506.7 625.5,506.5 625.2,506.3 624.9,506.1 624.6,505.9 624.3,505.7 624.0,505.5 623.7,505.3 623.4,505.1 623.1,504.9 622.8,504.7 622.5,504.5 622.2,504.2 621.9,504.0 621.6,503.8 621.3,503.5 621.0,503.3 620.7,503.0 620.4,502.8 620.1,502.6 619.8,502.3 619.5,502.0 619.2,501.8 618.9,501.5 618.6,501.3 618.3,501.0 618.0,500.7 617.7,500.5 617.4,500.2 617.1,499.9 616.8,499.6 616.5,499.4 616.2,499.1 615.9,498.8 615.6,498.5 615.3,498.2 614.9,498.0 614.6,497.7 614.3,497.4 614.0,497.1 613.7,496.8 613.4,496.5 613.1,496.2 612.8,495.9 612.5,495.6 612.2,495.3 612.3,495.1 612.6,494.8 612.9,494.5 613.2,494.2 613.5,493.9 613.8,493.6 614.1,493.3 614.4,493.0 614.7,492.7 615.0,492.4 615.3,492.1 615.6,491.8 615.9,491.5 616.2,491.2 616.5,490.9 616.8,490.6 617.1,490.3 617.4,490.1 617.7,489.8 618.0,489.5 618.3,489.2 618.6,488.9 618.9,488.6 619.2,488.3 619.5,488.1 619.8,487.8 620.1,487.5 620.5,487.2 620.8,487.0 621.1,486.7 621.4,486.4 621.7,486.2 622.0,485.9 622.3,485.6 622.6,485.4 622.9,485.1 623.2,484.9 623.5,484.6 623.8,484.4 624.1,484.1 624.4,483.9 624.7,483.6 625.0,483.4 625.3,483.1 625.6,482.9 625.9,482.7 626.2,482.5 626.5,482.2 626.8,482.0 627.1,481.8 627.4,481.6 627.7,481.4 628.0,481.2 628.3,481.0 628.6,480.8 628.9,480.6 629.2,480.4 629.5,480.2 629.8,480.0 630.1,479.8 630.4,479.6 630.7,479.4 631.0,479.3 631.3,479.1 631.7,478.9 632.0,478.8 632.3,478.6 632.6,478.5 632.9,478.3 633.2,478.2 633.5,478.0 633.8,477.9 634.1,477.7 634.4,477.6 634.7,477.5 635.0,477.4 635.3,477.2 635.6,477.1 635.9,477.0 636.2,476.9 636.5,476.8 636.8,476.7 637.1,476.6 637.4,476.5 637.7,476.4 638.0,476.3 638.3,476.2 638.6,476.2 638.9,476.1 639.2,476.0 639.5,476.0 639.8,475.9 640.1,475.8 640.4,475.8 640.7,475.7 641.0,475.7 641.3,475.6 641.6,475.6 641.9,475.5 642.2,475.5 642.5,475.4 642.9,475.4 643.2,475.4 643.5,475.4 643.8,475.3 644.1,475.3 644.4,475.3 644.7,475.3 645.0,475.3 645.3,475.2 645.6,475.2 645.9,475.2 646.2,475.2 646.5,475.2 646.8,475.2 647.1,475.2 647.4,475.2 647.7,475.2 648.0,475.2 648.3,475.2 648.6,475.2 648.9,475.2 649.2,475.2 649.5,475.2 649.8,475.2 650.1,475.2 650.4,475.2 650.7,475.2 651.0,475.1 651.3,475.1 651.6,475.1 651.9,475.1 652.2,475.1 652.5,475.0 652.8,475.0 653.1,475.0 653.4,474.9 653.7,474.9 654.1,474.9 654.4,474.8 654.7,474.8 655.0,474.7 655.3,474.7 655.6,474.6 655.9,474.5 656.2,474.5 656.5,474.4 656.8,474.3 657.1,474.3 657.4,474.2 657.7,474.1 658.0,474.0 658.3,473.9 658.6,473.8 658.9,473.7 659.2,473.6 659.5,473.5 659.8,473.4 660.1,473.3 660.4,473.2 660.7,473.1 661.0,473.0 661.3,472.8 661.6,472.7 661.9,472.6 662.2,472.4 662.5,472.3 662.8,472.2 663.1,472.0 663.4,471.8 663.7,471.7 664.0,471.5 664.3,471.4 664.6,471.2 664.9,471.0 665.3,470.9 665.6,470.7 665.9,470.5 666.2,470.3 666.5,470.1 666.8,469.9 667.1,469.7 667.4,469.5 667.7,469.3 668.0,469.1 668.3,468.9 668.6,468.7 668.9,468.5 669.2,468.3 669.5,468.0 669.8,467.8 670.1,467.6 670.4,467.4 670.7,467.1 671.0,466.9 671.3,466.6 671.6,466.4 671.9,466.1 672.2,465.9 672.5,465.6 672.8,465.4 673.1,465.1 673.4,464.9 673.7,464.6 674.0,464.4 674.3,464.1 674.6,463.8 674.9,463.6 675.2,463.3 675.5,463.0 675.8,462.7 676.1,462.5 676.5,462.2 676.8,461.9 677.1,461.6 677.4,461.3 677.7,461.0 678.0,460.8 678.3,460.5 678.6,460.2 678.9,459.9 679.2,459.6 679.5,459.3 679.8,459.0 680.1,458.7 680.4,458.4 680.7,458.1 681.0,457.8 681.3,457.5 681.6,457.2 681.9,456.9 682.2,456.7 682.5,456.4 682.8,456.1 683.1,455.8 683.4,455.5 683.7,455.2 684.0,454.9 684.3,454.6 684.6,454.3 684.9,454.0 685.2,453.7 685.5,453.4 685.8,453.1 686.1,452.8 686.4,452.6 686.7,452.3 687.0,452.0 687.3,451.7 687.7,451.4 688.0,451.1 688.3,450.9 688.6,450.6 688.9,450.3 689.2,450.0 689.5,449.8 689.8,449.5 690.1,449.2 690.4,449.0 690.7,448.7 691.0,448.5 691.3,448.2 691.6,448.0 691.9,447.7 692.2,447.5 692.5,447.2 692.8,447.0 693.1,446.7 693.4,446.5 693.7,446.3 694.0,446.0 694.3,445.8 694.6,445.6 694.9,445.4 695.2,445.2 695.5,444.9 695.8,444.7 696.1,444.5 696.4,444.3 696.7,444.1 697.0,444.0 697.3,443.8 697.6,443.6 697.9,443.4 698.2,443.2 698.5,443.1 698.9,442.9 699.2,442.7 699.5,442.6 699.8,442.4 700.1,442.3 700.4,442.1 700.7,442.0 701.0,441.9 701.3,441.7 701.6,441.6 701.9,441.5 702.2,441.4 702.5,441.3 702.8,441.2 703.1,441.1 703.4,441.0 703.7,440.9 704.0,440.8 704.3,440.7 704.6,440.7 704.9,440.6 705.2,440.5 705.5,440.5 705.8,440.4 706.1,440.4 706.4,440.3 706.7,440.3 707.0,440.3 707.3,440.2 707.6,440.2 707.9,440.2 708.2,440.2 708.5,440.2 708.8,440.2 709.1,440.2 709.4,440.2 709.7,440.2 710.1,440.3 710.4,440.3 710.7,440.3 711.0,440.4 711.3,440.4 711.6,440.5 711.9,440.5 712.2,440.6 712.5,440.6 712.8,440.7 713.1,440.8 713.4,440.9 713.7,441.0 714.0,441.0 714.3,441.1 714.6,441.2 714.9,441.4 715.2,441.5 715.5,441.6 715.8,441.7 716.1,441.8 716.4,442.0 716.7,442.1 717.0,442.2 717.3,442.4 717.6,442.5 717.9,442.7 718.2,442.8 718.5,443.0 718.8,443.2 719.1,443.4 719.4,443.5 719.7,443.7 720.0,443.9 720.3,444.1 720.6,444.3 720.9,444.5 721.3,444.7 721.6,444.9 721.9,445.1 722.2,445.3 722.5,445.5 722.8,445.7 723.1,446.0 723.4,446.2 723.7,446.4 724.0,446.7 724.3,446.9 724.6,447.1 724.9,447.4 725.2,447.6 725.5,447.9 725.8,448.1 726.1,448.4 726.4,448.6 726.7,448.9 727.0,449.2 727.3,449.4 727.6,449.7 727.9,450.0 728.2,450.2 728.5,450.5 728.8,450.8 729.1,451.1 729.4,451.3 729.7,451.6 730.0,451.9 730.3,452.2 730.6,452.5 730.9,452.8 731.2,453.0 731.5,453.3 731.8,453.6 732.1,453.9 732.5,454.2 732.8,454.5 733.1,454.8 733.4,455.1 733.7,455.4 734.0,455.7 734.3,456.0 734.6,456.3 734.9,456.6 735.2,456.9 735.5,457.2 735.8,457.4 736.1,457.7 736.4,458.0 736.7,458.3 737.0,458.6 736.9,458.9 736.6,459.2 736.3,459.5 736.0,459.8 735.7,460.1 735.4,460.4 735.1,460.7 734.8,460.9 734.5,461.2 734.2,461.5 733.9,461.8 733.6,462.1 733.3,462.4 733.0,462.6 732.7,462.9 732.4,463.2 732.1,463.5 731.8,463.7 731.5,464.0 731.2,464.3 730.9,464.5 730.5,464.8 730.2,465.1 729.9,465.3 729.6,465.6 729.3,465.8 729.0,466.1 728.7,466.3 728.4,466.6 728.1,466.8 727.8,467.0 727.5,467.3 727.2,467.5 726.9,467.7 726.6,468.0 726.3,468.2 726.0,468.4 725.7,468.6 725.4,468.8 725.1,469.1 724.8,469.3 724.5,469.5 724.2,469.7 723.9,469.9 723.6,470.1 723.3,470.3 723.0,470.4 722.7,470.6 722.4,470.8 722.1,471.0 721.8,471.1 721.5,471.3 721.2,471.5 720.9,471.6 720.6,471.8 720.3,472.0 720.0,472.1 719.7,472.3 719.3,472.4 719.0,472.5 718.7,472.7 718.4,472.8 718.1,472.9 717.8,473.0 717.5,473.2 717.2,473.3 716.9,473.4 716.6,473.5 716.3,473.6 716.0,473.7 715.7,473.8 715.4,473.9 715.1,474.0 714.8,474.1 714.5,474.2 714.2,474.2 713.9,474.3 713.6,474.4 713.3,474.5 713.0,474.5 712.7,474.6 712.4,474.6 712.1,474.7 711.8,474.7 711.5,474.8 711.2,474.8 710.9,474.9 710.6,474.9 710.3,475.0 710.0,475.0 709.7,475.0 709.4,475.0 709.1,475.1 708.8,475.1 708.5,475.1 708.1,475.1 707.8,475.1 707.5,475.2 707.2,475.2 706.9,475.2 706.6,475.2 706.3,475.2 706.0,475.2 705.7,475.2 705.4,475.2 705.1,475.2 704.8,475.2 704.5,475.2 704.2,475.2 703.9,475.2 703.6,475.2 703.3,475.2 703.0,475.2 702.7,475.2 702.4,475.2 702.1,475.3 701.8,475.3 701.5,475.3 701.2,475.3 700.9,475.3 700.6,475.3 700.3,475.4 700.0,475.4 699.7,475.4 699.4,475.5 699.1,475.5 698.8,475.6 698.5,475.6 698.2,475.6 697.9,475.7 697.6,475.8 697.3,475.8 696.9,475.9 696.6,475.9 696.3,476.0 696.0,476.1 695.7,476.1 695.4,476.2 695.1,476.3 694.8,476.4 694.5,476.5 694.2,476.6 693.9,476.7 693.6,476.8 693.3,476.9 693.0,477.0 692.7,477.1 692.4,477.2 692.1,477.3 691.8,477.4 691.5,477.6 691.2,477.7 690.9,477.8 690.6,478.0 690.3,478.1 690.0,478.3 689.7,478.4 689.4,478.6 689.1,478.7 688.8,478.9 688.5,479.0 688.2,479.2 687.9,479.4 687.6,479.6 687.3,479.7 687.0,479.9 686.7,480.1 686.4,480.3 686.1,480.5 685.7,480.7 685.4,480.9 685.1,481.1 684.8,481.3 684.5,481.5 684.2,481.7 683.9,481.9 683.6,482.2 683.3,482.4 683.0,482.6 682.7,482.8 682.4,483.1 682.1,483.3 681.8,483.5 681.5,483.8 681.2,484.0 680.9,484.3 680.6,484.5 680.3,484.8 680.0,485.0 679.7,485.3 679.4,485.5 679.1,485.8 678.8,486.1 678.5,486.3 678.2,486.6 677.9,486.9 677.6,487.1 677.3,487.4 677.0,487.7 676.7,488.0 676.4,488.3 676.1,488.5 675.8,488.8 675.5,489.1 675.2,489.4 674.9,489.7 674.5,490.0 674.2,490.3 673.9,490.5 673.6,490.8 673.3,491.1 673.0,491.4 672.7,491.7 672.4,492.0 672.1,492.3 671.8,492.6 671.5,492.9 671.2,493.2 670.9,493.5 670.6,493.8 670.3,494.1 670.0,494.4 669.7,494.7 669.4,495.0 669.1,495.3 668.8,495.5 668.5,495.8 668.2,496.1 667.9,496.4 667.6,496.7 667.3,497.0 667.0,497.3 666.7,497.6 666.4,497.9 666.1,498.2 665.8,498.4 665.5,498.7 665.2,499.0 664.9,499.3 664.6,499.6 664.3,499.8 664.0,500.1 663.7,500.4 663.3,500.7 663.0,500.9 662.7,501.2 662.4,501.4 662.1,501.7 661.8,502.0 661.5,502.2 661.2,502.5 660.9,502.7 660.6,503.0 660.3,503.2 660.0,503.5 659.7,503.7 659.4,503.9 659.1,504.2 658.8,504.4 658.5,504.6 658.2,504.8 657.9,505.1 657.6,505.3 657.3,505.5 657.0,505.7 656.7,505.9 656.4,506.1 656.1,506.3 655.8,506.5 655.5,506.7 655.2,506.8 654.9,507.0 654.6,507.2 654.3,507.4 654.0,507.5 653.7,507.7 653.4,507.8 653.1,508.0 652.8,508.1 652.5,508.3 652.2,508.4 651.8,508.5 651.5,508.7 651.2,508.8 650.9,508.9 650.6,509.0 650.3,509.1 650.0,509.2 649.7,509.3 649.4,509.4 649.1,509.5 648.8,509.6 648.5,509.7 648.2,509.7 647.9,509.8 647.6,509.9 647.3,509.9 647.0,510.0 646.7,510.0 646.4,510.1 646.1,510.1 645.8,510.1 645.5,510.2 645.2,510.2 644.9,510.2 644.6,510.2 644.3,510.2 644.0,510.2 643.7,510.2 643.4,510.2 643.1,510.2 642.8,510.1 642.5,510.1 642.2,510.1 641.9,510.0 641.6,510.0 641.3,509.9 641.0,509.9 640.6,509.8 640.3,509.8 640.0,509.7 639.7,509.6 639.4,509.5 639.1,509.4 638.8,509.3 638.5,509.2 638.2,509.1 637.9,509.0 637.6,508.9 637.3,508.8 637.0,508.7 636.7,508.6 636.4,508.4 636.1,508.3 635.8,508.1 635.5,508.0 635.2,507.9 634.9,507.7 634.6,507.5 634.3,507.4 634.0,507.2 633.7,507.0 633.4,506.9 633.1,506.7 632.8,506.5 632.5,506.3 632.2,506.1 631.9,505.9 631.6,505.7 631.3,505.5 631.0,505.3 630.7,505.1 630.4,504.9 630.1,504.6 629.8,504.4 629.4,504.2 629.1,504.0 628.8,503.7 628.5,503.5 628.2,503.2 627.9,503.0 627.6,502.8 627.3,502.5 627.0,502.3 626.7,502.0 626.4,501.7 626.1,501.5 625.8,501.2 625.5,501.0 625.2,500.7 624.9,500.4 624.6,500.1 624.3,499.9 624.0,499.6 623.7,499.3 623.4,499.0 623.1,498.8 622.8,498.5 622.5,498.2 622.2,497.9 621.9,497.6 621.6,497.3 621.3,497.0 621.0,496.7 620.7,496.5 620.4,496.2 620.1,495.9 619.8,495.6 619.5,495.3 619.2,495.0 618.9,494.7 618.6,494.4 618.2,494.1 617.9,493.8 617.6,493.5 617.3,493.2 617.0,492.9 616.7,492.6 616.4,492.3 616.1,492.0 615.8,491.7 615.5,491.5 615.2,491.2 614.9,490.9 614.6,490.6 614.3,490.3 614.0,490.0 613.7,489.7 613.4,489.4 613.1,489.1 612.8,488.9 612.5,488.6 612.2,488.3 612.3,488.0 612.6,487.7 612.9,487.5 613.2,487.2 613.5,486.9 613.8,486.6 614.1,486.4 614.4,486.1 614.7,485.8 615.0,485.6 615.3,485.3 615.6,485.1 615.9,484.8 616.2,484.6 616.5,484.3 616.8,484.1 617.2,483.8 617.5,483.6 617.8,483.3 618.1,483.1 618.4,482.9 618.7,482.6 619.0,482.4 619.3,482.2 619.6,482.0 619.9,481.7 620.2,481.5 620.5,481.3 620.8,481.1 621.1,480.9 621.4,480.7 621.7,480.5 622.0,480.3 622.3,480.1 622.6,479.9 622.9,479.8 623.2,479.6 623.5,479.4 623.8,479.2 624.1,479.1 624.4,478.9 624.7,478.7 625.0,478.6 625.3,478.4 625.6,478.3 625.9,478.1 626.2,478.0 626.5,477.9 626.8,477.7 627.1,477.6 627.4,477.5 627.7,477.3 628.0,477.2 628.4,477.1 628.7,477.0 629.0,476.9 629.3,476.8 629.6,476.7 629.9,476.6 630.2,476.5 630.5,476.4 630.8,476.3 631.1,476.2 631.4,476.2 631.7,476.1 632.0,476.0 632.3,475.9 632.6,475.9 632.9,475.8 633.2,475.8 633.5,475.7 633.8,475.7 634.1,475.6 634.4,475.6 634.7,475.5 635.0,475.5 635.3,475.4 635.6,475.4 635.9,475.4 636.2,475.4 636.5,475.3 636.8,475.3 637.1,475.3 637.4,475.3 637.7,475.3 638.0,475.2 638.3,475.2 638.6,475.2 638.9,475.2 639.2,475.2 639.6,475.2 639.9,475.2 640.2,475.2 640.5,475.2 640.8,475.2 641.1,475.2 641.4,475.2 641.7,475.2 642.0,475.2 642.3,475.2 642.6,475.2 642.9,475.2 643.2,475.2 643.5,475.1 643.8,475.1 644.1,475.1 644.4,475.1 644.7,475.1 645.0,475.0 645.3,475.0 645.6,475.0 645.9,475.0 646.2,474.9 646.5,474.9 646.8,474.8 647.1,474.8 647.4,474.7 647.7,474.7 648.0,474.6 648.3,474.6 648.6,474.5 648.9,474.5 649.2,474.4 649.5,474.3 649.8,474.2 650.1,474.2 650.4,474.1 650.8,474.0 651.1,473.9 651.4,473.8 651.7,473.7 652.0,473.6 652.3,473.5 652.6,473.4 652.9,473.3 653.2,473.2 653.5,473.1 653.8,472.9 654.1,472.8 654.4,472.7 654.7,472.5 655.0,472.4 655.3,472.3 655.6,472.1 655.9,472.0 656.2,471.8 656.5,471.7 656.8,471.5 657.1,471.3 657.4,471.2 657.7,471.0 658.0,470.8 658.3,470.6 658.6,470.5 658.9,470.3 659.2,470.1 659.5,469.9 659.8,469.7 660.1,469.5 660.4,469.3 660.7,469.1 661.0,468.9 661.3,468.7 661.6,468.4 662.0,468.2 662.3,468.0 662.6,467.8 662.9,467.5 663.2,467.3 663.5,467.1 663.8,466.8 664.1,466.6 664.4,466.3 664.7,466.1 665.0,465.8 665.3,465.6 665.6,465.3 665.9,465.1 666.2,464.8 666.5,464.6 666.8,464.3 667.1,464.0 667.4,463.8 667.7,463.5 668.0,463.2 668.3,462.9 668.6,462.7 668.9,462.4 669.2,462.1 669.5,461.8 669.8,461.6 670.1,461.3 670.4,461.0 670.7,460.7 671.0,460.4 671.3,460.1 671.6,459.8 671.9,459.5 672.2,459.2 672.5,459.0 672.8,458.7 673.2,458.4 673.5,458.1 673.8,457.8 674.1,457.5 674.4,457.2 674.7,456.9 675.0,456.6 675.3,456.3 675.6,456.0 675.9,455.7 676.2,455.4 676.5,455.1 676.8,454.8 677.1,454.5 677.4,454.2 677.7,453.9 678.0,453.7 678.3,453.4 678.6,453.1 678.9,452.8 679.2,452.5 679.5,452.2 679.8,451.9 680.1,451.6 680.4,451.4 680.7,451.1 681.0,450.8 681.3,450.5 681.6,450.3 681.9,450.0 682.2,449.7 682.5,449.5 682.8,449.2 683.1,448.9 683.4,448.7 683.7,448.4 684.0,448.2 684.4,447.9 684.7,447.6 685.0,447.4 685.3,447.2 685.6,446.9 685.9,446.7 686.2,446.4 686.5,446.2 686.8,446.0 687.1,445.8 687.4,445.5 687.7,445.3 688.0,445.1 688.3,444.9 688.6,444.7 688.9,444.5 689.2,444.3 689.5,444.1 689.8,443.9 690.1,443.7 690.4,443.5 690.7,443.4 691.0,443.2 691.3,443.0 691.6,442.9 691.9,442.7 692.2,442.6 692.5,442.4 692.8,442.3 693.1,442.1 693.4,442.0 693.7,441.8 694.0,441.7 694.3,441.6 694.6,441.5 694.9,441.4 695.2,441.3 695.6,441.2 695.9,441.1 696.2,441.0 696.5,440.9 696.8,440.8 697.1,440.7 697.4,440.6 697.7,440.6 698.0,440.5 698.3,440.5 698.6,440.4 698.9,440.4 699.2,440.3 699.5,440.3 699.8,440.3 700.1,440.2 700.4,440.2 700.7,440.2 701.0,440.2 701.3,440.2 701.6,440.2 701.9,440.2 702.2,440.2 702.5,440.2 702.8,440.3 703.1,440.3 703.4,440.3 703.7,440.4 704.0,440.4 704.3,440.5 704.6,440.5 704.9,440.6 705.2,440.7 705.5,440.7 705.8,440.8 706.1,440.9 706.4,441.0 706.8,441.1 707.1,441.2 707.4,441.3 707.7,441.4 708.0,441.5 708.3,441.6 708.6,441.7 708.9,441.9 709.2,442.0 709.5,442.1 709.8,442.3 710.1,442.4 710.4,442.6 710.7,442.7 711.0,442.9 711.3,443.0 711.6,443.2 711.9,443.4 712.2,443.6 712.5,443.7 712.8,443.9 713.1,444.1 713.4,444.3 713.7,444.5 714.0,444.7 714.3,444.9 714.6,445.1 714.9,445.3 715.2,445.6 715.5,445.8 715.8,446.0 716.1,446.2 716.4,446.5 716.7,446.7 717.0,446.9 717.3,447.2 717.6,447.4 718.0,447.7 718.3,447.9 718.6,448.2 718.9,448.4 719.2,448.7 719.5,448.9 719.8,449.2 720.1,449.5 720.4,449.7 720.7,450.0 721.0,450.3 721.3,450.6 721.6,450.8 721.9,451.1 722.2,451.4 722.5,451.7 722.8,452.0 723.1,452.2 723.4,452.5 723.7,452.8 724.0,453.1 724.3,453.4 724.6,453.7 724.9,454.0 725.2,454.3 725.5,454.6 725.8,454.9 726.1,455.1 726.4,455.4 726.7,455.7 727.0,456.0 727.3,456.3 727.6,456.6 727.9,456.9 728.2,457.2 728.5,457.5 728.8,457.8 729.2,458.1 729.5,458.4 729.8,458.7 730.1,459.0 730.4,459.3 730.7,459.6 731.0,459.9 731.3,460.1 731.6,460.4 731.9,460.7 732.2,461.0 732.5,461.3 732.8,461.6 733.1,461.9 733.4,462.1 733.7,462.4 734.0,462.7 734.3,463.0 734.6,463.2 734.9,463.5 735.2,463.8 735.5,464.1 735.8,464.3 736.1,464.6 736.4,464.9 736.7,465.1 737.0,465.4 736.9,465.6 736.6,465.9 736.3,466.1 736.0,466.4 735.7,466.6 735.4,466.9 735.1,467.1 734.8,467.3 734.5,467.6 734.2,467.8 733.8,468.0 733.5,468.2 733.2,468.5 732.9,468.7 732.6,468.9 732.3,469.1 732.0,469.3 731.7,469.5 731.4,469.7 731.1,469.9 730.8,470.1 730.5,470.3 730.2,470.5 729.9,470.7 729.6,470.8 729.3,471.0 729.0,471.2 728.7,471.4 728.4,471.5 728.1,471.7 727.8,471.8 727.5,472.0 727.2,472.1 726.9,472.3 726.6,472.4 726.3,472.6 726.0,472.7 725.7,472.8 725.4,473.0 725.1,473.1 724.8,473.2 724.5,473.3 724.2,473.4 723.9,473.5 723.6,473.6 723.3,473.7 723.0,473.8 722.6,473.9 722.3,474.0 722.0,474.1 721.7,474.2 721.4,474.3 721.1,474.3 720.8,474.4 720.5,474.5 720.2,474.5 719.9,474.6 719.6,474.6 719.3,474.7 719.0,474.8 718.7,474.8 718.4,474.8 718.1,474.9 717.8,474.9 717.5,475.0 717.2,475.0 716.9,475.0 716.6,475.1 716.3,475.1 716.0,475.1 715.7,475.1 715.4,475.1 715.1,475.1 714.8,475.2 714.5,475.2 714.2,475.2 713.9,475.2 713.6,475.2 713.3,475.2 713.0,475.2 712.7,475.2 712.4,475.2 712.1,475.2 711.8,475.2 711.4,475.2 711.1,475.2 710.8,475.2 710.5,475.2 710.2,475.2 709.9,475.2 709.6,475.2 709.3,475.3 709.0,475.3 708.7,475.3 708.4,475.3 708.1,475.3 707.8,475.4 707.5,475.4 707.2,475.4 706.9,475.4 706.6,475.5 706.3,475.5 706.0,475.6 705.7,475.6 705.4,475.7 705.1,475.7 704.8,475.8 704.5,475.8 704.2,475.9 703.9,475.9 703.6,476.0 703.3,476.1 703.0,476.2 702.7,476.2 702.4,476.3 702.1,476.4 701.8,476.5 701.5,476.6 701.2,476.7 700.9,476.8 700.6,476.9 700.2,477.0 699.9,477.1 699.6,477.2 699.3,477.4 699.0,477.5 698.7,477.6 698.4,477.7 698.1,477.9 697.8,478.0 697.5,478.1 697.2,478.3 696.9,478.4 696.6,478.6 696.3,478.8 696.0,478.9 695.7,479.1 695.4,479.2 695.1,479.4 694.8,479.6 694.5,479.8 694.2,480.0 693.9,480.1 693.6,480.3 693.3,480.5 693.0,480.7 692.7,480.9 692.4,481.1 692.1,481.3 691.8,481.6 691.5,481.8 691.2,482.0 690.9,482.2 690.6,482.4 690.3,482.7 690.0,482.9 689.7,483.1 689.4,483.4 689.0,483.6 688.7,483.8 688.4,484.1 688.1,484.3 687.8,484.6 687.5,484.8 687.2,485.1 686.9,485.3 686.6,485.6 686.3,485.9 686.0,486.1 685.7,486.4 685.4,486.7 685.1,486.9 684.8,487.2 684.5,487.5 684.2,487.8 683.9,488.0 683.6,488.3 683.3,488.6 683.0,488.9 682.7,489.2 682.4,489.4 682.1,489.7 681.8,490.0 681.5,490.3 681.2,490.6 680.9,490.9 680.6,491.2 680.3,491.5 680.0,491.8 679.7,492.1 679.4,492.4 679.1,492.7 678.8,493.0 678.5,493.2 678.2,493.5 677.8,493.8 677.5,494.1 677.2,494.4 676.9,494.7 676.6,495.0 676.3,495.3 676.0,495.6 675.7,495.9 675.4,496.2 675.1,496.5 674.8,496.8 674.5,497.1 674.2,497.4 673.9,497.6 673.6,497.9 673.3,498.2 673.0,498.5 672.7,498.8 672.4,499.1 672.1,499.3 671.8,499.6 671.5,499.9 671.2,500.2 670.9,500.4 670.6,500.7 670.3,501.0 670.0,501.2 669.7,501.5 669.4,501.8 669.1,502.0 668.8,502.3 668.5,502.5 668.2,502.8 667.9,503.0 667.6,503.3 667.3,503.5 667.0,503.7 666.6,504.0 666.3,504.2 666.0,504.4 665.7,504.7 665.4,504.9 665.1,505.1 664.8,505.3 664.5,505.5 664.2,505.7 663.9,505.9 663.6,506.1 663.3,506.3 663.0,506.5 662.7,506.7 662.4,506.9 662.1,507.0 661.8,507.2 661.5,507.4 661.2,507.6 660.9,507.7 660.6,507.9 660.3,508.0 660.0,508.2 659.7,508.3 659.4,508.4 659.1,508.6 658.8,508.7 658.5,508.8 658.2,508.9 657.9,509.0 657.6,509.2 657.3,509.3 657.0,509.4 656.7,509.4 656.4,509.5 656.1,509.6 655.8,509.7 655.4,509.8 655.1,509.8 654.8,509.9 654.5,509.9 654.2,510.0 653.9,510.0 653.6,510.1 653.3,510.1 653.0,510.1 652.7,510.2 652.4,510.2 652.1,510.2 651.8,510.2 651.5,510.2 651.2,510.2 650.9,510.2 650.6,510.2 650.3,510.2 650.0,510.1 649.7,510.1 649.4,510.1 649.1,510.0 648.8,510.0 648.5,509.9 648.2,509.9 647.9,509.8 647.6,509.7 647.3,509.7 647.0,509.6 646.7,509.5 646.4,509.4 646.1,509.3 645.8,509.2 645.5,509.1 645.2,509.0 644.9,508.9 644.6,508.8 644.2,508.7 643.9,508.5 643.6,508.4 643.3,508.3 643.0,508.1 642.7,508.0 642.4,507.8 642.1,507.7 641.8,507.5 641.5,507.3 641.2,507.2 640.9,507.0 640.6,506.8 640.3,506.6 640.0,506.4 639.7,506.3 639.4,506.1 639.1,505.9 638.8,505.7 638.5,505.5 638.2,505.2 637.9,505.0 637.6,504.8 637.3,504.6 637.0,504.4 636.7,504.1 636.4,503.9 636.1,503.7 635.8,503.4 635.5,503.2 635.2,502.9 634.9,502.7 634.6,502.5 634.3,502.2 634.0,501.9 633.7,501.7 633.4,501.4 633.0,501.2 632.7,500.9 632.4,500.6 632.1,500.4 631.8,500.1 631.5,499.8 631.2,499.5 630.9,499.3 630.6,499.0 630.3,498.7 630.0,498.4 629.7,498.1 629.4,497.8 629.1,497.6 628.8,497.3 628.5,497.0 628.2,496.7 627.9,496.4 627.6,496.1 627.3,495.8 627.0,495.5 626.7,495.2 626.4,494.9 626.1,494.6 625.8,494.3 625.5,494.0 625.2,493.7 624.9,493.5 624.6,493.2 624.3,492.9 624.0,492.6 623.7,492.3 623.4,492.0 623.1,491.7 622.8,491.4 622.5,491.1 622.2,490.8 621.8,490.5 621.5,490.2 621.2,489.9 620.9,489.6 620.6,489.4 620.3,489.1 620.0,488.8 619.7,488.5 619.4,488.2 619.1,488.0 618.8,487.7 618.5,487.4 618.2,487.1 617.9,486.9 617.6,486.6 617.3,486.3 617.0,486.0 616.7,485.8 616.4,485.5 616.1,485.3 615.8,485.0 615.5,484.8 615.2,484.5 614.9,484.3 614.6,484.0 614.3,483.8 614.0,483.5 613.7,483.3 613.4,483.0 613.1,482.8 612.8,482.6 612.5,482.4 612.2,482.1 612.3,481.9 612.6,481.7 612.9,481.5 613.2,481.3 613.6,481.1 613.9,480.9 614.2,480.7 614.5,480.5 614.8,480.3 615.1,480.1 615.4,479.9 615.7,479.7 616.0,479.5 616.3,479.4 616.6,479.2 616.9,479.0 617.2,478.9 617.5,478.7 617.8,478.6 618.1,478.4 618.4,478.3 618.7,478.1 619.0,478.0 619.3,477.8 619.6,477.7 619.9,477.6 620.2,477.4 620.5,477.3 620.8,477.2 621.1,477.1 621.4,477.0 621.7,476.9 622.0,476.8 622.3,476.7 622.6,476.6 622.9,476.5 623.2,476.4 623.5,476.3 623.8,476.2 624.1,476.1 624.4,476.1 624.8,476.0 625.1,475.9 625.4,475.9 625.7,475.8 626.0,475.7 626.3,475.7 626.6,475.6 626.9,475.6 627.2,475.5 627.5,475.5 627.8,475.5 628.1,475.4 628.4,475.4 628.7,475.4 629.0,475.3 629.3,475.3 629.6,475.3 629.9,475.3 630.2,475.3 630.5,475.3 630.8,475.2 631.1,475.2 631.4,475.2 631.7,475.2 632.0,475.2 632.3,475.2 632.6,475.2 632.9,475.2 633.2,475.2 633.5,475.2 633.8,475.2 634.1,475.2 634.4,475.2 634.7,475.2 635.0,475.2 635.3,475.2 635.6,475.2 636.0,475.2 636.3,475.1 636.6,475.1 636.9,475.1 637.2,475.1 637.5,475.1 637.8,475.0 638.1,475.0 638.4,475.0 638.7,475.0 639.0,474.9 639.3,474.9 639.6,474.8 639.9,474.8 640.2,474.7 640.5,474.7 640.8,474.6 641.1,474.6 641.4,474.5 641.7,474.4 642.0,474.4 642.3,474.3 642.6,474.2 642.9,474.2 643.2,474.1 643.5,474.0 643.8,473.9 644.1,473.8 644.4,473.7 644.7,473.6 645.0,473.5 645.3,473.4 645.6,473.3 645.9,473.2 646.2,473.0 646.5,472.9 646.8,472.8 647.2,472.7 647.5,472.5 647.8,472.4 648.1,472.2 648.4,472.1 648.7,471.9 649.0,471.8 649.3,471.6 649.6,471.5 649.9,471.3 650.2,471.1 650.5,471.0 650.8,470.8 651.1,470.6 651.4,470.4 651.7,470.2 652.0,470.0 652.3,469.8 652.6,469.7 652.9,469.4 653.2,469.2 653.5,469.0 653.8,468.8 654.1,468.6 654.4,468.4 654.7,468.2 655.0,467.9 655.3,467.7 655.6,467.5 655.9,467.3 656.2,467.0 656.5,466.8 656.8,466.5 657.1,466.3 657.4,466.0 657.7,465.8 658.0,465.5 658.4,465.3 658.7,465.0 659.0,464.8 659.3,464.5 659.6,464.2 659.9,464.0 660.2,463.7 660.5,463.4 660.8,463.2 661.1,462.9 661.4,462.6 661.7,462.3 662.0,462.1 662.3,461.8 662.6,461.5 662.9,461.2 663.2,460.9 663.5,460.6 663.8,460.3 664.1,460.1 664.4,459.8 664.7,459.5 665.0,459.2 665.3,458.9 665.6,458.6 665.9,458.3 666.2,458.0 666.5,457.7 666.8,457.4 667.1,457.1 667.4,456.8 667.7,456.5 668.0,456.2 668.3,455.9 668.6,455.6 668.9,455.4 669.2,455.1 669.6,454.8 669.9,454.5 670.2,454.2 670.5,453.9 670.8,453.6 671.1,453.3 671.4,453.0 671.7,452.7 672.0,452.4 672.3,452.2 672.6,451.9 672.9,451.6 673.2,451.3 673.5,451.0 673.8,450.8 674.1,450.5 674.4,450.2 674.7,449.9 675.0,449.7 675.3,449.4 675.6,449.1 675.9,448.9 676.2,448.6 676.5,448.4 676.8,448.1 677.1,447.8 677.4,447.6 677.7,447.4 678.0,447.1 678.3,446.9 678.6,446.6 678.9,446.4 679.2,446.2 679.5,445.9 679.8,445.7 680.1,445.5 680.4,445.3 680.8,445.1 681.1,444.9 681.4,444.7 681.7,444.5 682.0,444.3 682.3,444.1 682.6,443.9 682.9,443.7 683.2,443.5 683.5,443.3 683.8,443.2 684.1,443.0 684.4,442.8 684.7,442.7 685.0,442.5 685.3,442.4 685.6,442.2 685.9,442.1 686.2,441.9 686.5,441.8 686.8,441.7 687.1,441.6 687.4,441.5 687.7,441.3 688.0,441.2 688.3,441.1 688.6,441.0 688.9,440.9 689.2,440.9 689.5,440.8 689.8,440.7 690.1,440.6 690.4,440.6 690.7,440.5 691.0,440.5 691.3,440.4 691.6,440.4 692.0,440.3 692.3,440.3 692.6,440.3 692.9,440.2 693.2,440.2 693.5,440.2 693.8,440.2 694.1,440.2 694.4,440.2 694.7,440.2 695.0,440.2 695.3,440.2 695.6,440.3 695.9,440.3 696.2,440.3 696.5,440.4 696.8,440.4 697.1,440.5 697.4,440.5 697.7,440.6 698.0,440.7 698.3,440.7 698.6,440.8 698.9,440.9 699.2,441.0 699.5,441.1 699.8,441.2 700.1,441.3 700.4,441.4 700.7,441.5 701.0,441.6 701.3,441.8 701.6,441.9 701.9,442.0 702.2,442.2 702.5,442.3 702.8,442.4 703.2,442.6 703.5,442.8 703.8,442.9 704.1,443.1 704.4,443.2 704.7,443.4 705.0,443.6 705.3,443.8 705.6,444.0 705.9,444.2 706.2,444.4 706.5,444.6 706.8,444.8 707.1,445.0 707.4,445.2 707.7,445.4 708.0,445.6 708.3,445.8 708.6,446.1 708.9,446.3 709.2,446.5 709.5,446.8 709.8,447.0 710.1,447.2 710.4,447.5 710.7,447.7 711.0,448.0 711.3,448.2 711.6,448.5 711.9,448.7 712.2,449.0 712.5,449.3 712.8,449.5 713.1,449.8 713.4,450.1 713.7,450.3 714.0,450.6 714.4,450.9 714.7,451.2 715.0,451.4 715.3,451.7 715.6,452.0 715.9,452.3 716.2,452.6 716.5,452.9 716.8,453.2 717.1,453.4 717.4,453.7 717.7,454.0 718.0,454.3 718.3,454.6 718.6,454.9 718.9,455.2 719.2,455.5 719.5,455.8 719.8,456.1 720.1,456.4 720.4,456.7 720.7,457.0 721.0,457.3 721.3,457.6 721.6,457.9 721.9,458.2 722.2,458.5 722.5,458.7 722.8,459.0 723.1,459.3 723.4,459.6 723.7,459.9 724.0,460.2 724.3,460.5 724.6,460.8 724.9,461.1 725.2,461.4 725.6,461.6 725.9,461.9 726.2,462.2 726.5,462.5 726.8,462.8 727.1,463.0 727.4,463.3 727.7,463.6 728.0,463.8 728.3,464.1 728.6,464.4 728.9,464.6 729.2,464.9 729.5,465.2 729.8,465.4 730.1,465.7 730.4,465.9 730.7,466.2 731.0,466.4 731.3,466.7 731.6,466.9 731.9,467.1 732.2,467.4 732.5,467.6 732.8,467.8 733.1,468.1 733.4,468.3 733.7,468.5 734.0,468.7 734.3,468.9 734.6,469.1 734.9,469.3 735.2,469.6 735.5,469.8 735.8,469.9 736.1,470.1 736.4,470.3 736.8,470.5 737.1,470.7 736.8,470.9 736.5,471.0 736.2,471.2 735.9,471.4 735.6,471.5 735.3,471.7 735.0,471.9 734.7,472.0 734.4,472.2 734.1,472.3 733.8,472.5 733.5,472.6 733.2,472.7 732.9,472.9 732.6,473.0 732.3,473.1 732.0,473.2 731.7,473.3 731.4,473.4 731.1,473.5 730.8,473.7 730.5,473.7 730.2,473.8 729.9,473.9 729.6,474.0 729.3,474.1 729.0,474.2 728.7,474.3 728.4,474.3 728.1,474.4 727.8,474.5 727.5,474.5 727.2,474.6 726.9,474.7 726.6,474.7 726.2,474.8 725.9,474.8 725.6,474.9 725.3,474.9 725.0,474.9 724.7,475.0 724.4,475.0 724.1,475.0 723.8,475.1 723.5,475.1 723.2,475.1 722.9,475.1 722.6,475.1 722.3,475.2 722.0,475.2 721.7,475.2 721.4,475.2 721.1,475.2 720.8,475.2 720.5,475.2 720.2,475.2 719.9,475.2 719.6,475.2 719.3,475.2 719.0,475.2 718.7,475.2 718.4,475.2 718.1,475.2 717.8,475.2 717.5,475.2 717.2,475.2 716.9,475.2 716.6,475.3 716.3,475.3 716.0,475.3 715.7,475.3 715.4,475.3 715.0,475.4 714.7,475.4 714.4,475.4 714.1,475.5 713.8,475.5 713.5,475.5 713.2,475.6 712.9,475.6 712.6,475.7 712.3,475.7 712.0,475.8 711.7,475.8 711.4,475.9 711.1,476.0 710.8,476.0 710.5,476.1 710.2,476.2 709.9,476.3 709.6,476.3 709.3,476.4 709.0,476.5 708.7,476.6 708.4,476.7 708.1,476.8 707.8,476.9 707.5,477.0 707.2,477.1 706.9,477.3 706.6,477.4 706.3,477.5 706.0,477.6 705.7,477.8 705.4,477.9 705.1,478.0 704.8,478.2 704.5,478.3 704.2,478.5 703.8,478.6 703.5,478.8 703.2,478.9 702.9,479.1 702.6,479.3 702.3,479.5 702.0,479.6 701.7,479.8 701.4,480.0 701.1,480.2 700.8,480.4 700.5,480.6 700.2,480.8 699.9,481.0 699.6,481.2 699.3,481.4 699.0,481.6 698.7,481.8 698.4,482.0 698.1,482.2 697.8,482.5 697.5,482.7 697.2,482.9 696.9,483.2 696.6,483.4 696.3,483.6 696.0,483.9 695.7,484.1 695.4,484.4 695.1,484.6 694.8,484.9 694.5,485.1 694.2,485.4 693.9,485.7 693.6,485.9 693.3,486.2 693.0,486.4 692.6,486.7 692.3,487.0 692.0,487.3 691.7,487.5 691.4,487.8 691.1,488.1 690.8,488.4 690.5,488.7 690.2,488.9 689.9,489.2 689.6,489.5 689.3,489.8 689.0,490.1 688.7,490.4 688.4,490.7 688.1,491.0 687.8,491.2 687.5,491.5 687.2,491.8 686.9,492.1 686.6,492.4 686.3,492.7 686.0,493.0 685.7,493.3 685.4,493.6 685.1,493.9 684.8,494.2 684.5,494.5 684.2,494.8 683.9,495.1 683.6,495.4 683.3,495.7 683.0,496.0 682.7,496.3 682.4,496.5 682.1,496.8 681.8,497.1 681.4,497.4 681.1,497.7 680.8,498.0 680.5,498.3 680.2,498.6 679.9,498.8 679.6,499.1 679.3,499.4 679.0,499.7 678.7,500.0 678.4,500.2 678.1,500.5 677.8,500.8 677.5,501.0 677.2,501.3 676.9,501.6 676.6,501.8 676.3,502.1 676.0,502.3 675.7,502.6 675.4,502.8 675.1,503.1 674.8,503.3 674.5,503.6 674.2,503.8 673.9,504.0 673.6,504.3 673.3,504.5 673.0,504.7 672.7,504.9 672.4,505.1 672.1,505.3 671.8,505.6 671.5,505.8 671.2,506.0 670.9,506.2 670.6,506.4 670.2,506.5 669.9,506.7 669.6,506.9 669.3,507.1 669.0,507.3 668.7,507.4 668.4,507.6 668.1,507.7 667.8,507.9 667.5,508.0 667.2,508.2 666.9,508.3 666.6,508.5 666.3,508.6 666.0,508.7 665.7,508.8 665.4,509.0 665.1,509.1 664.8,509.2 664.5,509.3 664.2,509.4 663.9,509.5 663.6,509.5 663.3,509.6 663.0,509.7 662.7,509.8 662.4,509.8 662.1,509.9 661.8,510.0 661.5,510.0 661.2,510.0 660.9,510.1 660.6,510.1 660.3,510.1 660.0,510.2 659.7,510.2 659.4,510.2 659.0,510.2 658.7,510.2 658.4,510.2 658.1,510.2 657.8,510.2 657.5,510.1 657.2,510.1 656.9,510.1 656.6,510.1 656.3,510.0 656.0,510.0 655.7,509.9 655.4,509.9 655.1,509.8 654.8,509.7 654.5,509.6 654.2,509.6 653.9,509.5 653.6,509.4 653.3,509.3 653.0,509.2 652.7,509.1 652.4,509.0 652.1,508.9 651.8,508.8 651.5,508.6 651.2,508.5 650.9,508.4 650.6,508.2 650.3,508.1 650.0,507.9 649.7,507.8 649.4,507.6 649.1,507.5 648.8,507.3 648.5,507.1 648.2,507.0 647.8,506.8 647.5,506.6 647.2,506.4 646.9,506.2 646.6,506.0 646.3,505.8 646.0,505.6 645.7,505.4 645.4,505.2 645.1,505.0 644.8,504.8 644.5,504.5 644.2,504.3 643.9,504.1 643.6,503.9 643.3,503.6 643.0,503.4 642.7,503.1 642.4,502.9 642.1,502.7 641.8,502.4 641.5,502.1 641.2,501.9 640.9,501.6 640.6,501.4 640.3,501.1 640.0,500.8 639.7,500.6 639.4,500.3 639.1,500.0 638.8,499.8 638.5,499.5 638.2,499.2 637.9,498.9 637.6,498.6 637.3,498.4 637.0,498.1 636.6,497.8 636.3,497.5 636.0,497.2 635.7,496.9 635.4,496.6 635.1,496.3 634.8,496.0 634.5,495.8 634.2,495.5 633.9,495.2 633.6,494.9 633.3,494.6 633.0,494.3 632.7,494.0 632.4,493.7 632.1,493.4 631.8,493.1 631.5,492.8 631.2,492.5 630.9,492.2 630.6,491.9 630.3,491.6 630.0,491.3 629.7,491.0 629.4,490.7 629.1,490.5 628.8,490.2 628.5,489.9 628.2,489.6 627.9,489.3 627.6,489.0 627.3,488.7 627.0,488.5 626.7,488.2 626.4,487.9 626.1,487.6 625.8,487.3 625.4,487.1 625.1,486.8 624.8,486.5 624.5,486.3 624.2,486.0 623.9,485.7 623.6,485.5 623.3,485.2 623.0,485.0 622.7,484.7 622.4,484.4 622.1,484.2 621.8,484.0 621.5,483.7 621.2,483.5 620.9,483.2 620.6,483.0 620.3,482.8 620.0,482.5 619.7,482.3 619.4,482.1 619.1,481.9 618.8,481.7 618.5,481.4 618.2,481.2 617.9,481.0 617.6,480.8 617.3,480.6 617.0,480.4 616.7,480.2 616.4,480.1 616.1,479.9 615.8,479.7 615.5,479.5 615.2,479.3 614.9,479.2 614.6,479.0 614.2,478.8 613.9,478.7 613.6,478.5 613.3,478.4 613.0,478.2 612.7,478.1 612.4,477.9 612.1,477.8 612.4,477.7 612.7,477.5 613.0,477.4 613.3,477.3 613.6,477.2 613.9,477.1 614.2,476.9 614.5,476.8 614.8,476.7 615.1,476.6 615.4,476.5 615.7,476.5 616.0,476.4 616.3,476.3 616.6,476.2 616.9,476.1 617.2,476.1 617.5,476.0 617.8,475.9 618.1,475.9 618.4,475.8 618.7,475.7 619.0,475.7 619.3,475.6 619.6,475.6 619.9,475.5 620.2,475.5 620.5,475.5 620.8,475.4 621.2,475.4 621.5,475.4 621.8,475.3 622.1,475.3 622.4,475.3 622.7,475.3 623.0,475.3 623.3,475.2 623.6,475.2 623.9,475.2 624.2,475.2 624.5,475.2 624.8,475.2 625.1,475.2 625.4,475.2 625.7,475.2 626.0,475.2 626.3,475.2 626.6,475.2 626.9,475.2 627.2,475.2 627.5,475.2 627.8,475.2 628.1,475.2 628.4,475.2 628.7,475.2 629.0,475.1 629.3,475.1 629.6,475.1 629.9,475.1 630.2,475.1 630.5,475.0 630.8,475.0 631.1,475.0 631.4,474.9 631.7,474.9 632.0,474.9 632.4,474.8 632.7,474.8 633.0,474.7 633.3,474.7 633.6,474.6 633.9,474.6 634.2,474.5 634.5,474.4 634.8,474.4 635.1,474.3 635.4,474.2 635.7,474.1 636.0,474.1 636.3,474.0 636.6,473.9 636.9,473.8 637.2,473.7 637.5,473.6 637.8,473.5 638.1,473.4 638.4,473.2 638.7,473.1 639.0,473.0 639.3,472.9 639.6,472.8 639.9,472.6 640.2,472.5 640.5,472.4 640.8,472.2 641.1,472.1 641.4,471.9 641.7,471.8 642.0,471.6 642.3,471.4 642.6,471.3 642.9,471.1 643.2,470.9 643.5,470.7 643.9,470.6 644.2,470.4 644.5,470.2 644.8,470.0 645.1,469.8 645.4,469.6 645.7,469.4 646.0,469.2 646.3,469.0 646.6,468.8 646.9,468.6 647.2,468.3 647.5,468.1 647.8,467.9 648.1,467.7 648.4,467.4 648.7,467.2 649.0,467.0 649.3,466.7 649.6,466.5 649.9,466.2 650.2,466.0 650.5,465.7 650.8,465.5 651.1,465.2 651.4,465.0 651.7,464.7 652.0,464.5 652.3,464.2 652.6,463.9 652.9,463.7 653.2,463.4 653.5,463.1 653.8,462.8 654.1,462.6 654.4,462.3 654.7,462.0 655.1,461.7 655.4,461.4 655.7,461.2 656.0,460.9 656.3,460.6 656.6,460.3 656.9,460.0 657.2,459.7 657.5,459.4 657.8,459.1 658.1,458.8 658.4,458.5 658.7,458.2 659.0,457.9 659.3,457.7 659.6,457.4 659.9,457.1 660.2,456.8 660.5,456.5 660.8,456.2 661.1,455.9 661.4,455.6 661.7,455.3 662.0,455.0 662.3,454.7 662.6,454.4 662.9,454.1 663.2,453.8 663.5,453.5 663.8,453.2 664.1,453.0 664.4,452.7 664.7,452.4 665.0,452.1 665.3,451.8 665.6,451.5 665.9,451.3 666.3,451.0 666.6,450.7 666.9,450.4 667.2,450.1 667.5,449.9 667.8,449.6 668.1,449.3 668.4,449.1 668.7,448.8 669.0,448.6 669.3,448.3 669.6,448.0 669.9,447.8 670.2,447.5 670.5,447.3 670.8,447.1 671.1,446.8 671.4,446.6 671.7,446.4 672.0,446.1 672.3,445.9 672.6,445.7 672.9,445.5 673.2,445.2 673.5,445.0 673.8,444.8 674.1,444.6 674.4,444.4 674.7,444.2 675.0,444.0 675.3,443.8 675.6,443.7 675.9,443.5 676.2,443.3 676.5,443.1 676.8,443.0 677.1,442.8 677.5,442.6 677.8,442.5 678.1,442.3 678.4,442.2 678.7,442.1 679.0,441.9 679.3,441.8 679.6,441.7 679.9,441.5 680.2,441.4 680.5,441.3 680.8,441.2 681.1,441.1 681.4,441.0 681.7,440.9 682.0,440.8 682.3,440.8 682.6,440.7 682.9,440.6 683.2,440.6 683.5,440.5 683.8,440.4 684.1,440.4 684.4,440.4 684.7,440.3 685.0,440.3 685.3,440.3 685.6,440.2 685.9,440.2 686.2,440.2 686.5,440.2 686.8,440.2 687.1,440.2 687.4,440.2 687.7,440.2 688.0,440.3 688.3,440.3 688.7,440.3 689.0,440.3 689.3,440.4 689.6,440.4 689.9,440.5 690.2,440.6 690.5,440.6 690.8,440.7 691.1,440.8 691.4,440.8 691.7,440.9 692.0,441.0 692.3,441.1 692.6,441.2 692.9,441.3 693.2,441.4 693.5,441.5 693.8,441.7 694.1,441.8 694.4,441.9 694.7,442.0 695.0,442.2 695.3,442.3 695.6,442.5 695.9,442.6 696.2,442.8 696.5,442.9 696.8,443.1 697.1,443.3 697.4,443.5 697.7,443.6 698.0,443.8 698.3,444.0 698.6,444.2 698.9,444.4 699.2,444.6 699.5,444.8 699.9,445.0 700.2,445.2 700.5,445.4 700.8,445.7 701.1,445.9 701.4,446.1 701.7,446.3 702.0,446.6 702.3,446.8 702.6,447.0 702.9,447.3 703.2,447.5 703.5,447.8 703.8,448.0 704.1,448.3 704.4,448.5 704.7,448.8 705.0,449.1 705.3,449.3 705.6,449.6 705.9,449.9 706.2,450.1 706.5,450.4 706.8,450.7 707.1,450.9 707.4,451.2 707.7,451.5 708.0,451.8 708.3,452.1 708.6,452.4 708.9,452.6 709.2,452.9 709.5,453.2 709.8,453.5 710.1,453.8 710.4,454.1 710.7,454.4 711.1,454.7 711.4,455.0 711.7,455.3 712.0,455.6 712.3,455.9 712.6,456.1 712.9,456.4 713.2,456.7 713.5,457.0 713.8,457.3 714.1,457.6 714.4,457.9 714.7,458.2 715.0,458.5 715.3,458.8 715.6,459.1 715.9,459.4 716.2,459.7 716.5,460.0 716.8,460.3 717.1,460.6 717.4,460.8 717.7,461.1 718.0,461.4 718.3,461.7 718.6,462.0 718.9,462.3 719.2,462.5 719.5,462.8 719.8,463.1 720.1,463.4 720.4,463.6 720.7,463.9 721.0,464.2 721.3,464.4 721.6,464.7 721.9,465.0 722.3,465.2 722.6,465.5 722.9,465.7 723.2,466.0 723.5,466.2 723.8,466.5 724.1,466.7 724.4,467.0 724.7,467.2 725.0,467.4 725.3,467.7 725.6,467.9 725.9,468.1 726.2,468.3 726.5,468.5 726.8,468.8 727.1,469.0 727.4,469.2 727.7,469.4 728.0,469.6 728.3,469.8 728.6,470.0 728.9,470.2 729.2,470.4 729.5,470.6 729.8,470.7 730.1,470.9 730.4,471.1 730.7,471.3 731.0,471.4 731.3,471.6 731.6,471.7 731.9,471.9 732.2,472.0 732.5,472.2 732.8,472.3 733.1,472.5 733.5,472.6 733.8,472.7 734.1,472.9 734.4,473.0 734.7,473.1 735.0,473.2 735.3,473.4 735.6,473.5 735.9,473.6 736.2,473.7 736.5,473.8 736.8,473.9 737.1,474.0 736.8,474.0 736.5,474.1 736.2,474.2 735.9,474.3 735.6,474.4 735.3,474.4 735.0,474.5 734.7,474.6 734.4,474.6 734.1,474.7 733.8,474.7 733.5,474.8 733.2,474.8 732.9,474.9 732.6,474.9 732.3,474.9 732.0,475.0 731.7,475.0 731.4,475.0 731.1,475.1 730.8,475.1 730.5,475.1 730.2,475.1 729.9,475.1 729.5,475.2 729.2,475.2 728.9,475.2 728.6,475.2 728.3,475.2 728.0,475.2 727.7,475.2 727.4,475.2 727.1,475.2 726.8,475.2 726.5,475.2 726.2,475.2 725.9,475.2 725.6,475.2 725.3,475.2 725.0,475.2 724.7,475.2 724.4,475.2 724.1,475.2 723.8,475.3 723.5,475.3 723.2,475.3 722.9,475.3 722.6,475.3 722.3,475.4 722.0,475.4 721.7,475.4 721.4,475.5 721.1,475.5 720.8,475.5 720.5,475.6 720.2,475.6 719.9,475.7 719.6,475.7 719.3,475.8 719.0,475.8 718.7,475.9 718.3,476.0 718.0,476.0 717.7,476.1 717.4,476.2 717.1,476.3 716.8,476.4 716.5,476.4 716.2,476.5 715.9,476.6 715.6,476.7 715.3,476.8 715.0,476.9 714.7,477.0 714.4,477.2 714.1,477.3 713.8,477.4 713.5,477.5 713.2,477.7 712.9,477.8 712.6,477.9 712.3,478.1 712.0,478.2 711.7,478.4 711.4,478.5 711.1,478.7 710.8,478.8 710.5,479.0 710.2,479.1 709.9,479.3 709.6,479.5 709.3,479.7 709.0,479.9 708.7,480.0 708.4,480.2 708.1,480.4 707.8,480.6 707.5,480.8 707.1,481.0 706.8,481.2 706.5,481.4 706.2,481.6 705.9,481.9 705.6,482.1 705.3,482.3 705.0,482.5 704.7,482.7 704.4,483.0 704.1,483.2 703.8,483.5 703.5,483.7 703.2,483.9 702.9,484.2 702.6,484.4 702.3,484.7 702.0,484.9 701.7,485.2 701.4,485.4 701.1,485.7 700.8,486.0 700.5,486.2 700.2,486.5 699.9,486.8 699.6,487.0 699.3,487.3 699.0,487.6 698.7,487.9 698.4,488.1 698.1,488.4 697.8,488.7 697.5,489.0 697.2,489.3 696.9,489.6 696.6,489.9 696.3,490.1 695.9,490.4 695.6,490.7 695.3,491.0 695.0,491.3 694.7,491.6 694.4,491.9 694.1,492.2 693.8,492.5 693.5,492.8 693.2,493.1 692.9,493.4 692.6,493.7 692.3,494.0 692.0,494.3 691.7,494.5 691.4,494.8 691.1,495.1 690.8,495.4 690.5,495.7 690.2,496.0 689.9,496.3 689.6,496.6 689.3,496.9 689.0,497.2 688.7,497.5 688.4,497.8 688.1,498.0 687.8,498.3 687.5,498.6 687.2,498.9 686.9,499.2 686.6,499.5 686.3,499.7 686.0,500.0 685.7,500.3 685.4,500.5 685.1,500.8 684.7,501.1 684.4,501.3 684.1,501.6 683.8,501.9 683.5,502.1 683.2,502.4 682.9,502.6 682.6,502.9 682.3,503.1 682.0,503.4 681.7,503.6 681.4,503.8 681.1,504.1 680.8,504.3 680.5,504.5 680.2,504.7 679.9,505.0 679.6,505.2 679.3,505.4 679.0,505.6 678.7,505.8 678.4,506.0 678.1,506.2 677.8,506.4 677.5,506.6 677.2,506.8 676.9,506.9 676.6,507.1 676.3,507.3 676.0,507.5 675.7,507.6 675.4,507.8 675.1,507.9 674.8,508.1 674.5,508.2 674.2,508.4 673.9,508.5 673.5,508.6 673.2,508.7 672.9,508.9 672.6,509.0 672.3,509.1 672.0,509.2 671.7,509.3 671.4,509.4 671.1,509.5 670.8,509.6 670.5,509.6 670.2,509.7 669.9,509.8 669.6,509.8 669.3,509.9 669.0,510.0 668.7,510.0 668.4,510.1 668.1,510.1 667.8,510.1 667.5,510.1 667.2,510.2 666.9,510.2 666.6,510.2 666.3,510.2 666.0,510.2 665.7,510.2 665.4,510.2 665.1,510.2 664.8,510.1 664.5,510.1 664.2,510.1 663.9,510.0 663.6,510.0 663.3,510.0 663.0,509.9 662.7,509.8 662.3,509.8 662.0,509.7 661.7,509.6 661.4,509.6 661.1,509.5 660.8,509.4 660.5,509.3 660.2,509.2 659.9,509.1 659.6,509.0 659.3,508.9 659.0,508.7 658.7,508.6 658.4,508.5 658.1,508.3 657.8,508.2 657.5,508.1 657.2,507.9 656.9,507.8 656.6,507.6 656.3,507.4 656.0,507.3 655.7,507.1 655.4,506.9 655.1,506.7 654.8,506.6 654.5,506.4 654.2,506.2 653.9,506.0 653.6,505.8 653.3,505.6 653.0,505.4 652.7,505.2 652.4,504.9 652.1,504.7 651.8,504.5 651.5,504.3 651.1,504.0 650.8,503.8 650.5,503.6 650.2,503.3 649.9,503.1 649.6,502.8 649.3,502.6 649.0,502.3 648.7,502.1 648.4,501.8 648.1,501.6 647.8,501.3 647.5,501.1 647.2,500.8 646.9,500.5 646.6,500.2 646.3,500.0 646.0,499.7 645.7,499.4 645.4,499.1 645.1,498.9 644.8,498.6 644.5,498.3 644.2,498.0 643.9,497.7 643.6,497.4 643.3,497.2 643.0,496.9 642.7,496.6 642.4,496.3 642.1,496.0 641.8,495.7 641.5,495.4 641.2,495.1 640.9,494.8 640.6,494.5 640.3,494.2 639.9,493.9 639.6,493.6 639.3,493.3 639.0,493.0 638.7,492.7 638.4,492.4 638.1,492.2 637.8,491.9 637.5,491.6 637.2,491.3 636.9,491.0 636.6,490.7 636.3,490.4 636.0,490.1 635.7,489.8 635.4,489.5 635.1,489.2 634.8,489.0 634.5,488.7 634.2,488.4 633.9,488.1 633.6,487.8 633.3,487.6 633.0,487.3 632.7,487.0 632.4,486.7 632.1,486.5 631.8,486.2 631.5,485.9 631.2,485.7 630.9,485.4 630.6,485.2 630.3,484.9 630.0,484.6 629.7,484.4 629.4,484.2 629.1,483.9 628.7,483.7 628.4,483.4 628.1,483.2 627.8,483.0 627.5,482.7 627.2,482.5 626.9,482.3 626.6,482.0 626.3,481.8 626.0,481.6 625.7,481.4 625.4,481.2 625.1,481.0 624.8,480.8 624.5,480.6 624.2,480.4 623.9,480.2 623.6,480.0 623.3,479.8 623.0,479.7 622.7,479.5 622.4,479.3 622.1,479.1 621.8,479.0 621.5,478.8 621.2,478.6 620.9,478.5 620.6,478.3 620.3,478.2 620.0,478.0 619.7,477.9 619.4,477.8 619.1,477.6 618.8,477.5 618.5,477.4 618.2,477.3 617.9,477.1 617.5,477.0 617.2,476.9 616.9,476.8 616.6,476.7 616.3,476.6 616.0,476.5 615.7,476.4 615.4,476.3 615.1,476.3 614.8,476.2 614.5,476.1 614.2,476.0" fill="none" stroke="#00ff00" stroke-width="1" shape-rendering="crispEdges"/></svg>
<svg style="left:0px;top:0px" width="884" height="592" viewBox="0 0 884 592"><path d="M497.5,482 H501 V475.5 H505" stroke="#e8e8e8" stroke-width="2" fill="none"/></svg>
<div style="position:absolute;left:508px;top:534px;width:334px;height:16px;background:#000"></div>
<div style="position:absolute;left:508px;top:534px;width:15px;height:15px;background:#f0f0f0;border-top:1px solid #fff;border-left:1px solid #fff;border-right:1px solid #a0a0a0;border-bottom:1px solid #a0a0a0"></div>
<div style="position:absolute;left:523px;top:534px;width:302px;height:15px;background:#f0f0f0;border-top:1px solid #fff;border-left:1px solid #fff;border-right:1px solid #a0a0a0;border-bottom:1px solid #a0a0a0"></div>
<div style="position:absolute;left:826px;top:534px;width:15px;height:15px;background:#f0f0f0;border-top:1px solid #fff;border-left:1px solid #fff;border-right:1px solid #a0a0a0;border-bottom:1px solid #a0a0a0"></div>
<svg style="left:0px;top:0px" width="884" height="592" viewBox="0 0 884 592"><polygon points="831,537.7 837.3,541.2 831,544" fill="#000"/><polygon points="511.8,541.5 518,537.9 518,543.8" fill="#000"/><polygon points="519.2,541.7 523.65,535.6 530,541.7" fill="#000"/><rect x="522.6" y="541.5" width="1.6" height="8" fill="#000"/></svg>
<div style="position:absolute;left:453px;top:550px;width:429px;height:21px;background:#000;border-top:1px solid #fff;border-bottom:2px solid #a0a0a0;border-right:1px solid #a0a0a0"></div>
<div class="t" style="left:487.5px;top:553px;width:41px;height:15px;background:#00ff00;border-radius:4px;color:#000;font-size:11px;line-height:15px;text-align:center">-20.000</div>
<div class="t" style="left:821.5px;top:552.5px;width:41px;height:15px;background:#00ff00;border-radius:4px;color:#000;font-size:11px;line-height:15px;text-align:center">20.000</div>
<div class="t" style="left:552px;top:556.0px;width:80px;text-align:center;font-size:11px;color:#00ff00">-10.000</div>
<div class="t" style="left:635px;top:556.0px;width:80px;text-align:center;font-size:11px;color:#00ff00">0.000</div>
<div class="t" style="left:718px;top:556.0px;width:80px;text-align:center;font-size:11px;color:#00ff00">10.000</div>
<div style="position:absolute;left:867px;top:551px;width:13px;height:18px;background:#00ff00"></div>
<div style="position:absolute;left:451px;top:573px;width:433px;height:1px;background:#fff"></div>
<svg style="left:0px;top:0px" width="884" height="592" viewBox="0 0 884 592"><path d="M880,582h2v2h-2zM876,586h2v2h-2zM880,586h2v2h-2zM872,590h2v2h-2zM876,590h2v2h-2zM880,590h2v2h-2z" fill="#c0c0c0"/></svg>
</body></html>
